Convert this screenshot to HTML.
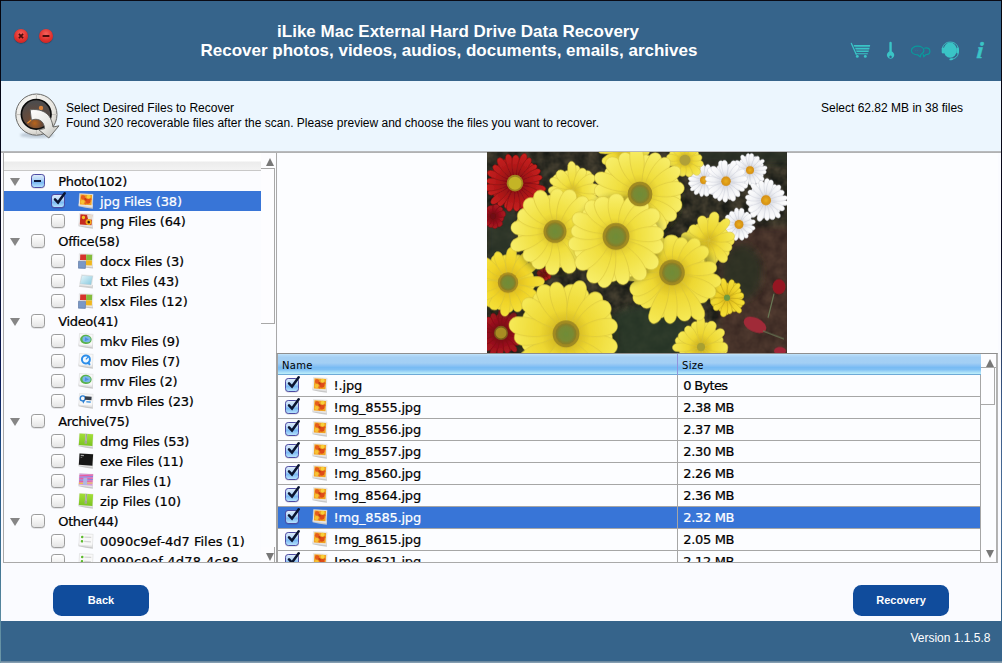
<!DOCTYPE html><html><head><meta charset="utf-8"><title>iLike Mac External Hard Drive Data Recovery</title><style>
*{box-sizing:border-box;margin:0;padding:0}
html,body{width:1002px;height:663px;overflow:hidden;background:#fafbff}
body{position:relative;font-family:"Liberation Sans",sans-serif;color:#000}
.abs{position:absolute}
#frameT{left:0;top:0;width:1002px;height:1px;background:#0a0a14}
#frameL{left:0;top:0;width:1px;height:663px;background:linear-gradient(#05050c 0,#060a24 250px,#0a1a58 380px,#1c4c84 450px,#3f7392 560px,#5a8aa0 620px,#6f98a8 663px)}
#frameR{left:1001px;top:0;width:1px;height:621px;background:linear-gradient(#05050c 0,#0a0a20 250px,#3a5a88 400px,#4a6e98 500px,#36648b 621px)}
#hdr{left:1px;top:1px;width:1000px;height:80px;background:#36648b}
#hdr .t{position:absolute;left:0;width:898px;text-align:center;color:#fff;font-weight:bold;font-size:17px;line-height:20px;white-space:nowrap}
.dot{position:absolute;width:14px;height:14px;border-radius:50%;top:28px;background:radial-gradient(circle at 50% 35%,#f4625c 0,#e0302c 55%,#c01c1c 100%);box-shadow:0 0.5px 1px rgba(0,0,0,.45)}
#info{left:1px;top:81px;width:1000px;height:71px;background:#ecf6fe}
#info .l{position:absolute;left:65px;font-size:12px;line-height:15px;white-space:nowrap;color:#000}
#main{left:1px;top:152px;width:1000px;height:469px;background:#fafbff}
#tree{left:3px;top:153px;width:274px;height:410px;border:1px solid #a9a9a9;border-top:0;background:#fbfcff;overflow:hidden}
#tree .hd{position:absolute;left:0;top:0;width:257px;height:18px;background:linear-gradient(#ffffff 0,#ffffff 45%,#ececec 55%,#f3f3f3 100%);border-bottom:1px solid #c8c8c8}
.trow{position:absolute;left:0;width:257px;height:20px}
.trow.sel,.frow.sel{background:#3875d7;color:#fff}
.tl{position:absolute;top:1px;font-family:"DejaVu Sans","Liberation Sans",sans-serif;font-size:13px;line-height:20px;white-space:nowrap;-webkit-text-stroke:0.22px}
.tri{position:absolute;left:5.6px;top:7px;width:0;height:0;border-left:5px solid transparent;border-right:5px solid transparent;border-top:8px solid #868686}
.cbw{position:absolute;top:2px;width:18px;height:18px}
.icw{position:absolute;top:2px;width:16px;height:16px}
.ico{display:block}
.cb{position:absolute;left:0px;top:1px;width:14px;height:14px;border:1px solid #9c9c9c;border-radius:3.2px;background:linear-gradient(#ffffff 0,#f2f2f2 55%,#e4e4e4 100%);box-shadow:0 0.5px 0.5px rgba(0,0,0,.18)}
.cb.on{border-color:#4c4aa2;background:linear-gradient(#deecfb 0,#b4d6f7 38%,#7cb9f3 62%,#b6e3fd 100%)}
.cb svg{position:absolute;left:-1.6px;top:-5px}
.cb .dash{position:absolute;left:2.4px;top:4.6px;width:6.8px;height:2.2px;background:#0c1838}
.sb{position:absolute;background:#fcfdff}
.sbtn{position:absolute;background:#fdfdff;border-right:1px solid #a8a8a8;border-bottom:1px solid #a8a8a8}
.aup{position:absolute;width:0;height:0;border-left:4.2px solid transparent;border-right:4.2px solid transparent;border-bottom:8px solid #787878}
.adn{position:absolute;width:0;height:0;border-left:4.2px solid transparent;border-right:4.2px solid transparent;border-top:8px solid #787878}
#right{left:278px;top:152px;width:720px;height:201px;background:#fcfdff}
.photo{position:absolute;left:487px;top:152px;z-index:3}
#tbl{left:276px;top:353px;width:722px;height:210px;border-left:2px solid #a2a2a2;border-top:1px solid #8f8f8f;border-bottom:1px solid #a9a9a9;border-right:1px solid #b4b4b4;overflow:hidden;background:#fcfdff}
#tbl .th{position:absolute;left:0;top:0;width:703px;height:21px;background:linear-gradient(#c3e4fa 0,#b1d8f7 1.5px,#a5d0f4 3.5px,#a3cff4 9px,#8cc3f4 11.5px,#78bbf3 13.5px,#80c0f4 15.5px,#a6dcf8 18px,#b8ebfa 19.5px,#b8ebfa 20px,#6eaad7 20px,#6eaad7 21px);font-family:"DejaVu Sans",sans-serif;font-size:10px;line-height:23px;letter-spacing:0.3px}
.frow{position:absolute;left:0;width:703px;height:22px;border-bottom:1px solid #a6a6a6;font-family:"DejaVu Sans","Liberation Sans",sans-serif;font-size:13px;line-height:21px;white-space:nowrap;-webkit-text-stroke:0.22px}
.fn{position:absolute;left:55.6px;top:0;letter-spacing:-0.22px}
.fs{position:absolute;left:405.3px;top:0;letter-spacing:-0.33px}
.vline{position:absolute;width:1px;background:#a6a6a6}
.btn{position:absolute;top:585px;width:96px;height:31px;border-radius:8.5px;background:#104c9c;color:#fff;font-weight:bold;font-size:11px;line-height:30px;text-align:center}
#ftr{left:1px;top:621px;width:1001px;height:40px;background:#36648b}
#ftr span{position:absolute;right:11.5px;top:10px;font-size:12px;line-height:15px;color:#fff;white-space:nowrap}
#bot{left:0;top:661px;width:1002px;height:2px;background:linear-gradient(#5f7f98,#8fa6b8)}
</style></head><body>
<div id="main" class="abs"></div>
<div id="hdr" class="abs"><i class="dot" style="left:13px"></i><i class="dot" style="left:38px"></i><svg class="abs" style="left:13px;top:28px" width="40" height="14" viewBox="0 0 40 14"><path d="M4.9 4.9 L9.1 9.1 M9.1 4.9 L4.9 9.1" stroke="#4a0c0c" stroke-width="1.7"/><path d="M28.6 7 H35.4" stroke="#4a0c0c" stroke-width="2"/></svg><div class="t" style="top:21px;left:8px">iLike Mac External Hard Drive Data Recovery</div><div class="t" style="top:40px;left:-1px">Recover photos, videos, audios, documents, emails, archives</div></div>

<svg class="abs" style="left:845px;top:36px" width="150" height="28" viewBox="845 36 150 28">
 <g fill="none" stroke="#3ac4c6" stroke-linecap="round">
  <path d="M851.4 43.4 L856.2 54.2" stroke-width="1.3"/>
  <path d="M856 53.8 L867.4 53.8" stroke-width="1.1"/>
 </g>
 <g fill="#3ac4c6">
  <path d="M853.6 45 H870.2 L869.9 46.7 H854.3 Z"/>
  <path d="M855 47.7 H869.6 L869.2 49.4 H855.7 Z"/>
  <path d="M856 50.4 H868.9 L868.5 52.1 H856.7 Z"/>
  <circle cx="857.3" cy="56.4" r="1.45"/><circle cx="865.3" cy="56.4" r="1.45"/>
 </g>
 <g fill="#3ac4c6">
  <rect x="889.35" y="41.8" width="2.4" height="11" rx="1.2"/>
  <path d="M890.55 51.3 a3.7 3.7 0 1 0 0.01 0 Z M890.55 55.6 a1.25 1.25 0 1 1 -0.01 0 Z" fill-rule="evenodd"/>
 </g>
 <g fill="none" stroke="#0a9a9c" stroke-width="1.2" stroke-linejoin="round">
  <path d="M917.6 46.2 c3.6 0 6.2 1.9 6.2 4.3 c0 1.6 -1.1 3 -2.9 3.7 l-0.6 2.8 l-2.6 -2.2 c-3.6 0 -6.3 -1.9 -6.3 -4.3 c0 -2.4 2.7 -4.3 6.2 -4.3 Z"/>
  <path d="M924.2 48.2 c0.5 -0.2 1.2 -0.3 1.9 -0.3 c2.2 0 3.8 1.5 3.8 3.3 c0 1.8 -1.6 3.3 -3.8 3.3 l-2.4 2.3 l-0.5 -2.8"/>
  <path d="M915 50.4 h0.6 M917.4 50.4 h0.6 M919.8 50.4 h0.6" stroke-width="1" opacity="0.8"/>
 </g>
 <g fill="#3ac4c6">
  <ellipse cx="950.2" cy="50.1" rx="6.6" ry="7.6"/>
  <rect x="941.7" y="47.4" width="2.7" height="6" rx="1.1"/>
  <rect x="956.3" y="47.4" width="2.7" height="6" rx="1.1"/>
 </g>
 <path d="M942.4 47.8 A8.3 8.3 0 0 1 958.2 47.8" fill="none" stroke="#3ac4c6" stroke-width="0.9"/>
 <path d="M958.3 53 C958 56.4 955.4 58.8 951.4 59.3" fill="none" stroke="#3ac4c6" stroke-width="0.9"/>
 <ellipse cx="951.2" cy="59.3" rx="1.9" ry="0.95" fill="#3ac4c6" transform="rotate(-12 951.2 59.3)"/>
 <text x="976.2" y="58.5" transform="translate(979 58.5) skewX(-5) translate(-979 -58.5)" font-family="Liberation Serif, serif" font-style="italic" font-weight="bold" font-size="23" fill="#3ac4c6" stroke="#3ac4c6" stroke-width="0.5">i</text>
</svg>

<div id="info" class="abs"><div class="l" style="top:20px">Select Desired Files to Recover</div><div class="l" style="top:35px">Found 320 recoverable files after the scan. Please preview and choose the files you want to recover.</div><div class="l" style="top:20px;left:820px">Select 62.82 MB in 38 files</div></div>

<svg class="abs" style="left:10px;top:90px" width="54" height="52" viewBox="10 90 54 52">
 <defs>
  <radialGradient id="ring" cx="40%" cy="35%" r="75%"><stop offset="0" stop-color="#ffffff"/><stop offset="0.7" stop-color="#e8e6e0"/><stop offset="1" stop-color="#b8b6b0"/></radialGradient>
  <radialGradient id="core" cx="45%" cy="80%" r="70%"><stop offset="0" stop-color="#b8641c"/><stop offset="0.35" stop-color="#6a4a38"/><stop offset="1" stop-color="#4e4c4c"/></radialGradient>
  <linearGradient id="arr" x1="0" y1="0" x2="1" y2="1"><stop offset="0" stop-color="#ffffff"/><stop offset="0.6" stop-color="#e6e6e2"/><stop offset="1" stop-color="#b4b4b0"/></linearGradient>
  <filter id="ish"><feGaussianBlur stdDeviation="1.2"/></filter>
 </defs>
 <ellipse cx="37" cy="135" rx="17" ry="3" fill="#9aa8b8" opacity="0.55" filter="url(#ish)"/>
 <circle cx="36.4" cy="114.6" r="20.6" fill="url(#ring)" stroke="#6a6a68" stroke-width="1"/>
 <path d="M36.4 94 V100 M36.4 129 V135 M15.8 114.6 H22 M51 114.6 H57" stroke="#c4c2bc" stroke-width="1"/>
 <circle cx="36.2" cy="114.3" r="14.8" fill="url(#core)" stroke="#0c0c0c" stroke-width="1.7"/>
 <circle cx="41" cy="108" r="2.2" fill="#e88a3a" opacity="0.9"/>
 <path d="M27.4 123.2 L31.6 119.6" stroke="#f0902c" stroke-width="1.2"/>
 <path d="M30.2 109.8 C38 108.6 47 111 50.6 118.6 C52 121.6 52.6 124.4 53 127 L59 125.8 L48.8 138 L38.6 129.6 L44.6 128.6 C44.4 124.6 42.6 121.4 39.4 120 C36.6 118.8 33.6 119.2 31.4 120.2 Z" fill="url(#arr)" stroke="#5c5c5a" stroke-width="0.9" stroke-linejoin="round"/>
</svg>

<div id="right" class="abs"></div>
<div class="abs" style="left:1px;top:151px;width:1000px;height:2px;background:linear-gradient(#bcbec2,#adadad)"></div>
<svg class="photo" width="300" height="201" viewBox="0 0 300 200" preserveAspectRatio="none">
<defs><radialGradient id="yc"><stop offset="0" stop-color="#6f8c38"/><stop offset="0.65" stop-color="#788a34"/><stop offset="1" stop-color="#8c7c24"/></radialGradient><radialGradient id="wc"><stop offset="0" stop-color="#eab020"/><stop offset="1" stop-color="#d48c10"/></radialGradient><linearGradient id="py" x1="0" y1="0" x2="1" y2="0"><stop offset="0" stop-color="#d0b420"/><stop offset="0.35" stop-color="#f0de3c"/><stop offset="1" stop-color="#f8ef6c"/></linearGradient><linearGradient id="py2" x1="0" y1="0" x2="1" y2="0"><stop offset="0" stop-color="#caac1c"/><stop offset="0.4" stop-color="#eed832"/><stop offset="1" stop-color="#f6ea58"/></linearGradient><linearGradient id="py3" x1="0" y1="0" x2="1" y2="0"><stop offset="0" stop-color="#d8b41c"/><stop offset="0.5" stop-color="#f0d428"/><stop offset="1" stop-color="#f6e23c"/></linearGradient><linearGradient id="pr" x1="0" y1="0" x2="1" y2="0"><stop offset="0" stop-color="#7c0e10"/><stop offset="0.5" stop-color="#ae1618"/><stop offset="1" stop-color="#c8221e"/></linearGradient><linearGradient id="pr2" x1="0" y1="0" x2="1" y2="0"><stop offset="0" stop-color="#6a0c12"/><stop offset="0.5" stop-color="#960f1c"/><stop offset="1" stop-color="#ae1a22"/></linearGradient><linearGradient id="pw" x1="0" y1="0" x2="1" y2="0"><stop offset="0" stop-color="#d4d6de"/><stop offset="0.5" stop-color="#f2f3f6"/><stop offset="1" stop-color="#ffffff"/></linearGradient><filter id="bl" x="-2%" y="-2%" width="104%" height="104%"><feGaussianBlur stdDeviation="0.55"/></filter><filter id="bg" x="0" y="0" width="100%" height="100%" color-interpolation-filters="sRGB"><feTurbulence type="fractalNoise" baseFrequency="0.09" numOctaves="3" seed="4" result="n"/><feColorMatrix in="n" type="matrix" values="0.34 0 0 0 0.02  0.28 0 0 0 0.04  0.20 0 0 0 0.04  0 0 0 0 1"/></filter><filter id="sh" x="-20%" y="-20%" width="140%" height="140%"><feGaussianBlur stdDeviation="3"/></filter></defs>
<rect width="300" height="200" fill="#383a2e"/>
<rect width="300" height="200" filter="url(#bg)" opacity="0.9"/>
<rect x="232" y="74" width="80" height="140" fill="#5a342e" opacity="0.5" filter="url(#sh)"/>
<ellipse cx="160" cy="182" rx="45" ry="30" fill="#2a3a2a" opacity="0.8" filter="url(#sh)"/>
<ellipse cx="255" cy="120" rx="20" ry="28" fill="#283224" opacity="0.7" filter="url(#sh)"/>
<rect x="0" y="58" width="28" height="50" fill="#2e382c" opacity="0.8" filter="url(#sh)"/>
<rect x="205" y="-4" width="99" height="16" fill="#2a3226" opacity="0.8" filter="url(#sh)"/>
<g filter="url(#bl)">
<g transform="translate(28.0,31.0) scale(1,1)">
<path transform="rotate(-1.8)" d="M3.2 0 C7.9 -1.8 14.8 -4.4 21.7 -3.1 C25.3 -2.0 25.3 2.0 21.7 3.1 C14.8 4.4 7.9 1.8 3.2 0Z" fill="url(#pr)" stroke="#7e0e10" stroke-width="0.5"/>
<path transform="rotate(12.1)" d="M3.2 0 C8.1 -1.7 15.4 -4.1 22.7 -2.9 C26.6 -1.9 26.6 1.9 22.7 2.9 C15.4 4.1 8.1 1.7 3.2 0Z" fill="url(#pr)" stroke="#7e0e10" stroke-width="0.5"/>
<path transform="rotate(28.3)" d="M3.2 0 C8.1 -1.6 15.4 -3.8 22.7 -2.7 C26.5 -1.8 26.5 1.8 22.7 2.7 C15.4 3.8 8.1 1.6 3.2 0Z" fill="url(#pr)" stroke="#7e0e10" stroke-width="0.5"/>
<path transform="rotate(48.4)" d="M3.2 0 C7.8 -1.6 14.6 -3.9 21.4 -2.8 C25.1 -1.8 25.1 1.8 21.4 2.8 C14.6 3.9 7.8 1.6 3.2 0Z" fill="url(#pr)" stroke="#7e0e10" stroke-width="0.5"/>
<path transform="rotate(64.7)" d="M3.2 0 C8.3 -1.6 15.9 -3.9 23.6 -2.8 C27.6 -1.8 27.6 1.8 23.6 2.8 C15.9 3.9 8.3 1.6 3.2 0Z" fill="url(#pr)" stroke="#7e0e10" stroke-width="0.5"/>
<path transform="rotate(79.1)" d="M3.2 0 C8.2 -2.0 15.6 -4.7 23.0 -3.3 C26.9 -2.2 26.9 2.2 23.0 3.3 C15.6 4.7 8.2 2.0 3.2 0Z" fill="url(#pr)" stroke="#7e0e10" stroke-width="0.5"/>
<path transform="rotate(99.0)" d="M3.2 0 C8.0 -2.0 15.2 -4.7 22.3 -3.4 C26.2 -2.2 26.2 2.2 22.3 3.4 C15.2 4.7 8.0 2.0 3.2 0Z" fill="url(#pr)" stroke="#7e0e10" stroke-width="0.5"/>
<path transform="rotate(110.0)" d="M3.2 0 C8.3 -1.7 16.0 -4.1 23.6 -2.9 C27.7 -1.9 27.7 1.9 23.6 2.9 C16.0 4.1 8.3 1.7 3.2 0Z" fill="url(#pr)" stroke="#7e0e10" stroke-width="0.5"/>
<path transform="rotate(127.4)" d="M3.2 0 C7.8 -1.7 14.7 -4.1 21.6 -2.9 C25.2 -1.9 25.2 1.9 21.6 2.9 C14.7 4.1 7.8 1.7 3.2 0Z" fill="url(#pr)" stroke="#7e0e10" stroke-width="0.5"/>
<path transform="rotate(150.4)" d="M3.2 0 C7.9 -1.8 14.8 -4.4 21.7 -3.1 C25.4 -2.0 25.4 2.0 21.7 3.1 C14.8 4.4 7.9 1.8 3.2 0Z" fill="url(#pr)" stroke="#7e0e10" stroke-width="0.5"/>
<path transform="rotate(165.0)" d="M3.2 0 C8.0 -1.8 15.1 -4.3 22.3 -3.1 C26.1 -2.0 26.1 2.0 22.3 3.1 C15.1 4.3 8.0 1.8 3.2 0Z" fill="url(#pr)" stroke="#7e0e10" stroke-width="0.5"/>
<path transform="rotate(175.6)" d="M3.2 0 C7.8 -1.7 14.6 -4.0 21.4 -2.8 C25.0 -1.8 25.0 1.8 21.4 2.8 C14.6 4.0 7.8 1.7 3.2 0Z" fill="url(#pr)" stroke="#7e0e10" stroke-width="0.5"/>
<path transform="rotate(198.2)" d="M3.2 0 C8.0 -1.7 15.2 -4.1 22.4 -2.9 C26.3 -1.9 26.3 1.9 22.4 2.9 C15.2 4.1 8.0 1.7 3.2 0Z" fill="url(#pr)" stroke="#7e0e10" stroke-width="0.5"/>
<path transform="rotate(213.6)" d="M3.2 0 C8.1 -1.7 15.3 -4.1 22.5 -2.9 C26.4 -1.9 26.4 1.9 22.5 2.9 C15.3 4.1 8.1 1.7 3.2 0Z" fill="url(#pr)" stroke="#7e0e10" stroke-width="0.5"/>
<path transform="rotate(232.0)" d="M3.2 0 C8.2 -1.7 15.7 -4.0 23.2 -2.9 C27.2 -1.8 27.2 1.8 23.2 2.9 C15.7 4.0 8.2 1.7 3.2 0Z" fill="url(#pr)" stroke="#7e0e10" stroke-width="0.5"/>
<path transform="rotate(246.2)" d="M3.2 0 C8.1 -1.9 15.4 -4.6 22.7 -3.3 C26.6 -2.1 26.6 2.1 22.7 3.3 C15.4 4.6 8.1 1.9 3.2 0Z" fill="url(#pr)" stroke="#7e0e10" stroke-width="0.5"/>
<path transform="rotate(264.1)" d="M3.2 0 C7.9 -2.0 15.0 -4.7 22.0 -3.4 C25.8 -2.2 25.8 2.2 22.0 3.4 C15.0 4.7 7.9 2.0 3.2 0Z" fill="url(#pr)" stroke="#7e0e10" stroke-width="0.5"/>
<path transform="rotate(274.4)" d="M3.2 0 C8.0 -1.9 15.2 -4.5 22.4 -3.2 C26.2 -2.1 26.2 2.1 22.4 3.2 C15.2 4.5 8.0 1.9 3.2 0Z" fill="url(#pr)" stroke="#7e0e10" stroke-width="0.5"/>
<path transform="rotate(291.1)" d="M3.2 0 C8.1 -1.6 15.3 -3.8 22.6 -2.7 C26.5 -1.8 26.5 1.8 22.6 2.7 C15.3 3.8 8.1 1.6 3.2 0Z" fill="url(#pr)" stroke="#7e0e10" stroke-width="0.5"/>
<path transform="rotate(312.6)" d="M3.2 0 C8.3 -1.8 15.8 -4.3 23.4 -3.1 C27.4 -2.0 27.4 2.0 23.4 3.1 C15.8 4.3 8.3 1.8 3.2 0Z" fill="url(#pr)" stroke="#7e0e10" stroke-width="0.5"/>
<path transform="rotate(331.0)" d="M3.2 0 C8.0 -1.9 15.0 -4.5 22.1 -3.2 C25.9 -2.0 25.9 2.0 22.1 3.2 C15.0 4.5 8.0 1.9 3.2 0Z" fill="url(#pr)" stroke="#7e0e10" stroke-width="0.5"/>
<path transform="rotate(344.6)" d="M3.2 0 C8.2 -1.8 15.5 -4.2 22.9 -3.0 C26.8 -1.9 26.8 1.9 22.9 3.0 C15.5 4.2 8.2 1.8 3.2 0Z" fill="url(#pr)" stroke="#7e0e10" stroke-width="0.5"/>
<path transform="rotate(11.6)" d="M3.2 0 C9.4 -1.8 18.5 -4.3 27.7 -3.0 C32.6 -1.9 32.6 1.9 27.7 3.0 C18.5 4.3 9.4 1.8 3.2 0Z" fill="url(#pr)" stroke="#7e0e10" stroke-width="0.5"/>
<path transform="rotate(26.2)" d="M3.2 0 C8.6 -1.9 16.7 -4.5 24.8 -3.2 C29.1 -2.0 29.1 2.0 24.8 3.2 C16.7 4.5 8.6 1.9 3.2 0Z" fill="url(#pr)" stroke="#7e0e10" stroke-width="0.5"/>
<path transform="rotate(42.4)" d="M3.2 0 C9.4 -1.9 18.6 -4.6 27.8 -3.2 C32.7 -2.1 32.7 2.1 27.8 3.2 C18.6 4.6 9.4 1.9 3.2 0Z" fill="url(#pr)" stroke="#7e0e10" stroke-width="0.5"/>
<path transform="rotate(55.1)" d="M3.2 0 C8.9 -1.8 17.4 -4.4 25.8 -3.1 C30.4 -2.0 30.4 2.0 25.8 3.1 C17.4 4.4 8.9 1.8 3.2 0Z" fill="url(#pr)" stroke="#7e0e10" stroke-width="0.5"/>
<path transform="rotate(68.9)" d="M3.2 0 C9.0 -1.7 17.5 -4.0 26.1 -2.8 C30.7 -1.8 30.7 1.8 26.1 2.8 C17.5 4.0 9.0 1.7 3.2 0Z" fill="url(#pr)" stroke="#7e0e10" stroke-width="0.5"/>
<path transform="rotate(86.2)" d="M3.2 0 C8.6 -1.9 16.7 -4.5 24.8 -3.2 C29.1 -2.1 29.1 2.1 24.8 3.2 C16.7 4.5 8.6 1.9 3.2 0Z" fill="url(#pr)" stroke="#7e0e10" stroke-width="0.5"/>
<path transform="rotate(102.7)" d="M3.2 0 C8.8 -1.7 17.1 -4.2 25.4 -3.0 C29.8 -1.9 29.8 1.9 25.4 3.0 C17.1 4.2 8.8 1.7 3.2 0Z" fill="url(#pr)" stroke="#7e0e10" stroke-width="0.5"/>
<path transform="rotate(126.4)" d="M3.2 0 C8.6 -1.8 16.7 -4.2 24.8 -3.0 C29.2 -1.9 29.2 1.9 24.8 3.0 C16.7 4.2 8.6 1.8 3.2 0Z" fill="url(#pr)" stroke="#7e0e10" stroke-width="0.5"/>
<path transform="rotate(139.6)" d="M3.2 0 C9.3 -1.9 18.4 -4.6 27.5 -3.2 C32.3 -2.1 32.3 2.1 27.5 3.2 C18.4 4.6 9.3 1.9 3.2 0Z" fill="url(#pr)" stroke="#7e0e10" stroke-width="0.5"/>
<path transform="rotate(159.1)" d="M3.2 0 C8.8 -1.7 17.2 -4.2 25.5 -3.0 C29.9 -1.9 29.9 1.9 25.5 3.0 C17.2 4.2 8.8 1.7 3.2 0Z" fill="url(#pr)" stroke="#7e0e10" stroke-width="0.5"/>
<path transform="rotate(170.4)" d="M3.2 0 C9.3 -2.0 18.4 -4.7 27.5 -3.3 C32.3 -2.2 32.3 2.2 27.5 3.3 C18.4 4.7 9.3 2.0 3.2 0Z" fill="url(#pr)" stroke="#7e0e10" stroke-width="0.5"/>
<path transform="rotate(184.7)" d="M3.2 0 C8.7 -1.7 16.9 -4.0 25.2 -2.8 C29.5 -1.8 29.5 1.8 25.2 2.8 C16.9 4.0 8.7 1.7 3.2 0Z" fill="url(#pr)" stroke="#7e0e10" stroke-width="0.5"/>
<path transform="rotate(201.9)" d="M3.2 0 C9.0 -1.8 17.6 -4.4 26.2 -3.1 C30.8 -2.0 30.8 2.0 26.2 3.1 C17.6 4.4 9.0 1.8 3.2 0Z" fill="url(#pr)" stroke="#7e0e10" stroke-width="0.5"/>
<path transform="rotate(218.5)" d="M3.2 0 C8.6 -1.7 16.6 -4.2 24.6 -3.0 C28.9 -1.9 28.9 1.9 24.6 3.0 C16.6 4.2 8.6 1.7 3.2 0Z" fill="url(#pr)" stroke="#7e0e10" stroke-width="0.5"/>
<path transform="rotate(236.0)" d="M3.2 0 C9.0 -2.0 17.7 -4.7 26.4 -3.3 C31.1 -2.2 31.1 2.2 26.4 3.3 C17.7 4.7 9.0 2.0 3.2 0Z" fill="url(#pr)" stroke="#7e0e10" stroke-width="0.5"/>
<path transform="rotate(255.5)" d="M3.2 0 C9.0 -1.8 17.6 -4.4 26.3 -3.1 C30.9 -2.0 30.9 2.0 26.3 3.1 C17.6 4.4 9.0 1.8 3.2 0Z" fill="url(#pr)" stroke="#7e0e10" stroke-width="0.5"/>
<path transform="rotate(271.8)" d="M3.2 0 C8.6 -1.9 16.7 -4.7 24.8 -3.3 C29.1 -2.1 29.1 2.1 24.8 3.3 C16.7 4.7 8.6 1.9 3.2 0Z" fill="url(#pr)" stroke="#7e0e10" stroke-width="0.5"/>
<path transform="rotate(289.2)" d="M3.2 0 C9.3 -1.9 18.4 -4.6 27.4 -3.2 C32.3 -2.1 32.3 2.1 27.4 3.2 C18.4 4.6 9.3 1.9 3.2 0Z" fill="url(#pr)" stroke="#7e0e10" stroke-width="0.5"/>
<path transform="rotate(301.7)" d="M3.2 0 C8.9 -1.6 17.4 -3.9 25.9 -2.8 C30.4 -1.8 30.4 1.8 25.9 2.8 C17.4 3.9 8.9 1.6 3.2 0Z" fill="url(#pr)" stroke="#7e0e10" stroke-width="0.5"/>
<path transform="rotate(320.4)" d="M3.2 0 C8.6 -1.6 16.7 -3.9 24.8 -2.7 C29.1 -1.8 29.1 1.8 24.8 2.7 C16.7 3.9 8.6 1.6 3.2 0Z" fill="url(#pr)" stroke="#7e0e10" stroke-width="0.5"/>
<path transform="rotate(332.5)" d="M3.2 0 C8.7 -1.7 16.9 -4.1 25.1 -2.9 C29.5 -1.9 29.5 1.9 25.1 2.9 C16.9 4.1 8.7 1.7 3.2 0Z" fill="url(#pr)" stroke="#7e0e10" stroke-width="0.5"/>
<path transform="rotate(347.3)" d="M3.2 0 C8.6 -1.6 16.6 -3.9 24.6 -2.8 C28.9 -1.8 28.9 1.8 24.6 2.8 C16.6 3.9 8.6 1.6 3.2 0Z" fill="url(#pr)" stroke="#7e0e10" stroke-width="0.5"/>
<circle r="8.3" fill="#a08420"/>
<circle r="6.5" fill="#c4b428"/>
</g>
<g transform="translate(6.0,64.0) scale(1,1)">
<path transform="rotate(-4.0)" d="M1.5 0 C3.3 -1.4 6.0 -3.4 8.7 -2.4 C10.1 -1.6 10.1 1.6 8.7 2.4 C6.0 3.4 3.3 1.4 1.5 0Z" fill="url(#pr2)" stroke="#7e0e10" stroke-width="0.5"/>
<path transform="rotate(33.7)" d="M1.5 0 C3.4 -1.5 6.3 -3.5 9.2 -2.5 C10.7 -1.6 10.7 1.6 9.2 2.5 C6.3 3.5 3.4 1.5 1.5 0Z" fill="url(#pr2)" stroke="#7e0e10" stroke-width="0.5"/>
<path transform="rotate(57.5)" d="M1.5 0 C3.3 -1.5 6.0 -3.7 8.7 -2.6 C10.1 -1.7 10.1 1.7 8.7 2.6 C6.0 3.7 3.3 1.5 1.5 0Z" fill="url(#pr2)" stroke="#7e0e10" stroke-width="0.5"/>
<path transform="rotate(86.2)" d="M1.5 0 C3.5 -1.8 6.6 -4.2 9.6 -3.0 C11.3 -1.9 11.3 1.9 9.6 3.0 C6.6 4.2 3.5 1.8 1.5 0Z" fill="url(#pr2)" stroke="#7e0e10" stroke-width="0.5"/>
<path transform="rotate(119.7)" d="M1.5 0 C3.4 -1.4 6.1 -3.5 8.9 -2.4 C10.4 -1.6 10.4 1.6 8.9 2.4 C6.1 3.5 3.4 1.4 1.5 0Z" fill="url(#pr2)" stroke="#7e0e10" stroke-width="0.5"/>
<path transform="rotate(146.0)" d="M1.5 0 C3.3 -1.5 6.0 -3.6 8.7 -2.6 C10.1 -1.7 10.1 1.7 8.7 2.6 C6.0 3.6 3.3 1.5 1.5 0Z" fill="url(#pr2)" stroke="#7e0e10" stroke-width="0.5"/>
<path transform="rotate(183.3)" d="M1.5 0 C3.2 -1.4 5.8 -3.4 8.3 -2.4 C9.7 -1.6 9.7 1.6 8.3 2.4 C5.8 3.4 3.2 1.4 1.5 0Z" fill="url(#pr2)" stroke="#7e0e10" stroke-width="0.5"/>
<path transform="rotate(214.5)" d="M1.5 0 C3.4 -1.5 6.2 -3.5 9.0 -2.5 C10.5 -1.6 10.5 1.6 9.0 2.5 C6.2 3.5 3.4 1.5 1.5 0Z" fill="url(#pr2)" stroke="#7e0e10" stroke-width="0.5"/>
<path transform="rotate(240.4)" d="M1.5 0 C3.1 -1.6 5.6 -3.8 8.1 -2.7 C9.4 -1.8 9.4 1.8 8.1 2.7 C5.6 3.8 3.1 1.6 1.5 0Z" fill="url(#pr2)" stroke="#7e0e10" stroke-width="0.5"/>
<path transform="rotate(274.8)" d="M1.5 0 C3.5 -1.7 6.6 -4.0 9.7 -2.8 C11.3 -1.8 11.3 1.8 9.7 2.8 C6.6 4.0 3.5 1.7 1.5 0Z" fill="url(#pr2)" stroke="#7e0e10" stroke-width="0.5"/>
<path transform="rotate(297.6)" d="M1.5 0 C3.3 -1.5 6.0 -3.5 8.7 -2.5 C10.2 -1.6 10.2 1.6 8.7 2.5 C6.0 3.5 3.3 1.5 1.5 0Z" fill="url(#pr2)" stroke="#7e0e10" stroke-width="0.5"/>
<path transform="rotate(332.7)" d="M1.5 0 C3.4 -1.7 6.2 -4.0 9.0 -2.9 C10.5 -1.9 10.5 1.9 9.0 2.9 C6.2 4.0 3.4 1.7 1.5 0Z" fill="url(#pr2)" stroke="#7e0e10" stroke-width="0.5"/>
<path transform="rotate(13.3)" d="M1.5 0 C3.6 -1.7 6.7 -4.1 9.8 -2.9 C11.4 -1.9 11.4 1.9 9.8 2.9 C6.7 4.1 3.6 1.7 1.5 0Z" fill="url(#pr2)" stroke="#7e0e10" stroke-width="0.5"/>
<path transform="rotate(49.8)" d="M1.5 0 C3.9 -1.7 7.5 -4.1 11.2 -2.9 C13.1 -1.9 13.1 1.9 11.2 2.9 C7.5 4.1 3.9 1.7 1.5 0Z" fill="url(#pr2)" stroke="#7e0e10" stroke-width="0.5"/>
<path transform="rotate(78.2)" d="M1.5 0 C3.9 -1.5 7.4 -3.6 10.9 -2.5 C12.8 -1.6 12.8 1.6 10.9 2.5 C7.4 3.6 3.9 1.5 1.5 0Z" fill="url(#pr2)" stroke="#7e0e10" stroke-width="0.5"/>
<path transform="rotate(105.2)" d="M1.5 0 C3.6 -1.4 6.8 -3.4 10.1 -2.4 C11.8 -1.6 11.8 1.6 10.1 2.4 C6.8 3.4 3.6 1.4 1.5 0Z" fill="url(#pr2)" stroke="#7e0e10" stroke-width="0.5"/>
<path transform="rotate(130.3)" d="M1.5 0 C3.6 -1.5 6.7 -3.6 9.9 -2.5 C11.6 -1.6 11.6 1.6 9.9 2.5 C6.7 3.6 3.6 1.5 1.5 0Z" fill="url(#pr2)" stroke="#7e0e10" stroke-width="0.5"/>
<path transform="rotate(166.9)" d="M1.5 0 C4.0 -1.6 7.7 -3.8 11.4 -2.7 C13.4 -1.7 13.4 1.7 11.4 2.7 C7.7 3.8 4.0 1.6 1.5 0Z" fill="url(#pr2)" stroke="#7e0e10" stroke-width="0.5"/>
<path transform="rotate(199.4)" d="M1.5 0 C4.0 -1.7 7.7 -4.2 11.5 -3.0 C13.5 -1.9 13.5 1.9 11.5 3.0 C7.7 4.2 4.0 1.7 1.5 0Z" fill="url(#pr2)" stroke="#7e0e10" stroke-width="0.5"/>
<path transform="rotate(223.6)" d="M1.5 0 C3.6 -1.5 6.7 -3.6 9.8 -2.5 C11.4 -1.6 11.4 1.6 9.8 2.5 C6.7 3.6 3.6 1.5 1.5 0Z" fill="url(#pr2)" stroke="#7e0e10" stroke-width="0.5"/>
<path transform="rotate(252.0)" d="M1.5 0 C3.6 -1.6 6.6 -3.9 9.7 -2.8 C11.4 -1.8 11.4 1.8 9.7 2.8 C6.6 3.9 3.6 1.6 1.5 0Z" fill="url(#pr2)" stroke="#7e0e10" stroke-width="0.5"/>
<path transform="rotate(289.0)" d="M1.5 0 C3.9 -1.6 7.5 -3.8 11.1 -2.7 C13.1 -1.7 13.1 1.7 11.1 2.7 C7.5 3.8 3.9 1.6 1.5 0Z" fill="url(#pr2)" stroke="#7e0e10" stroke-width="0.5"/>
<path transform="rotate(316.5)" d="M1.5 0 C3.9 -1.4 7.5 -3.5 11.1 -2.4 C13.0 -1.6 13.0 1.6 11.1 2.4 C7.5 3.5 3.9 1.4 1.5 0Z" fill="url(#pr2)" stroke="#7e0e10" stroke-width="0.5"/>
<path transform="rotate(346.6)" d="M1.5 0 C3.9 -1.7 7.6 -4.0 11.3 -2.9 C13.3 -1.9 13.3 1.9 11.3 2.9 C7.6 4.0 3.9 1.7 1.5 0Z" fill="url(#pr2)" stroke="#7e0e10" stroke-width="0.5"/>
<circle r="3.0" fill="#701012"/>
</g>
<g transform="translate(14.0,180.0) scale(1,1)">
<path transform="rotate(2.5)" d="M2.8 0 C6.4 -1.6 11.8 -3.8 17.2 -2.7 C20.1 -1.7 20.1 1.7 17.2 2.7 C11.8 3.8 6.4 1.6 2.8 0Z" fill="url(#pr2)" stroke="#7e0e10" stroke-width="0.5"/>
<path transform="rotate(22.9)" d="M2.8 0 C6.2 -1.8 11.4 -4.3 16.6 -3.1 C19.4 -2.0 19.4 2.0 16.6 3.1 C11.4 4.3 6.2 1.8 2.8 0Z" fill="url(#pr2)" stroke="#7e0e10" stroke-width="0.5"/>
<path transform="rotate(44.7)" d="M2.8 0 C6.3 -1.6 11.6 -4.0 16.9 -2.8 C19.7 -1.8 19.7 1.8 16.9 2.8 C11.6 4.0 6.3 1.6 2.8 0Z" fill="url(#pr2)" stroke="#7e0e10" stroke-width="0.5"/>
<path transform="rotate(64.5)" d="M2.8 0 C6.6 -1.6 12.3 -3.7 18.1 -2.7 C21.2 -1.7 21.2 1.7 18.1 2.7 C12.3 3.7 6.6 1.6 2.8 0Z" fill="url(#pr2)" stroke="#7e0e10" stroke-width="0.5"/>
<path transform="rotate(76.3)" d="M2.8 0 C6.1 -1.8 11.0 -4.4 16.0 -3.1 C18.6 -2.0 18.6 2.0 16.0 3.1 C11.0 4.4 6.1 1.8 2.8 0Z" fill="url(#pr2)" stroke="#7e0e10" stroke-width="0.5"/>
<path transform="rotate(103.1)" d="M2.8 0 C6.1 -1.8 11.0 -4.3 16.0 -3.1 C18.6 -2.0 18.6 2.0 16.0 3.1 C11.0 4.3 6.1 1.8 2.8 0Z" fill="url(#pr2)" stroke="#7e0e10" stroke-width="0.5"/>
<path transform="rotate(124.8)" d="M2.8 0 C6.5 -1.6 12.2 -3.9 17.9 -2.8 C20.9 -1.8 20.9 1.8 17.9 2.8 C12.2 3.9 6.5 1.6 2.8 0Z" fill="url(#pr2)" stroke="#7e0e10" stroke-width="0.5"/>
<path transform="rotate(140.5)" d="M2.8 0 C6.0 -1.5 11.0 -3.6 15.9 -2.6 C18.5 -1.7 18.5 1.7 15.9 2.6 C11.0 3.6 6.0 1.5 2.8 0Z" fill="url(#pr2)" stroke="#7e0e10" stroke-width="0.5"/>
<path transform="rotate(164.7)" d="M2.8 0 C6.5 -1.7 12.2 -4.1 17.8 -2.9 C20.8 -1.9 20.8 1.9 17.8 2.9 C12.2 4.1 6.5 1.7 2.8 0Z" fill="url(#pr2)" stroke="#7e0e10" stroke-width="0.5"/>
<path transform="rotate(184.3)" d="M2.8 0 C6.3 -1.8 11.7 -4.4 17.0 -3.1 C19.9 -2.0 19.9 2.0 17.0 3.1 C11.7 4.4 6.3 1.8 2.8 0Z" fill="url(#pr2)" stroke="#7e0e10" stroke-width="0.5"/>
<path transform="rotate(203.3)" d="M2.8 0 C6.1 -1.6 11.2 -3.8 16.2 -2.7 C18.9 -1.7 18.9 1.7 16.2 2.7 C11.2 3.8 6.1 1.6 2.8 0Z" fill="url(#pr2)" stroke="#7e0e10" stroke-width="0.5"/>
<path transform="rotate(217.9)" d="M2.8 0 C6.1 -1.7 11.2 -4.1 16.3 -2.9 C19.0 -1.9 19.0 1.9 16.3 2.9 C11.2 4.1 6.1 1.7 2.8 0Z" fill="url(#pr2)" stroke="#7e0e10" stroke-width="0.5"/>
<path transform="rotate(237.6)" d="M2.8 0 C6.3 -1.5 11.6 -3.7 17.0 -2.6 C19.8 -1.7 19.8 1.7 17.0 2.6 C11.6 3.7 6.3 1.5 2.8 0Z" fill="url(#pr2)" stroke="#7e0e10" stroke-width="0.5"/>
<path transform="rotate(264.1)" d="M2.8 0 C6.2 -1.7 11.5 -4.0 16.7 -2.8 C19.5 -1.8 19.5 1.8 16.7 2.8 C11.5 4.0 6.2 1.7 2.8 0Z" fill="url(#pr2)" stroke="#7e0e10" stroke-width="0.5"/>
<path transform="rotate(280.8)" d="M2.8 0 C6.8 -1.7 12.8 -4.0 18.8 -2.8 C22.0 -1.8 22.0 1.8 18.8 2.8 C12.8 4.0 6.8 1.7 2.8 0Z" fill="url(#pr2)" stroke="#7e0e10" stroke-width="0.5"/>
<path transform="rotate(304.2)" d="M2.8 0 C6.4 -1.7 11.8 -4.1 17.3 -2.9 C20.2 -1.9 20.2 1.9 17.3 2.9 C11.8 4.1 6.4 1.7 2.8 0Z" fill="url(#pr2)" stroke="#7e0e10" stroke-width="0.5"/>
<path transform="rotate(320.2)" d="M2.8 0 C5.9 -1.7 10.7 -4.0 15.5 -2.8 C18.0 -1.8 18.0 1.8 15.5 2.8 C10.7 4.0 5.9 1.7 2.8 0Z" fill="url(#pr2)" stroke="#7e0e10" stroke-width="0.5"/>
<path transform="rotate(336.8)" d="M2.8 0 C5.9 -1.8 10.7 -4.3 15.4 -3.1 C18.0 -2.0 18.0 2.0 15.4 3.1 C10.7 4.3 5.9 1.8 2.8 0Z" fill="url(#pr2)" stroke="#7e0e10" stroke-width="0.5"/>
<path transform="rotate(6.7)" d="M2.8 0 C7.0 -1.8 13.5 -4.2 19.9 -3.0 C23.3 -1.9 23.3 1.9 19.9 3.0 C13.5 4.2 7.0 1.8 2.8 0Z" fill="url(#pr2)" stroke="#7e0e10" stroke-width="0.5"/>
<path transform="rotate(30.6)" d="M2.8 0 C6.9 -1.7 13.1 -4.1 19.2 -2.9 C22.5 -1.9 22.5 1.9 19.2 2.9 C13.1 4.1 6.9 1.7 2.8 0Z" fill="url(#pr2)" stroke="#7e0e10" stroke-width="0.5"/>
<path transform="rotate(50.6)" d="M2.8 0 C7.4 -1.5 14.3 -3.7 21.2 -2.6 C24.9 -1.7 24.9 1.7 21.2 2.6 C14.3 3.7 7.4 1.5 2.8 0Z" fill="url(#pr2)" stroke="#7e0e10" stroke-width="0.5"/>
<path transform="rotate(70.6)" d="M2.8 0 C6.8 -1.6 12.8 -3.8 18.9 -2.7 C22.1 -1.8 22.1 1.8 18.9 2.7 C12.8 3.8 6.8 1.6 2.8 0Z" fill="url(#pr2)" stroke="#7e0e10" stroke-width="0.5"/>
<path transform="rotate(92.7)" d="M2.8 0 C7.1 -1.7 13.5 -4.1 20.0 -2.9 C23.5 -1.9 23.5 1.9 20.0 2.9 C13.5 4.1 7.1 1.7 2.8 0Z" fill="url(#pr2)" stroke="#7e0e10" stroke-width="0.5"/>
<path transform="rotate(112.6)" d="M2.8 0 C7.5 -1.7 14.6 -4.0 21.8 -2.8 C25.6 -1.8 25.6 1.8 21.8 2.8 C14.6 4.0 7.5 1.7 2.8 0Z" fill="url(#pr2)" stroke="#7e0e10" stroke-width="0.5"/>
<path transform="rotate(131.1)" d="M2.8 0 C7.1 -1.7 13.5 -4.1 20.0 -2.9 C23.5 -1.9 23.5 1.9 20.0 2.9 C13.5 4.1 7.1 1.7 2.8 0Z" fill="url(#pr2)" stroke="#7e0e10" stroke-width="0.5"/>
<path transform="rotate(151.9)" d="M2.8 0 C7.0 -1.7 13.4 -4.1 19.8 -2.9 C23.2 -1.9 23.2 1.9 19.8 2.9 C13.4 4.1 7.0 1.7 2.8 0Z" fill="url(#pr2)" stroke="#7e0e10" stroke-width="0.5"/>
<path transform="rotate(169.8)" d="M2.8 0 C7.5 -1.8 14.7 -4.2 21.9 -3.0 C25.7 -1.9 25.7 1.9 21.9 3.0 C14.7 4.2 7.5 1.8 2.8 0Z" fill="url(#pr2)" stroke="#7e0e10" stroke-width="0.5"/>
<path transform="rotate(193.8)" d="M2.8 0 C7.5 -1.6 14.7 -3.8 21.9 -2.7 C25.7 -1.8 25.7 1.8 21.9 2.7 C14.7 3.8 7.5 1.6 2.8 0Z" fill="url(#pr2)" stroke="#7e0e10" stroke-width="0.5"/>
<path transform="rotate(210.6)" d="M2.8 0 C7.5 -1.8 14.7 -4.3 21.9 -3.1 C25.7 -2.0 25.7 2.0 21.9 3.1 C14.7 4.3 7.5 1.8 2.8 0Z" fill="url(#pr2)" stroke="#7e0e10" stroke-width="0.5"/>
<path transform="rotate(226.4)" d="M2.8 0 C6.7 -1.7 12.5 -4.0 18.4 -2.8 C21.5 -1.8 21.5 1.8 18.4 2.8 C12.5 4.0 6.7 1.7 2.8 0Z" fill="url(#pr2)" stroke="#7e0e10" stroke-width="0.5"/>
<path transform="rotate(245.7)" d="M2.8 0 C6.8 -1.5 12.8 -3.7 18.9 -2.6 C22.1 -1.7 22.1 1.7 18.9 2.6 C12.8 3.7 6.8 1.5 2.8 0Z" fill="url(#pr2)" stroke="#7e0e10" stroke-width="0.5"/>
<path transform="rotate(271.7)" d="M2.8 0 C7.4 -1.8 14.3 -4.4 21.2 -3.1 C24.9 -2.0 24.9 2.0 21.2 3.1 C14.3 4.4 7.4 1.8 2.8 0Z" fill="url(#pr2)" stroke="#7e0e10" stroke-width="0.5"/>
<path transform="rotate(286.5)" d="M2.8 0 C7.3 -1.7 14.1 -4.2 20.9 -3.0 C24.6 -1.9 24.6 1.9 20.9 3.0 C14.1 4.2 7.3 1.7 2.8 0Z" fill="url(#pr2)" stroke="#7e0e10" stroke-width="0.5"/>
<path transform="rotate(306.4)" d="M2.8 0 C7.5 -1.9 14.6 -4.5 21.6 -3.2 C25.4 -2.0 25.4 2.0 21.6 3.2 C14.6 4.5 7.5 1.9 2.8 0Z" fill="url(#pr2)" stroke="#7e0e10" stroke-width="0.5"/>
<path transform="rotate(327.2)" d="M2.8 0 C7.5 -1.6 14.7 -3.9 21.9 -2.8 C25.8 -1.8 25.8 1.8 21.9 2.8 C14.7 3.9 7.5 1.6 2.8 0Z" fill="url(#pr2)" stroke="#7e0e10" stroke-width="0.5"/>
<path transform="rotate(349.9)" d="M2.8 0 C7.6 -1.8 14.8 -4.3 22.1 -3.1 C26.0 -2.0 26.0 2.0 22.1 3.1 C14.8 4.3 7.6 1.8 2.8 0Z" fill="url(#pr2)" stroke="#7e0e10" stroke-width="0.5"/>
<circle r="7.0" fill="#7a5a18"/>
<circle r="5.5" fill="#a88c24"/>
</g>
<g transform="translate(57.0,122.0) scale(1,1)">
<path transform="rotate(-3.4)" d="M1.0 0 C2.0 -1.2 3.5 -2.9 5.1 -2.0 C5.9 -1.3 5.9 1.3 5.1 2.0 C3.5 2.9 2.0 1.2 1.0 0Z" fill="url(#pr)" stroke="#7e0e10" stroke-width="0.5"/>
<path transform="rotate(43.4)" d="M1.0 0 C2.0 -1.1 3.4 -2.7 4.8 -1.9 C5.6 -1.3 5.6 1.3 4.8 1.9 C3.4 2.7 2.0 1.1 1.0 0Z" fill="url(#pr)" stroke="#7e0e10" stroke-width="0.5"/>
<path transform="rotate(92.2)" d="M1.0 0 C1.9 -1.2 3.3 -2.9 4.6 -2.0 C5.3 -1.3 5.3 1.3 4.6 2.0 C3.3 2.9 1.9 1.2 1.0 0Z" fill="url(#pr)" stroke="#7e0e10" stroke-width="0.5"/>
<path transform="rotate(134.4)" d="M1.0 0 C1.9 -1.1 3.3 -2.7 4.6 -1.9 C5.3 -1.3 5.3 1.3 4.6 1.9 C3.3 2.7 1.9 1.1 1.0 0Z" fill="url(#pr)" stroke="#7e0e10" stroke-width="0.5"/>
<path transform="rotate(181.2)" d="M1.0 0 C2.0 -1.1 3.6 -2.6 5.2 -1.8 C6.0 -1.2 6.0 1.2 5.2 1.8 C3.6 2.6 2.0 1.1 1.0 0Z" fill="url(#pr)" stroke="#7e0e10" stroke-width="0.5"/>
<path transform="rotate(229.9)" d="M1.0 0 C2.1 -1.3 3.8 -3.2 5.5 -2.2 C6.4 -1.4 6.4 1.4 5.5 2.2 C3.8 3.2 2.1 1.3 1.0 0Z" fill="url(#pr)" stroke="#7e0e10" stroke-width="0.5"/>
<path transform="rotate(266.0)" d="M1.0 0 C2.0 -1.1 3.4 -2.6 4.9 -1.8 C5.7 -1.2 5.7 1.2 4.9 1.8 C3.4 2.6 2.0 1.1 1.0 0Z" fill="url(#pr)" stroke="#7e0e10" stroke-width="0.5"/>
<path transform="rotate(317.8)" d="M1.0 0 C2.0 -1.1 3.4 -2.6 4.9 -1.9 C5.7 -1.2 5.7 1.2 4.9 1.9 C3.4 2.6 2.0 1.1 1.0 0Z" fill="url(#pr)" stroke="#7e0e10" stroke-width="0.5"/>
<path transform="rotate(21.7)" d="M1.0 0 C2.4 -1.3 4.4 -3.1 6.5 -2.2 C7.6 -1.4 7.6 1.4 6.5 2.2 C4.4 3.1 2.4 1.3 1.0 0Z" fill="url(#pr)" stroke="#7e0e10" stroke-width="0.5"/>
<path transform="rotate(65.1)" d="M1.0 0 C2.1 -1.3 3.8 -3.1 5.5 -2.2 C6.4 -1.4 6.4 1.4 5.5 2.2 C3.8 3.1 2.1 1.3 1.0 0Z" fill="url(#pr)" stroke="#7e0e10" stroke-width="0.5"/>
<path transform="rotate(113.2)" d="M1.0 0 C2.3 -1.1 4.3 -2.6 6.2 -1.8 C7.3 -1.2 7.3 1.2 6.2 1.8 C4.3 2.6 2.3 1.1 1.0 0Z" fill="url(#pr)" stroke="#7e0e10" stroke-width="0.5"/>
<path transform="rotate(153.1)" d="M1.0 0 C2.3 -1.2 4.3 -2.8 6.2 -2.0 C7.2 -1.3 7.2 1.3 6.2 2.0 C4.3 2.8 2.3 1.2 1.0 0Z" fill="url(#pr)" stroke="#7e0e10" stroke-width="0.5"/>
<path transform="rotate(198.2)" d="M1.0 0 C2.4 -1.2 4.5 -2.9 6.5 -2.1 C7.6 -1.3 7.6 1.3 6.5 2.1 C4.5 2.9 2.4 1.2 1.0 0Z" fill="url(#pr)" stroke="#7e0e10" stroke-width="0.5"/>
<path transform="rotate(250.5)" d="M1.0 0 C2.1 -1.3 3.8 -3.1 5.4 -2.2 C6.3 -1.4 6.3 1.4 5.4 2.2 C3.8 3.1 2.1 1.3 1.0 0Z" fill="url(#pr)" stroke="#7e0e10" stroke-width="0.5"/>
<path transform="rotate(288.2)" d="M1.0 0 C2.4 -1.2 4.4 -2.8 6.4 -2.0 C7.5 -1.3 7.5 1.3 6.4 2.0 C4.4 2.8 2.4 1.2 1.0 0Z" fill="url(#pr)" stroke="#7e0e10" stroke-width="0.5"/>
<path transform="rotate(335.9)" d="M1.0 0 C2.3 -1.3 4.1 -3.1 6.0 -2.2 C7.0 -1.4 7.0 1.4 6.0 2.2 C4.1 3.1 2.3 1.3 1.0 0Z" fill="url(#pr)" stroke="#7e0e10" stroke-width="0.5"/>
<circle r="2.0" fill="#8e1012"/>
</g>
<ellipse cx="292" cy="134" rx="6.5" ry="7.5" fill="#961822"/>
<ellipse cx="268" cy="172" rx="12" ry="7" fill="#a02a38" transform="rotate(25 268 172)"/>
<ellipse cx="293" cy="198" rx="6" ry="4" fill="#a02838"/>
<path d="M281 165 L287 141 M276 178 L297 186" stroke="#6a7a58" stroke-width="1.2" fill="none"/>
<g transform="translate(217.0,28.0) scale(1,1)">
<path transform="rotate(-2.3)" d="M2.0 0 C4.6 -1.3 8.5 -3.1 12.3 -2.2 C14.4 -1.4 14.4 1.4 12.3 2.2 C8.5 3.1 4.6 1.3 2.0 0Z" fill="url(#pw)" stroke="#c0c4d0" stroke-width="0.35"/>
<path transform="rotate(19.9)" d="M2.0 0 C4.6 -1.2 8.4 -2.9 12.3 -2.0 C14.4 -1.3 14.4 1.3 12.3 2.0 C8.4 2.9 4.6 1.2 2.0 0Z" fill="url(#pw)" stroke="#c0c4d0" stroke-width="0.35"/>
<path transform="rotate(40.5)" d="M2.0 0 C4.6 -1.2 8.5 -3.0 12.4 -2.1 C14.5 -1.4 14.5 1.4 12.4 2.1 C8.5 3.0 4.6 1.2 2.0 0Z" fill="url(#pw)" stroke="#c0c4d0" stroke-width="0.35"/>
<path transform="rotate(65.6)" d="M2.0 0 C4.8 -1.2 9.0 -2.9 13.2 -2.1 C15.4 -1.3 15.4 1.3 13.2 2.1 C9.0 2.9 4.8 1.2 2.0 0Z" fill="url(#pw)" stroke="#c0c4d0" stroke-width="0.35"/>
<path transform="rotate(90.0)" d="M2.0 0 C4.6 -1.2 8.5 -3.0 12.4 -2.1 C14.5 -1.4 14.5 1.4 12.4 2.1 C8.5 3.0 4.6 1.2 2.0 0Z" fill="url(#pw)" stroke="#c0c4d0" stroke-width="0.35"/>
<path transform="rotate(107.7)" d="M2.0 0 C4.6 -1.1 8.6 -2.8 12.5 -2.0 C14.6 -1.3 14.6 1.3 12.5 2.0 C8.6 2.8 4.6 1.1 2.0 0Z" fill="url(#pw)" stroke="#c0c4d0" stroke-width="0.35"/>
<path transform="rotate(137.3)" d="M2.0 0 C4.7 -1.2 8.8 -2.9 12.9 -2.0 C15.1 -1.3 15.1 1.3 12.9 2.0 C8.8 2.9 4.7 1.2 2.0 0Z" fill="url(#pw)" stroke="#c0c4d0" stroke-width="0.35"/>
<path transform="rotate(157.2)" d="M2.0 0 C4.8 -1.2 9.1 -2.8 13.4 -2.0 C15.7 -1.3 15.7 1.3 13.4 2.0 C9.1 2.8 4.8 1.2 2.0 0Z" fill="url(#pw)" stroke="#c0c4d0" stroke-width="0.35"/>
<path transform="rotate(183.2)" d="M2.0 0 C4.7 -1.3 8.7 -3.1 12.7 -2.2 C14.9 -1.4 14.9 1.4 12.7 2.2 C8.7 3.1 4.7 1.3 2.0 0Z" fill="url(#pw)" stroke="#c0c4d0" stroke-width="0.35"/>
<path transform="rotate(205.8)" d="M2.0 0 C4.7 -1.3 8.7 -3.1 12.7 -2.2 C14.8 -1.4 14.8 1.4 12.7 2.2 C8.7 3.1 4.7 1.3 2.0 0Z" fill="url(#pw)" stroke="#c0c4d0" stroke-width="0.35"/>
<path transform="rotate(226.9)" d="M2.0 0 C4.9 -1.2 9.2 -3.0 13.4 -2.1 C15.7 -1.4 15.7 1.4 13.4 2.1 C9.2 3.0 4.9 1.2 2.0 0Z" fill="url(#pw)" stroke="#c0c4d0" stroke-width="0.35"/>
<path transform="rotate(250.8)" d="M2.0 0 C4.8 -1.3 8.9 -3.2 13.1 -2.3 C15.3 -1.5 15.3 1.5 13.1 2.3 C8.9 3.2 4.8 1.3 2.0 0Z" fill="url(#pw)" stroke="#c0c4d0" stroke-width="0.35"/>
<path transform="rotate(269.0)" d="M2.0 0 C4.7 -1.2 8.6 -2.8 12.6 -2.0 C14.7 -1.3 14.7 1.3 12.6 2.0 C8.6 2.8 4.7 1.2 2.0 0Z" fill="url(#pw)" stroke="#c0c4d0" stroke-width="0.35"/>
<path transform="rotate(288.8)" d="M2.0 0 C4.6 -1.4 8.4 -3.3 12.3 -2.3 C14.3 -1.5 14.3 1.5 12.3 2.3 C8.4 3.3 4.6 1.4 2.0 0Z" fill="url(#pw)" stroke="#c0c4d0" stroke-width="0.35"/>
<path transform="rotate(312.6)" d="M2.0 0 C4.6 -1.2 8.5 -2.8 12.4 -2.0 C14.5 -1.3 14.5 1.3 12.4 2.0 C8.5 2.8 4.6 1.2 2.0 0Z" fill="url(#pw)" stroke="#c0c4d0" stroke-width="0.35"/>
<path transform="rotate(340.9)" d="M2.0 0 C4.8 -1.3 9.1 -3.2 13.3 -2.3 C15.6 -1.5 15.6 1.5 13.3 2.3 C9.1 3.2 4.8 1.3 2.0 0Z" fill="url(#pw)" stroke="#c0c4d0" stroke-width="0.35"/>
<path transform="rotate(9.1)" d="M2.0 0 C5.1 -1.2 9.8 -2.9 14.4 -2.1 C16.9 -1.4 16.9 1.4 14.4 2.1 C9.8 2.9 5.1 1.2 2.0 0Z" fill="url(#pw)" stroke="#c0c4d0" stroke-width="0.35"/>
<path transform="rotate(33.3)" d="M2.0 0 C5.1 -1.3 9.7 -3.1 14.3 -2.2 C16.8 -1.4 16.8 1.4 14.3 2.2 C9.7 3.1 5.1 1.3 2.0 0Z" fill="url(#pw)" stroke="#c0c4d0" stroke-width="0.35"/>
<path transform="rotate(53.9)" d="M2.0 0 C5.4 -1.4 10.5 -3.4 15.5 -2.4 C18.3 -1.6 18.3 1.6 15.5 2.4 C10.5 3.4 5.4 1.4 2.0 0Z" fill="url(#pw)" stroke="#c0c4d0" stroke-width="0.35"/>
<path transform="rotate(79.2)" d="M2.0 0 C5.1 -1.4 9.8 -3.4 14.5 -2.4 C16.9 -1.6 16.9 1.6 14.5 2.4 C9.8 3.4 5.1 1.4 2.0 0Z" fill="url(#pw)" stroke="#c0c4d0" stroke-width="0.35"/>
<path transform="rotate(99.3)" d="M2.0 0 C5.2 -1.1 9.9 -2.7 14.6 -1.9 C17.1 -1.3 17.1 1.3 14.6 1.9 C9.9 2.7 5.2 1.1 2.0 0Z" fill="url(#pw)" stroke="#c0c4d0" stroke-width="0.35"/>
<path transform="rotate(122.6)" d="M2.0 0 C5.2 -1.3 10.0 -3.1 14.8 -2.2 C17.4 -1.4 17.4 1.4 14.8 2.2 C10.0 3.1 5.2 1.3 2.0 0Z" fill="url(#pw)" stroke="#c0c4d0" stroke-width="0.35"/>
<path transform="rotate(143.3)" d="M2.0 0 C5.2 -1.1 10.0 -2.7 14.8 -1.9 C17.4 -1.3 17.4 1.3 14.8 1.9 C10.0 2.7 5.2 1.1 2.0 0Z" fill="url(#pw)" stroke="#c0c4d0" stroke-width="0.35"/>
<path transform="rotate(166.4)" d="M2.0 0 C5.1 -1.3 9.6 -3.0 14.2 -2.1 C16.7 -1.4 16.7 1.4 14.2 2.1 C9.6 3.0 5.1 1.3 2.0 0Z" fill="url(#pw)" stroke="#c0c4d0" stroke-width="0.35"/>
<path transform="rotate(186.7)" d="M2.0 0 C5.0 -1.2 9.6 -3.0 14.1 -2.1 C16.5 -1.4 16.5 1.4 14.1 2.1 C9.6 3.0 5.0 1.2 2.0 0Z" fill="url(#pw)" stroke="#c0c4d0" stroke-width="0.35"/>
<path transform="rotate(211.1)" d="M2.0 0 C5.2 -1.3 10.1 -3.1 15.0 -2.2 C17.6 -1.4 17.6 1.4 15.0 2.2 C10.1 3.1 5.2 1.3 2.0 0Z" fill="url(#pw)" stroke="#c0c4d0" stroke-width="0.35"/>
<path transform="rotate(238.8)" d="M2.0 0 C5.3 -1.3 10.2 -3.2 15.1 -2.3 C17.7 -1.5 17.7 1.5 15.1 2.3 C10.2 3.2 5.3 1.3 2.0 0Z" fill="url(#pw)" stroke="#c0c4d0" stroke-width="0.35"/>
<path transform="rotate(262.5)" d="M2.0 0 C5.2 -1.2 9.9 -3.0 14.7 -2.1 C17.2 -1.4 17.2 1.4 14.7 2.1 C9.9 3.0 5.2 1.2 2.0 0Z" fill="url(#pw)" stroke="#c0c4d0" stroke-width="0.35"/>
<path transform="rotate(286.1)" d="M2.0 0 C5.1 -1.4 9.7 -3.2 14.3 -2.3 C16.8 -1.5 16.8 1.5 14.3 2.3 C9.7 3.2 5.1 1.4 2.0 0Z" fill="url(#pw)" stroke="#c0c4d0" stroke-width="0.35"/>
<path transform="rotate(305.2)" d="M2.0 0 C5.0 -1.4 9.6 -3.3 14.1 -2.4 C16.6 -1.5 16.6 1.5 14.1 2.4 C9.6 3.3 5.0 1.4 2.0 0Z" fill="url(#pw)" stroke="#c0c4d0" stroke-width="0.35"/>
<path transform="rotate(330.2)" d="M2.0 0 C5.3 -1.4 10.1 -3.2 15.0 -2.3 C17.6 -1.5 17.6 1.5 15.0 2.3 C10.1 3.2 5.3 1.4 2.0 0Z" fill="url(#pw)" stroke="#c0c4d0" stroke-width="0.35"/>
<path transform="rotate(351.9)" d="M2.0 0 C5.1 -1.3 9.7 -3.1 14.3 -2.2 C16.8 -1.4 16.8 1.4 14.3 2.2 C9.7 3.1 5.1 1.3 2.0 0Z" fill="url(#pw)" stroke="#c0c4d0" stroke-width="0.35"/>
<circle r="4.0" fill="url(#wc)"/>
</g>
<g transform="translate(263.0,18.0) scale(1,1)">
<path transform="rotate(0.0)" d="M2.0 0 C4.8 -1.4 9.0 -3.3 13.3 -2.3 C15.5 -1.5 15.5 1.5 13.3 2.3 C9.0 3.3 4.8 1.4 2.0 0Z" fill="url(#pw)" stroke="#c0c4d0" stroke-width="0.35"/>
<path transform="rotate(25.8)" d="M2.0 0 C4.7 -1.4 8.8 -3.4 12.9 -2.4 C15.1 -1.5 15.1 1.5 12.9 2.4 C8.8 3.4 4.7 1.4 2.0 0Z" fill="url(#pw)" stroke="#c0c4d0" stroke-width="0.35"/>
<path transform="rotate(46.8)" d="M2.0 0 C4.8 -1.2 8.9 -2.9 13.1 -2.1 C15.3 -1.3 15.3 1.3 13.1 2.1 C8.9 2.9 4.8 1.2 2.0 0Z" fill="url(#pw)" stroke="#c0c4d0" stroke-width="0.35"/>
<path transform="rotate(62.8)" d="M2.0 0 C4.6 -1.2 8.5 -3.0 12.3 -2.1 C14.4 -1.4 14.4 1.4 12.3 2.1 C8.5 3.0 4.6 1.2 2.0 0Z" fill="url(#pw)" stroke="#c0c4d0" stroke-width="0.35"/>
<path transform="rotate(86.0)" d="M2.0 0 C4.8 -1.3 9.0 -3.1 13.3 -2.2 C15.5 -1.4 15.5 1.4 13.3 2.2 C9.0 3.1 4.8 1.3 2.0 0Z" fill="url(#pw)" stroke="#c0c4d0" stroke-width="0.35"/>
<path transform="rotate(113.8)" d="M2.0 0 C4.7 -1.3 8.9 -3.2 13.0 -2.3 C15.2 -1.5 15.2 1.5 13.0 2.3 C8.9 3.2 4.7 1.3 2.0 0Z" fill="url(#pw)" stroke="#c0c4d0" stroke-width="0.35"/>
<path transform="rotate(134.9)" d="M2.0 0 C4.5 -1.4 8.4 -3.3 12.2 -2.3 C14.2 -1.5 14.2 1.5 12.2 2.3 C8.4 3.3 4.5 1.4 2.0 0Z" fill="url(#pw)" stroke="#c0c4d0" stroke-width="0.35"/>
<path transform="rotate(160.0)" d="M2.0 0 C4.7 -1.3 8.8 -3.1 12.8 -2.2 C15.0 -1.4 15.0 1.4 12.8 2.2 C8.8 3.1 4.7 1.3 2.0 0Z" fill="url(#pw)" stroke="#c0c4d0" stroke-width="0.35"/>
<path transform="rotate(181.6)" d="M2.0 0 C4.6 -1.4 8.4 -3.3 12.3 -2.3 C14.3 -1.5 14.3 1.5 12.3 2.3 C8.4 3.3 4.6 1.4 2.0 0Z" fill="url(#pw)" stroke="#c0c4d0" stroke-width="0.35"/>
<path transform="rotate(200.0)" d="M2.0 0 C4.6 -1.2 8.4 -2.9 12.3 -2.1 C14.3 -1.3 14.3 1.3 12.3 2.1 C8.4 2.9 4.6 1.2 2.0 0Z" fill="url(#pw)" stroke="#c0c4d0" stroke-width="0.35"/>
<path transform="rotate(227.3)" d="M2.0 0 C4.6 -1.4 8.5 -3.3 12.4 -2.3 C14.5 -1.5 14.5 1.5 12.4 2.3 C8.5 3.3 4.6 1.4 2.0 0Z" fill="url(#pw)" stroke="#c0c4d0" stroke-width="0.35"/>
<path transform="rotate(252.3)" d="M2.0 0 C4.7 -1.3 8.8 -3.0 12.8 -2.1 C15.0 -1.4 15.0 1.4 12.8 2.1 C8.8 3.0 4.7 1.3 2.0 0Z" fill="url(#pw)" stroke="#c0c4d0" stroke-width="0.35"/>
<path transform="rotate(269.8)" d="M2.0 0 C4.8 -1.4 8.9 -3.3 13.1 -2.3 C15.3 -1.5 15.3 1.5 13.1 2.3 C8.9 3.3 4.8 1.4 2.0 0Z" fill="url(#pw)" stroke="#c0c4d0" stroke-width="0.35"/>
<path transform="rotate(293.7)" d="M2.0 0 C4.8 -1.2 8.9 -2.8 13.0 -2.0 C15.2 -1.3 15.2 1.3 13.0 2.0 C8.9 2.8 4.8 1.2 2.0 0Z" fill="url(#pw)" stroke="#c0c4d0" stroke-width="0.35"/>
<path transform="rotate(311.5)" d="M2.0 0 C4.6 -1.4 8.6 -3.3 12.5 -2.3 C14.6 -1.5 14.6 1.5 12.5 2.3 C8.6 3.3 4.6 1.4 2.0 0Z" fill="url(#pw)" stroke="#c0c4d0" stroke-width="0.35"/>
<path transform="rotate(335.5)" d="M2.0 0 C4.7 -1.1 8.8 -2.8 12.9 -2.0 C15.1 -1.3 15.1 1.3 12.9 2.0 C8.8 2.8 4.7 1.1 2.0 0Z" fill="url(#pw)" stroke="#c0c4d0" stroke-width="0.35"/>
<path transform="rotate(6.9)" d="M2.0 0 C5.1 -1.3 9.8 -3.2 14.5 -2.3 C17.0 -1.5 17.0 1.5 14.5 2.3 C9.8 3.2 5.1 1.3 2.0 0Z" fill="url(#pw)" stroke="#c0c4d0" stroke-width="0.35"/>
<path transform="rotate(35.7)" d="M2.0 0 C5.3 -1.2 10.2 -2.9 15.1 -2.1 C17.7 -1.3 17.7 1.3 15.1 2.1 C10.2 2.9 5.3 1.2 2.0 0Z" fill="url(#pw)" stroke="#c0c4d0" stroke-width="0.35"/>
<path transform="rotate(56.4)" d="M2.0 0 C5.2 -1.3 10.0 -3.1 14.8 -2.2 C17.3 -1.4 17.3 1.4 14.8 2.2 C10.0 3.1 5.2 1.3 2.0 0Z" fill="url(#pw)" stroke="#c0c4d0" stroke-width="0.35"/>
<path transform="rotate(74.9)" d="M2.0 0 C5.4 -1.2 10.4 -2.9 15.4 -2.0 C18.1 -1.3 18.1 1.3 15.4 2.0 C10.4 2.9 5.4 1.2 2.0 0Z" fill="url(#pw)" stroke="#c0c4d0" stroke-width="0.35"/>
<path transform="rotate(106.0)" d="M2.0 0 C5.4 -1.1 10.4 -2.8 15.5 -2.0 C18.2 -1.3 18.2 1.3 15.5 2.0 C10.4 2.8 5.4 1.1 2.0 0Z" fill="url(#pw)" stroke="#c0c4d0" stroke-width="0.35"/>
<path transform="rotate(123.3)" d="M2.0 0 C5.3 -1.4 10.3 -3.4 15.3 -2.4 C18.0 -1.6 18.0 1.6 15.3 2.4 C10.3 3.4 5.3 1.4 2.0 0Z" fill="url(#pw)" stroke="#c0c4d0" stroke-width="0.35"/>
<path transform="rotate(145.7)" d="M2.0 0 C5.1 -1.2 9.8 -2.9 14.5 -2.0 C17.0 -1.3 17.0 1.3 14.5 2.0 C9.8 2.9 5.1 1.2 2.0 0Z" fill="url(#pw)" stroke="#c0c4d0" stroke-width="0.35"/>
<path transform="rotate(173.2)" d="M2.0 0 C5.1 -1.3 9.8 -3.1 14.4 -2.2 C16.9 -1.4 16.9 1.4 14.4 2.2 C9.8 3.1 5.1 1.3 2.0 0Z" fill="url(#pw)" stroke="#c0c4d0" stroke-width="0.35"/>
<path transform="rotate(187.7)" d="M2.0 0 C5.2 -1.4 10.0 -3.4 14.9 -2.4 C17.5 -1.6 17.5 1.6 14.9 2.4 C10.0 3.4 5.2 1.4 2.0 0Z" fill="url(#pw)" stroke="#c0c4d0" stroke-width="0.35"/>
<path transform="rotate(210.1)" d="M2.0 0 C5.3 -1.3 10.3 -3.1 15.3 -2.2 C18.0 -1.4 18.0 1.4 15.3 2.2 C10.3 3.1 5.3 1.3 2.0 0Z" fill="url(#pw)" stroke="#c0c4d0" stroke-width="0.35"/>
<path transform="rotate(240.1)" d="M2.0 0 C5.3 -1.2 10.2 -2.9 15.1 -2.1 C17.8 -1.3 17.8 1.3 15.1 2.1 C10.2 2.9 5.3 1.2 2.0 0Z" fill="url(#pw)" stroke="#c0c4d0" stroke-width="0.35"/>
<path transform="rotate(262.7)" d="M2.0 0 C5.2 -1.2 10.0 -2.8 14.8 -2.0 C17.4 -1.3 17.4 1.3 14.8 2.0 C10.0 2.8 5.2 1.2 2.0 0Z" fill="url(#pw)" stroke="#c0c4d0" stroke-width="0.35"/>
<path transform="rotate(276.3)" d="M2.0 0 C5.2 -1.3 10.0 -3.1 14.8 -2.2 C17.4 -1.4 17.4 1.4 14.8 2.2 C10.0 3.1 5.2 1.3 2.0 0Z" fill="url(#pw)" stroke="#c0c4d0" stroke-width="0.35"/>
<path transform="rotate(301.8)" d="M2.0 0 C5.1 -1.2 9.7 -3.0 14.3 -2.1 C16.8 -1.4 16.8 1.4 14.3 2.1 C9.7 3.0 5.1 1.2 2.0 0Z" fill="url(#pw)" stroke="#c0c4d0" stroke-width="0.35"/>
<path transform="rotate(324.4)" d="M2.0 0 C5.3 -1.1 10.3 -2.7 15.4 -1.9 C18.0 -1.3 18.0 1.3 15.4 1.9 C10.3 2.7 5.3 1.1 2.0 0Z" fill="url(#pw)" stroke="#c0c4d0" stroke-width="0.35"/>
<path transform="rotate(351.3)" d="M2.0 0 C5.3 -1.2 10.3 -2.8 15.4 -2.0 C18.0 -1.3 18.0 1.3 15.4 2.0 C10.3 2.8 5.3 1.2 2.0 0Z" fill="url(#pw)" stroke="#c0c4d0" stroke-width="0.35"/>
<circle r="4.0" fill="url(#wc)"/>
</g>
<g transform="translate(239.0,29.0) scale(1,1)">
<path transform="rotate(4.3)" d="M2.4 0 C5.9 -1.6 11.2 -3.9 16.5 -2.7 C19.3 -1.8 19.3 1.8 16.5 2.7 C11.2 3.9 5.9 1.6 2.4 0Z" fill="url(#pw)" stroke="#c0c4d0" stroke-width="0.35"/>
<path transform="rotate(17.9)" d="M2.4 0 C5.8 -1.4 10.9 -3.5 16.0 -2.5 C18.7 -1.6 18.7 1.6 16.0 2.5 C10.9 3.5 5.8 1.4 2.4 0Z" fill="url(#pw)" stroke="#c0c4d0" stroke-width="0.35"/>
<path transform="rotate(45.0)" d="M2.4 0 C5.9 -1.4 11.1 -3.5 16.3 -2.4 C19.1 -1.6 19.1 1.6 16.3 2.4 C11.1 3.5 5.9 1.4 2.4 0Z" fill="url(#pw)" stroke="#c0c4d0" stroke-width="0.35"/>
<path transform="rotate(59.3)" d="M2.4 0 C5.7 -1.3 10.8 -3.2 15.8 -2.3 C18.5 -1.5 18.5 1.5 15.8 2.3 C10.8 3.2 5.7 1.3 2.4 0Z" fill="url(#pw)" stroke="#c0c4d0" stroke-width="0.35"/>
<path transform="rotate(76.0)" d="M2.4 0 C6.0 -1.4 11.3 -3.4 16.7 -2.4 C19.6 -1.6 19.6 1.6 16.7 2.4 C11.3 3.4 6.0 1.4 2.4 0Z" fill="url(#pw)" stroke="#c0c4d0" stroke-width="0.35"/>
<path transform="rotate(104.4)" d="M2.4 0 C5.7 -1.4 10.7 -3.4 15.8 -2.4 C18.4 -1.5 18.4 1.5 15.8 2.4 C10.7 3.4 5.7 1.4 2.4 0Z" fill="url(#pw)" stroke="#c0c4d0" stroke-width="0.35"/>
<path transform="rotate(120.1)" d="M2.4 0 C5.7 -1.4 10.7 -3.5 15.7 -2.5 C18.3 -1.6 18.3 1.6 15.7 2.5 C10.7 3.5 5.7 1.4 2.4 0Z" fill="url(#pw)" stroke="#c0c4d0" stroke-width="0.35"/>
<path transform="rotate(144.6)" d="M2.4 0 C6.0 -1.6 11.4 -3.8 16.8 -2.7 C19.7 -1.7 19.7 1.7 16.8 2.7 C11.4 3.8 6.0 1.6 2.4 0Z" fill="url(#pw)" stroke="#c0c4d0" stroke-width="0.35"/>
<path transform="rotate(161.3)" d="M2.4 0 C6.0 -1.6 11.4 -3.9 16.8 -2.8 C19.7 -1.8 19.7 1.8 16.8 2.8 C11.4 3.9 6.0 1.6 2.4 0Z" fill="url(#pw)" stroke="#c0c4d0" stroke-width="0.35"/>
<path transform="rotate(180.5)" d="M2.4 0 C5.9 -1.3 11.2 -3.2 16.5 -2.3 C19.4 -1.5 19.4 1.5 16.5 2.3 C11.2 3.2 5.9 1.3 2.4 0Z" fill="url(#pw)" stroke="#c0c4d0" stroke-width="0.35"/>
<path transform="rotate(202.3)" d="M2.4 0 C5.8 -1.6 11.0 -3.8 16.1 -2.7 C18.8 -1.7 18.8 1.7 16.1 2.7 C11.0 3.8 5.8 1.6 2.4 0Z" fill="url(#pw)" stroke="#c0c4d0" stroke-width="0.35"/>
<path transform="rotate(221.4)" d="M2.4 0 C5.8 -1.3 10.8 -3.2 15.8 -2.3 C18.5 -1.5 18.5 1.5 15.8 2.3 C10.8 3.2 5.8 1.3 2.4 0Z" fill="url(#pw)" stroke="#c0c4d0" stroke-width="0.35"/>
<path transform="rotate(244.3)" d="M2.4 0 C5.7 -1.5 10.6 -3.5 15.6 -2.5 C18.2 -1.6 18.2 1.6 15.6 2.5 C10.6 3.5 5.7 1.5 2.4 0Z" fill="url(#pw)" stroke="#c0c4d0" stroke-width="0.35"/>
<path transform="rotate(258.4)" d="M2.4 0 C5.8 -1.6 10.8 -3.8 15.8 -2.7 C18.5 -1.7 18.5 1.7 15.8 2.7 C10.8 3.8 5.8 1.6 2.4 0Z" fill="url(#pw)" stroke="#c0c4d0" stroke-width="0.35"/>
<path transform="rotate(284.8)" d="M2.4 0 C5.7 -1.5 10.8 -3.7 15.8 -2.6 C18.4 -1.7 18.4 1.7 15.8 2.6 C10.8 3.7 5.7 1.5 2.4 0Z" fill="url(#pw)" stroke="#c0c4d0" stroke-width="0.35"/>
<path transform="rotate(298.0)" d="M2.4 0 C5.9 -1.5 11.1 -3.5 16.3 -2.5 C19.0 -1.6 19.0 1.6 16.3 2.5 C11.1 3.5 5.9 1.5 2.4 0Z" fill="url(#pw)" stroke="#c0c4d0" stroke-width="0.35"/>
<path transform="rotate(316.7)" d="M2.4 0 C5.7 -1.4 10.7 -3.3 15.6 -2.4 C18.2 -1.5 18.2 1.5 15.6 2.4 C10.7 3.3 5.7 1.4 2.4 0Z" fill="url(#pw)" stroke="#c0c4d0" stroke-width="0.35"/>
<path transform="rotate(344.1)" d="M2.4 0 C5.8 -1.4 11.0 -3.3 16.2 -2.4 C18.9 -1.5 18.9 1.5 16.2 2.4 C11.0 3.3 5.8 1.4 2.4 0Z" fill="url(#pw)" stroke="#c0c4d0" stroke-width="0.35"/>
<path transform="rotate(14.1)" d="M2.4 0 C6.7 -1.5 13.2 -3.5 19.7 -2.5 C23.1 -1.6 23.1 1.6 19.7 2.5 C13.2 3.5 6.7 1.5 2.4 0Z" fill="url(#pw)" stroke="#c0c4d0" stroke-width="0.35"/>
<path transform="rotate(26.4)" d="M2.4 0 C6.3 -1.3 12.2 -3.2 18.1 -2.3 C21.3 -1.5 21.3 1.5 18.1 2.3 C12.2 3.2 6.3 1.3 2.4 0Z" fill="url(#pw)" stroke="#c0c4d0" stroke-width="0.35"/>
<path transform="rotate(48.4)" d="M2.4 0 C6.3 -1.4 12.1 -3.4 17.9 -2.4 C21.0 -1.5 21.0 1.5 17.9 2.4 C12.1 3.4 6.3 1.4 2.4 0Z" fill="url(#pw)" stroke="#c0c4d0" stroke-width="0.35"/>
<path transform="rotate(67.6)" d="M2.4 0 C6.5 -1.6 12.7 -3.9 18.9 -2.7 C22.1 -1.8 22.1 1.8 18.9 2.7 C12.7 3.9 6.5 1.6 2.4 0Z" fill="url(#pw)" stroke="#c0c4d0" stroke-width="0.35"/>
<path transform="rotate(92.5)" d="M2.4 0 C6.4 -1.5 12.5 -3.5 18.6 -2.5 C21.8 -1.6 21.8 1.6 18.6 2.5 C12.5 3.5 6.4 1.5 2.4 0Z" fill="url(#pw)" stroke="#c0c4d0" stroke-width="0.35"/>
<path transform="rotate(110.2)" d="M2.4 0 C6.4 -1.4 12.5 -3.4 18.5 -2.4 C21.7 -1.6 21.7 1.6 18.5 2.4 C12.5 3.4 6.4 1.4 2.4 0Z" fill="url(#pw)" stroke="#c0c4d0" stroke-width="0.35"/>
<path transform="rotate(125.6)" d="M2.4 0 C6.4 -1.6 12.3 -3.9 18.3 -2.8 C21.5 -1.8 21.5 1.8 18.3 2.8 C12.3 3.9 6.4 1.6 2.4 0Z" fill="url(#pw)" stroke="#c0c4d0" stroke-width="0.35"/>
<path transform="rotate(146.3)" d="M2.4 0 C6.5 -1.5 12.6 -3.7 18.7 -2.6 C22.0 -1.7 22.0 1.7 18.7 2.6 C12.6 3.7 6.5 1.5 2.4 0Z" fill="url(#pw)" stroke="#c0c4d0" stroke-width="0.35"/>
<path transform="rotate(173.6)" d="M2.4 0 C6.3 -1.4 12.3 -3.4 18.2 -2.4 C21.3 -1.6 21.3 1.6 18.2 2.4 C12.3 3.4 6.3 1.4 2.4 0Z" fill="url(#pw)" stroke="#c0c4d0" stroke-width="0.35"/>
<path transform="rotate(187.5)" d="M2.4 0 C6.4 -1.5 12.5 -3.5 18.5 -2.5 C21.8 -1.6 21.8 1.6 18.5 2.5 C12.5 3.5 6.4 1.5 2.4 0Z" fill="url(#pw)" stroke="#c0c4d0" stroke-width="0.35"/>
<path transform="rotate(214.5)" d="M2.4 0 C6.6 -1.6 13.0 -3.9 19.4 -2.7 C22.8 -1.8 22.8 1.8 19.4 2.7 C13.0 3.9 6.6 1.6 2.4 0Z" fill="url(#pw)" stroke="#c0c4d0" stroke-width="0.35"/>
<path transform="rotate(225.2)" d="M2.4 0 C6.3 -1.6 12.0 -3.7 17.8 -2.6 C20.9 -1.7 20.9 1.7 17.8 2.6 C12.0 3.7 6.3 1.6 2.4 0Z" fill="url(#pw)" stroke="#c0c4d0" stroke-width="0.35"/>
<path transform="rotate(254.0)" d="M2.4 0 C6.5 -1.5 12.6 -3.6 18.7 -2.6 C21.9 -1.7 21.9 1.7 18.7 2.6 C12.6 3.6 6.5 1.5 2.4 0Z" fill="url(#pw)" stroke="#c0c4d0" stroke-width="0.35"/>
<path transform="rotate(265.0)" d="M2.4 0 C6.4 -1.6 12.5 -3.9 18.5 -2.8 C21.7 -1.8 21.7 1.8 18.5 2.8 C12.5 3.9 6.4 1.6 2.4 0Z" fill="url(#pw)" stroke="#c0c4d0" stroke-width="0.35"/>
<path transform="rotate(293.3)" d="M2.4 0 C6.7 -1.6 13.0 -3.9 19.4 -2.8 C22.8 -1.8 22.8 1.8 19.4 2.8 C13.0 3.9 6.7 1.6 2.4 0Z" fill="url(#pw)" stroke="#c0c4d0" stroke-width="0.35"/>
<path transform="rotate(307.5)" d="M2.4 0 C6.3 -1.4 12.1 -3.3 18.0 -2.3 C21.1 -1.5 21.1 1.5 18.0 2.3 C12.1 3.3 6.3 1.4 2.4 0Z" fill="url(#pw)" stroke="#c0c4d0" stroke-width="0.35"/>
<path transform="rotate(330.2)" d="M2.4 0 C6.6 -1.6 12.8 -3.9 19.1 -2.8 C22.4 -1.8 22.4 1.8 19.1 2.8 C12.8 3.9 6.6 1.6 2.4 0Z" fill="url(#pw)" stroke="#c0c4d0" stroke-width="0.35"/>
<path transform="rotate(352.2)" d="M2.4 0 C6.6 -1.6 12.8 -3.8 19.0 -2.7 C22.3 -1.7 22.3 1.7 19.0 2.7 C12.8 3.8 6.6 1.6 2.4 0Z" fill="url(#pw)" stroke="#c0c4d0" stroke-width="0.35"/>
<circle r="4.8" fill="url(#wc)"/>
</g>
<g transform="translate(279.0,48.0) scale(1,1)">
<path transform="rotate(-0.4)" d="M2.5 0 C5.9 -1.4 11.1 -3.3 16.3 -2.3 C19.0 -1.5 19.0 1.5 16.3 2.3 C11.1 3.3 5.9 1.4 2.5 0Z" fill="url(#pw)" stroke="#c0c4d0" stroke-width="0.35"/>
<path transform="rotate(22.8)" d="M2.5 0 C5.8 -1.7 10.8 -4.0 15.7 -2.9 C18.4 -1.8 18.4 1.8 15.7 2.9 C10.8 4.0 5.8 1.7 2.5 0Z" fill="url(#pw)" stroke="#c0c4d0" stroke-width="0.35"/>
<path transform="rotate(41.5)" d="M2.5 0 C5.8 -1.4 10.9 -3.4 15.9 -2.4 C18.5 -1.5 18.5 1.5 15.9 2.4 C10.9 3.4 5.8 1.4 2.5 0Z" fill="url(#pw)" stroke="#c0c4d0" stroke-width="0.35"/>
<path transform="rotate(57.5)" d="M2.5 0 C6.0 -1.6 11.2 -3.8 16.4 -2.7 C19.2 -1.8 19.2 1.8 16.4 2.7 C11.2 3.8 6.0 1.6 2.5 0Z" fill="url(#pw)" stroke="#c0c4d0" stroke-width="0.35"/>
<path transform="rotate(76.1)" d="M2.5 0 C5.7 -1.5 10.6 -3.7 15.5 -2.6 C18.1 -1.7 18.1 1.7 15.5 2.6 C10.6 3.7 5.7 1.5 2.5 0Z" fill="url(#pw)" stroke="#c0c4d0" stroke-width="0.35"/>
<path transform="rotate(100.8)" d="M2.5 0 C5.9 -1.4 10.9 -3.5 16.0 -2.4 C18.7 -1.6 18.7 1.6 16.0 2.4 C10.9 3.5 5.9 1.4 2.5 0Z" fill="url(#pw)" stroke="#c0c4d0" stroke-width="0.35"/>
<path transform="rotate(121.0)" d="M2.5 0 C5.7 -1.5 10.5 -3.5 15.4 -2.5 C18.0 -1.6 18.0 1.6 15.4 2.5 C10.5 3.5 5.7 1.5 2.5 0Z" fill="url(#pw)" stroke="#c0c4d0" stroke-width="0.35"/>
<path transform="rotate(139.6)" d="M2.5 0 C6.1 -1.6 11.5 -3.8 16.9 -2.7 C19.8 -1.7 19.8 1.7 16.9 2.7 C11.5 3.8 6.1 1.6 2.5 0Z" fill="url(#pw)" stroke="#c0c4d0" stroke-width="0.35"/>
<path transform="rotate(163.8)" d="M2.5 0 C5.9 -1.4 11.0 -3.5 16.1 -2.5 C18.9 -1.6 18.9 1.6 16.1 2.5 C11.0 3.5 5.9 1.4 2.5 0Z" fill="url(#pw)" stroke="#c0c4d0" stroke-width="0.35"/>
<path transform="rotate(177.5)" d="M2.5 0 C6.1 -1.6 11.5 -3.9 16.9 -2.7 C19.8 -1.8 19.8 1.8 16.9 2.7 C11.5 3.9 6.1 1.6 2.5 0Z" fill="url(#pw)" stroke="#c0c4d0" stroke-width="0.35"/>
<path transform="rotate(198.1)" d="M2.5 0 C5.7 -1.5 10.6 -3.7 15.4 -2.6 C18.0 -1.7 18.0 1.7 15.4 2.6 C10.6 3.7 5.7 1.5 2.5 0Z" fill="url(#pw)" stroke="#c0c4d0" stroke-width="0.35"/>
<path transform="rotate(221.7)" d="M2.5 0 C5.9 -1.5 11.0 -3.5 16.1 -2.5 C18.8 -1.6 18.8 1.6 16.1 2.5 C11.0 3.5 5.9 1.5 2.5 0Z" fill="url(#pw)" stroke="#c0c4d0" stroke-width="0.35"/>
<path transform="rotate(241.7)" d="M2.5 0 C6.1 -1.4 11.5 -3.5 16.9 -2.5 C19.8 -1.6 19.8 1.6 16.9 2.5 C11.5 3.5 6.1 1.4 2.5 0Z" fill="url(#pw)" stroke="#c0c4d0" stroke-width="0.35"/>
<path transform="rotate(255.3)" d="M2.5 0 C5.9 -1.5 10.9 -3.6 15.9 -2.6 C18.6 -1.7 18.6 1.7 15.9 2.6 C10.9 3.6 5.9 1.5 2.5 0Z" fill="url(#pw)" stroke="#c0c4d0" stroke-width="0.35"/>
<path transform="rotate(281.8)" d="M2.5 0 C5.8 -1.6 10.7 -3.9 15.7 -2.8 C18.3 -1.8 18.3 1.8 15.7 2.8 C10.7 3.9 5.8 1.6 2.5 0Z" fill="url(#pw)" stroke="#c0c4d0" stroke-width="0.35"/>
<path transform="rotate(302.4)" d="M2.5 0 C5.9 -1.4 11.1 -3.4 16.2 -2.4 C18.9 -1.6 18.9 1.6 16.2 2.4 C11.1 3.4 5.9 1.4 2.5 0Z" fill="url(#pw)" stroke="#c0c4d0" stroke-width="0.35"/>
<path transform="rotate(324.7)" d="M2.5 0 C5.8 -1.6 10.9 -3.9 15.9 -2.8 C18.6 -1.8 18.6 1.8 15.9 2.8 C10.9 3.9 5.8 1.6 2.5 0Z" fill="url(#pw)" stroke="#c0c4d0" stroke-width="0.35"/>
<path transform="rotate(337.3)" d="M2.5 0 C5.8 -1.6 10.8 -3.9 15.7 -2.8 C18.4 -1.8 18.4 1.8 15.7 2.8 C10.8 3.9 5.8 1.6 2.5 0Z" fill="url(#pw)" stroke="#c0c4d0" stroke-width="0.35"/>
<path transform="rotate(7.9)" d="M2.5 0 C6.8 -1.5 13.2 -3.7 19.6 -2.6 C23.0 -1.7 23.0 1.7 19.6 2.6 C13.2 3.7 6.8 1.5 2.5 0Z" fill="url(#pw)" stroke="#c0c4d0" stroke-width="0.35"/>
<path transform="rotate(26.9)" d="M2.5 0 C6.4 -1.5 12.3 -3.6 18.2 -2.6 C21.4 -1.7 21.4 1.7 18.2 2.6 C12.3 3.6 6.4 1.5 2.5 0Z" fill="url(#pw)" stroke="#c0c4d0" stroke-width="0.35"/>
<path transform="rotate(51.7)" d="M2.5 0 C6.8 -1.4 13.2 -3.4 19.6 -2.4 C23.0 -1.6 23.0 1.6 19.6 2.4 C13.2 3.4 6.8 1.4 2.5 0Z" fill="url(#pw)" stroke="#c0c4d0" stroke-width="0.35"/>
<path transform="rotate(68.9)" d="M2.5 0 C6.4 -1.7 12.3 -4.1 18.2 -2.9 C21.3 -1.9 21.3 1.9 18.2 2.9 C12.3 4.1 6.4 1.7 2.5 0Z" fill="url(#pw)" stroke="#c0c4d0" stroke-width="0.35"/>
<path transform="rotate(86.4)" d="M2.5 0 C6.3 -1.4 12.1 -3.3 17.9 -2.4 C21.0 -1.5 21.0 1.5 17.9 2.4 C12.1 3.3 6.3 1.4 2.5 0Z" fill="url(#pw)" stroke="#c0c4d0" stroke-width="0.35"/>
<path transform="rotate(108.9)" d="M2.5 0 C6.8 -1.7 13.1 -4.0 19.5 -2.8 C22.9 -1.8 22.9 1.8 19.5 2.8 C13.1 4.0 6.8 1.7 2.5 0Z" fill="url(#pw)" stroke="#c0c4d0" stroke-width="0.35"/>
<path transform="rotate(132.3)" d="M2.5 0 C6.8 -1.7 13.2 -4.0 19.7 -2.9 C23.1 -1.8 23.1 1.8 19.7 2.9 C13.2 4.0 6.8 1.7 2.5 0Z" fill="url(#pw)" stroke="#c0c4d0" stroke-width="0.35"/>
<path transform="rotate(148.3)" d="M2.5 0 C6.4 -1.7 12.3 -4.0 18.1 -2.9 C21.3 -1.9 21.3 1.9 18.1 2.9 C12.3 4.0 6.4 1.7 2.5 0Z" fill="url(#pw)" stroke="#c0c4d0" stroke-width="0.35"/>
<path transform="rotate(172.5)" d="M2.5 0 C6.3 -1.6 12.1 -3.8 17.8 -2.7 C20.9 -1.7 20.9 1.7 17.8 2.7 C12.1 3.8 6.3 1.6 2.5 0Z" fill="url(#pw)" stroke="#c0c4d0" stroke-width="0.35"/>
<path transform="rotate(188.8)" d="M2.5 0 C6.5 -1.5 12.5 -3.5 18.5 -2.5 C21.7 -1.6 21.7 1.6 18.5 2.5 C12.5 3.5 6.5 1.5 2.5 0Z" fill="url(#pw)" stroke="#c0c4d0" stroke-width="0.35"/>
<path transform="rotate(206.7)" d="M2.5 0 C6.3 -1.5 12.1 -3.5 17.8 -2.5 C20.8 -1.6 20.8 1.6 17.8 2.5 C12.1 3.5 6.3 1.5 2.5 0Z" fill="url(#pw)" stroke="#c0c4d0" stroke-width="0.35"/>
<path transform="rotate(228.5)" d="M2.5 0 C6.8 -1.4 13.2 -3.4 19.6 -2.4 C23.0 -1.5 23.0 1.5 19.6 2.4 C13.2 3.4 6.8 1.4 2.5 0Z" fill="url(#pw)" stroke="#c0c4d0" stroke-width="0.35"/>
<path transform="rotate(254.6)" d="M2.5 0 C6.4 -1.5 12.3 -3.6 18.2 -2.5 C21.3 -1.6 21.3 1.6 18.2 2.5 C12.3 3.6 6.4 1.5 2.5 0Z" fill="url(#pw)" stroke="#c0c4d0" stroke-width="0.35"/>
<path transform="rotate(273.2)" d="M2.5 0 C6.7 -1.5 13.0 -3.6 19.4 -2.6 C22.7 -1.7 22.7 1.7 19.4 2.6 C13.0 3.6 6.7 1.5 2.5 0Z" fill="url(#pw)" stroke="#c0c4d0" stroke-width="0.35"/>
<path transform="rotate(285.5)" d="M2.5 0 C6.5 -1.5 12.6 -3.6 18.7 -2.5 C21.9 -1.6 21.9 1.6 18.7 2.5 C12.6 3.6 6.5 1.5 2.5 0Z" fill="url(#pw)" stroke="#c0c4d0" stroke-width="0.35"/>
<path transform="rotate(314.2)" d="M2.5 0 C6.4 -1.5 12.3 -3.6 18.2 -2.5 C21.3 -1.6 21.3 1.6 18.2 2.5 C12.3 3.6 6.4 1.5 2.5 0Z" fill="url(#pw)" stroke="#c0c4d0" stroke-width="0.35"/>
<path transform="rotate(334.0)" d="M2.5 0 C6.3 -1.5 12.1 -3.6 17.8 -2.6 C20.9 -1.7 20.9 1.7 17.8 2.6 C12.1 3.6 6.3 1.5 2.5 0Z" fill="url(#pw)" stroke="#c0c4d0" stroke-width="0.35"/>
<path transform="rotate(353.1)" d="M2.5 0 C6.7 -1.4 13.0 -3.3 19.3 -2.3 C22.6 -1.5 22.6 1.5 19.3 2.3 C13.0 3.3 6.7 1.4 2.5 0Z" fill="url(#pw)" stroke="#c0c4d0" stroke-width="0.35"/>
<circle r="5.0" fill="url(#wc)"/>
</g>
<g transform="translate(252.0,72.0) scale(1,1)">
<path transform="rotate(-4.7)" d="M2.2 0 C4.6 -1.4 8.1 -3.4 11.7 -2.4 C13.6 -1.5 13.6 1.5 11.7 2.4 C8.1 3.4 4.6 1.4 2.2 0Z" fill="url(#pw)" stroke="#c0c4d0" stroke-width="0.35"/>
<path transform="rotate(20.1)" d="M2.2 0 C4.8 -1.4 8.7 -3.4 12.5 -2.4 C14.6 -1.5 14.6 1.5 12.5 2.4 C8.7 3.4 4.8 1.4 2.2 0Z" fill="url(#pw)" stroke="#c0c4d0" stroke-width="0.35"/>
<path transform="rotate(43.4)" d="M2.2 0 C4.7 -1.4 8.3 -3.4 11.9 -2.4 C13.9 -1.6 13.9 1.6 11.9 2.4 C8.3 3.4 4.7 1.4 2.2 0Z" fill="url(#pw)" stroke="#c0c4d0" stroke-width="0.35"/>
<path transform="rotate(68.7)" d="M2.2 0 C4.7 -1.3 8.3 -3.2 11.9 -2.3 C13.9 -1.5 13.9 1.5 11.9 2.3 C8.3 3.2 4.7 1.3 2.2 0Z" fill="url(#pw)" stroke="#c0c4d0" stroke-width="0.35"/>
<path transform="rotate(88.2)" d="M2.2 0 C4.7 -1.1 8.3 -2.7 11.9 -1.9 C13.9 -1.3 13.9 1.3 11.9 1.9 C8.3 2.7 4.7 1.1 2.2 0Z" fill="url(#pw)" stroke="#c0c4d0" stroke-width="0.35"/>
<path transform="rotate(115.1)" d="M2.2 0 C4.9 -1.3 8.8 -3.2 12.7 -2.3 C14.8 -1.5 14.8 1.5 12.7 2.3 C8.8 3.2 4.9 1.3 2.2 0Z" fill="url(#pw)" stroke="#c0c4d0" stroke-width="0.35"/>
<path transform="rotate(139.4)" d="M2.2 0 C4.6 -1.2 8.1 -2.9 11.6 -2.1 C13.5 -1.3 13.5 1.3 11.6 2.1 C8.1 2.9 4.6 1.2 2.2 0Z" fill="url(#pw)" stroke="#c0c4d0" stroke-width="0.35"/>
<path transform="rotate(157.3)" d="M2.2 0 C4.9 -1.4 8.8 -3.4 12.8 -2.4 C14.9 -1.6 14.9 1.6 12.8 2.4 C8.8 3.4 4.9 1.4 2.2 0Z" fill="url(#pw)" stroke="#c0c4d0" stroke-width="0.35"/>
<path transform="rotate(178.9)" d="M2.2 0 C4.7 -1.3 8.3 -3.0 11.9 -2.2 C13.8 -1.4 13.8 1.4 11.9 2.2 C8.3 3.0 4.7 1.3 2.2 0Z" fill="url(#pw)" stroke="#c0c4d0" stroke-width="0.35"/>
<path transform="rotate(202.4)" d="M2.2 0 C4.9 -1.2 8.8 -2.9 12.7 -2.0 C14.8 -1.3 14.8 1.3 12.7 2.0 C8.8 2.9 4.9 1.2 2.2 0Z" fill="url(#pw)" stroke="#c0c4d0" stroke-width="0.35"/>
<path transform="rotate(228.0)" d="M2.2 0 C4.8 -1.4 8.7 -3.3 12.5 -2.3 C14.6 -1.5 14.6 1.5 12.5 2.3 C8.7 3.3 4.8 1.4 2.2 0Z" fill="url(#pw)" stroke="#c0c4d0" stroke-width="0.35"/>
<path transform="rotate(250.2)" d="M2.2 0 C4.8 -1.2 8.6 -3.0 12.3 -2.1 C14.4 -1.4 14.4 1.4 12.3 2.1 C8.6 3.0 4.8 1.2 2.2 0Z" fill="url(#pw)" stroke="#c0c4d0" stroke-width="0.35"/>
<path transform="rotate(268.2)" d="M2.2 0 C4.7 -1.4 8.4 -3.3 12.0 -2.3 C14.0 -1.5 14.0 1.5 12.0 2.3 C8.4 3.3 4.7 1.4 2.2 0Z" fill="url(#pw)" stroke="#c0c4d0" stroke-width="0.35"/>
<path transform="rotate(288.3)" d="M2.2 0 C4.6 -1.4 8.2 -3.3 11.8 -2.3 C13.8 -1.5 13.8 1.5 11.8 2.3 C8.2 3.3 4.6 1.4 2.2 0Z" fill="url(#pw)" stroke="#c0c4d0" stroke-width="0.35"/>
<path transform="rotate(312.5)" d="M2.2 0 C4.6 -1.2 8.1 -2.8 11.7 -2.0 C13.6 -1.3 13.6 1.3 11.7 2.0 C8.1 2.8 4.6 1.2 2.2 0Z" fill="url(#pw)" stroke="#c0c4d0" stroke-width="0.35"/>
<path transform="rotate(338.0)" d="M2.2 0 C4.7 -1.4 8.3 -3.4 12.0 -2.4 C13.9 -1.6 13.9 1.6 12.0 2.4 C8.3 3.4 4.7 1.4 2.2 0Z" fill="url(#pw)" stroke="#c0c4d0" stroke-width="0.35"/>
<path transform="rotate(15.1)" d="M2.2 0 C5.4 -1.2 10.1 -2.9 14.8 -2.1 C17.3 -1.3 17.3 1.3 14.8 2.1 C10.1 2.9 5.4 1.2 2.2 0Z" fill="url(#pw)" stroke="#c0c4d0" stroke-width="0.35"/>
<path transform="rotate(29.6)" d="M2.2 0 C5.1 -1.3 9.3 -3.1 13.5 -2.2 C15.8 -1.4 15.8 1.4 13.5 2.2 C9.3 3.1 5.1 1.3 2.2 0Z" fill="url(#pw)" stroke="#c0c4d0" stroke-width="0.35"/>
<path transform="rotate(58.3)" d="M2.2 0 C5.2 -1.2 9.6 -2.9 14.1 -2.1 C16.4 -1.3 16.4 1.3 14.1 2.1 C9.6 2.9 5.2 1.2 2.2 0Z" fill="url(#pw)" stroke="#c0c4d0" stroke-width="0.35"/>
<path transform="rotate(77.9)" d="M2.2 0 C5.3 -1.3 9.8 -3.2 14.3 -2.3 C16.7 -1.5 16.7 1.5 14.3 2.3 C9.8 3.2 5.3 1.3 2.2 0Z" fill="url(#pw)" stroke="#c0c4d0" stroke-width="0.35"/>
<path transform="rotate(103.7)" d="M2.2 0 C5.3 -1.3 10.0 -3.2 14.6 -2.3 C17.1 -1.5 17.1 1.5 14.6 2.3 C10.0 3.2 5.3 1.3 2.2 0Z" fill="url(#pw)" stroke="#c0c4d0" stroke-width="0.35"/>
<path transform="rotate(120.0)" d="M2.2 0 C5.3 -1.2 10.0 -2.9 14.6 -2.1 C17.1 -1.4 17.1 1.4 14.6 2.1 C10.0 2.9 5.3 1.2 2.2 0Z" fill="url(#pw)" stroke="#c0c4d0" stroke-width="0.35"/>
<path transform="rotate(146.9)" d="M2.2 0 C5.2 -1.4 9.6 -3.3 13.9 -2.3 C16.3 -1.5 16.3 1.5 13.9 2.3 C9.6 3.3 5.2 1.4 2.2 0Z" fill="url(#pw)" stroke="#c0c4d0" stroke-width="0.35"/>
<path transform="rotate(165.7)" d="M2.2 0 C5.1 -1.2 9.4 -2.9 13.8 -2.1 C16.1 -1.3 16.1 1.3 13.8 2.1 C9.4 2.9 5.1 1.2 2.2 0Z" fill="url(#pw)" stroke="#c0c4d0" stroke-width="0.35"/>
<path transform="rotate(187.8)" d="M2.2 0 C5.4 -1.3 10.0 -3.1 14.7 -2.2 C17.2 -1.4 17.2 1.4 14.7 2.2 C10.0 3.1 5.4 1.3 2.2 0Z" fill="url(#pw)" stroke="#c0c4d0" stroke-width="0.35"/>
<path transform="rotate(212.0)" d="M2.2 0 C5.2 -1.4 9.6 -3.4 14.0 -2.4 C16.3 -1.6 16.3 1.6 14.0 2.4 C9.6 3.4 5.2 1.4 2.2 0Z" fill="url(#pw)" stroke="#c0c4d0" stroke-width="0.35"/>
<path transform="rotate(236.3)" d="M2.2 0 C5.1 -1.4 9.4 -3.3 13.7 -2.3 C16.0 -1.5 16.0 1.5 13.7 2.3 C9.4 3.3 5.1 1.4 2.2 0Z" fill="url(#pw)" stroke="#c0c4d0" stroke-width="0.35"/>
<path transform="rotate(260.3)" d="M2.2 0 C5.4 -1.2 10.1 -2.8 14.8 -2.0 C17.4 -1.3 17.4 1.3 14.8 2.0 C10.1 2.8 5.4 1.2 2.2 0Z" fill="url(#pw)" stroke="#c0c4d0" stroke-width="0.35"/>
<path transform="rotate(281.0)" d="M2.2 0 C5.3 -1.4 10.0 -3.3 14.6 -2.4 C17.1 -1.5 17.1 1.5 14.6 2.4 C10.0 3.3 5.3 1.4 2.2 0Z" fill="url(#pw)" stroke="#c0c4d0" stroke-width="0.35"/>
<path transform="rotate(307.9)" d="M2.2 0 C5.1 -1.2 9.3 -2.9 13.5 -2.1 C15.7 -1.4 15.7 1.4 13.5 2.1 C9.3 2.9 5.1 1.2 2.2 0Z" fill="url(#pw)" stroke="#c0c4d0" stroke-width="0.35"/>
<path transform="rotate(322.4)" d="M2.2 0 C5.1 -1.4 9.4 -3.4 13.7 -2.4 C16.0 -1.6 16.0 1.6 13.7 2.4 C9.4 3.4 5.1 1.4 2.2 0Z" fill="url(#pw)" stroke="#c0c4d0" stroke-width="0.35"/>
<path transform="rotate(349.6)" d="M2.2 0 C5.4 -1.3 10.1 -3.0 14.7 -2.1 C17.2 -1.4 17.2 1.4 14.7 2.1 C10.1 3.0 5.4 1.3 2.2 0Z" fill="url(#pw)" stroke="#c0c4d0" stroke-width="0.35"/>
<circle r="4.5" fill="url(#wc)"/>
</g>
<g transform="translate(198.0,8.0) scale(1,1)">
<path transform="rotate(3.7)" d="M2.8 0 C5.6 -1.7 9.8 -4.0 14.0 -2.9 C16.3 -1.9 16.3 1.9 14.0 2.9 C9.8 4.0 5.6 1.7 2.8 0Z" fill="url(#py2)" stroke="#d6c23c" stroke-width="0.5"/>
<path transform="rotate(32.8)" d="M2.8 0 C5.9 -1.6 10.7 -3.9 15.5 -2.8 C18.1 -1.8 18.1 1.8 15.5 2.8 C10.7 3.9 5.9 1.6 2.8 0Z" fill="url(#py2)" stroke="#d6c23c" stroke-width="0.5"/>
<path transform="rotate(61.0)" d="M2.8 0 C5.7 -1.7 10.1 -4.0 14.5 -2.8 C16.9 -1.8 16.9 1.8 14.5 2.8 C10.1 4.0 5.7 1.7 2.8 0Z" fill="url(#py2)" stroke="#d6c23c" stroke-width="0.5"/>
<path transform="rotate(88.7)" d="M2.8 0 C5.3 -1.7 9.2 -4.0 13.1 -2.8 C15.2 -1.8 15.2 1.8 13.1 2.8 C9.2 4.0 5.3 1.7 2.8 0Z" fill="url(#py2)" stroke="#d6c23c" stroke-width="0.5"/>
<path transform="rotate(117.5)" d="M2.8 0 C5.7 -1.8 10.1 -4.4 14.5 -3.1 C16.8 -2.0 16.8 2.0 14.5 3.1 C10.1 4.4 5.7 1.8 2.8 0Z" fill="url(#py2)" stroke="#d6c23c" stroke-width="0.5"/>
<path transform="rotate(147.0)" d="M2.8 0 C5.2 -1.7 9.0 -4.1 12.7 -2.9 C14.7 -1.9 14.7 1.9 12.7 2.9 C9.0 4.1 5.2 1.7 2.8 0Z" fill="url(#py2)" stroke="#d6c23c" stroke-width="0.5"/>
<path transform="rotate(181.8)" d="M2.8 0 C5.4 -1.7 9.3 -4.1 13.2 -2.9 C15.3 -1.9 15.3 1.9 13.2 2.9 C9.3 4.1 5.4 1.7 2.8 0Z" fill="url(#py2)" stroke="#d6c23c" stroke-width="0.5"/>
<path transform="rotate(207.0)" d="M2.8 0 C5.8 -1.8 10.4 -4.3 15.1 -3.1 C17.5 -2.0 17.5 2.0 15.1 3.1 C10.4 4.3 5.8 1.8 2.8 0Z" fill="url(#py2)" stroke="#d6c23c" stroke-width="0.5"/>
<path transform="rotate(235.6)" d="M2.8 0 C5.3 -1.7 9.1 -4.2 13.0 -3.0 C15.0 -1.9 15.0 1.9 13.0 3.0 C9.1 4.2 5.3 1.7 2.8 0Z" fill="url(#py2)" stroke="#d6c23c" stroke-width="0.5"/>
<path transform="rotate(270.5)" d="M2.8 0 C5.7 -1.6 10.2 -3.9 14.6 -2.8 C17.0 -1.8 17.0 1.8 14.6 2.8 C10.2 3.9 5.7 1.6 2.8 0Z" fill="url(#py2)" stroke="#d6c23c" stroke-width="0.5"/>
<path transform="rotate(296.6)" d="M2.8 0 C5.8 -1.7 10.3 -4.2 14.8 -3.0 C17.2 -1.9 17.2 1.9 14.8 3.0 C10.3 4.2 5.8 1.7 2.8 0Z" fill="url(#py2)" stroke="#d6c23c" stroke-width="0.5"/>
<path transform="rotate(327.8)" d="M2.8 0 C5.5 -2.0 9.5 -4.7 13.6 -3.3 C15.8 -2.2 15.8 2.2 13.6 3.3 C9.5 4.7 5.5 2.0 2.8 0Z" fill="url(#py2)" stroke="#d6c23c" stroke-width="0.5"/>
<path transform="rotate(13.1)" d="M2.8 0 C6.2 -1.7 11.4 -4.1 16.6 -2.9 C19.4 -1.9 19.4 1.9 16.6 2.9 C11.4 4.1 6.2 1.7 2.8 0Z" fill="url(#py2)" stroke="#d6c23c" stroke-width="0.5"/>
<path transform="rotate(44.2)" d="M2.8 0 C6.5 -2.0 12.1 -4.7 17.7 -3.4 C20.7 -2.2 20.7 2.2 17.7 3.4 C12.1 4.7 6.5 2.0 2.8 0Z" fill="url(#py2)" stroke="#d6c23c" stroke-width="0.5"/>
<path transform="rotate(73.6)" d="M2.8 0 C5.9 -1.9 10.6 -4.5 15.3 -3.2 C17.8 -2.1 17.8 2.1 15.3 3.2 C10.6 4.5 5.9 1.9 2.8 0Z" fill="url(#py2)" stroke="#d6c23c" stroke-width="0.5"/>
<path transform="rotate(102.0)" d="M2.8 0 C5.7 -1.9 10.2 -4.7 14.7 -3.3 C17.0 -2.1 17.0 2.1 14.7 3.3 C10.2 4.7 5.7 1.9 2.8 0Z" fill="url(#py2)" stroke="#d6c23c" stroke-width="0.5"/>
<path transform="rotate(134.2)" d="M2.8 0 C6.4 -1.7 12.0 -4.2 17.5 -3.0 C20.5 -1.9 20.5 1.9 17.5 3.0 C12.0 4.2 6.4 1.7 2.8 0Z" fill="url(#py2)" stroke="#d6c23c" stroke-width="0.5"/>
<path transform="rotate(168.8)" d="M2.8 0 C6.1 -1.6 11.2 -4.0 16.3 -2.8 C19.0 -1.8 19.0 1.8 16.3 2.8 C11.2 4.0 6.1 1.6 2.8 0Z" fill="url(#py2)" stroke="#d6c23c" stroke-width="0.5"/>
<path transform="rotate(190.1)" d="M2.8 0 C6.2 -1.8 11.4 -4.4 16.6 -3.1 C19.3 -2.0 19.3 2.0 16.6 3.1 C11.4 4.4 6.2 1.8 2.8 0Z" fill="url(#py2)" stroke="#d6c23c" stroke-width="0.5"/>
<path transform="rotate(229.1)" d="M2.8 0 C5.8 -1.8 10.4 -4.4 14.9 -3.1 C17.4 -2.0 17.4 2.0 14.9 3.1 C10.4 4.4 5.8 1.8 2.8 0Z" fill="url(#py2)" stroke="#d6c23c" stroke-width="0.5"/>
<path transform="rotate(253.7)" d="M2.8 0 C6.2 -1.6 11.3 -3.9 16.4 -2.8 C19.1 -1.8 19.1 1.8 16.4 2.8 C11.3 3.9 6.2 1.6 2.8 0Z" fill="url(#py2)" stroke="#d6c23c" stroke-width="0.5"/>
<path transform="rotate(282.8)" d="M2.8 0 C6.2 -2.0 11.3 -4.7 16.5 -3.3 C19.2 -2.1 19.2 2.1 16.5 3.3 C11.3 4.7 6.2 2.0 2.8 0Z" fill="url(#py2)" stroke="#d6c23c" stroke-width="0.5"/>
<path transform="rotate(311.1)" d="M2.8 0 C6.2 -1.9 11.3 -4.6 16.4 -3.2 C19.1 -2.1 19.1 2.1 16.4 3.2 C11.3 4.6 6.2 1.9 2.8 0Z" fill="url(#py2)" stroke="#d6c23c" stroke-width="0.5"/>
<path transform="rotate(349.7)" d="M2.8 0 C5.9 -1.6 10.6 -3.9 15.3 -2.8 C17.8 -1.8 17.8 1.8 15.3 2.8 C10.6 3.9 5.9 1.6 2.8 0Z" fill="url(#py2)" stroke="#d6c23c" stroke-width="0.5"/>
<circle r="5.5" fill="#b0a038"/>
</g>
<g transform="translate(135.0,-2.0) scale(1,1)">
<path transform="rotate(4.4)" d="M0.0 0 C6.0 -2.2 14.9 -5.3 23.9 -3.8 C28.7 -2.4 28.7 2.4 23.9 3.8 C14.9 5.3 6.0 2.2 0.0 0Z" fill="url(#py2)" stroke="#d6c23c" stroke-width="0.5"/>
<path transform="rotate(25.5)" d="M0.0 0 C5.9 -2.2 14.8 -5.2 23.6 -3.7 C28.4 -2.4 28.4 2.4 23.6 3.7 C14.8 5.2 5.9 2.2 0.0 0Z" fill="url(#py2)" stroke="#d6c23c" stroke-width="0.5"/>
<path transform="rotate(64.0)" d="M0.0 0 C5.5 -2.4 13.9 -5.7 22.2 -4.1 C26.6 -2.6 26.6 2.6 22.2 4.1 C13.9 5.7 5.5 2.4 0.0 0Z" fill="url(#py2)" stroke="#d6c23c" stroke-width="0.5"/>
<path transform="rotate(86.6)" d="M0.0 0 C5.7 -2.1 14.4 -5.0 23.0 -3.6 C27.6 -2.3 27.6 2.3 23.0 3.6 C14.4 5.0 5.7 2.1 0.0 0Z" fill="url(#py2)" stroke="#d6c23c" stroke-width="0.5"/>
<path transform="rotate(119.0)" d="M0.0 0 C5.8 -2.4 14.5 -5.7 23.3 -4.1 C27.9 -2.6 27.9 2.6 23.3 4.1 C14.5 5.7 5.8 2.4 0.0 0Z" fill="url(#py2)" stroke="#d6c23c" stroke-width="0.5"/>
<path transform="rotate(146.8)" d="M0.0 0 C5.1 -2.2 12.7 -5.2 20.2 -3.7 C24.3 -2.4 24.3 2.4 20.2 3.7 C12.7 5.2 5.1 2.2 0.0 0Z" fill="url(#py2)" stroke="#d6c23c" stroke-width="0.5"/>
<path transform="rotate(180.2)" d="M0.0 0 C5.3 -2.0 13.2 -4.9 21.0 -3.5 C25.2 -2.2 25.2 2.2 21.0 3.5 C13.2 4.9 5.3 2.0 0.0 0Z" fill="url(#py2)" stroke="#d6c23c" stroke-width="0.5"/>
<path transform="rotate(207.5)" d="M0.0 0 C5.7 -2.4 14.2 -5.8 22.7 -4.1 C27.2 -2.7 27.2 2.7 22.7 4.1 C14.2 5.8 5.7 2.4 0.0 0Z" fill="url(#py2)" stroke="#d6c23c" stroke-width="0.5"/>
<path transform="rotate(235.4)" d="M0.0 0 C5.5 -2.4 13.7 -5.7 21.9 -4.0 C26.3 -2.6 26.3 2.6 21.9 4.0 C13.7 5.7 5.5 2.4 0.0 0Z" fill="url(#py2)" stroke="#d6c23c" stroke-width="0.5"/>
<path transform="rotate(265.4)" d="M0.0 0 C5.8 -2.0 14.5 -4.9 23.2 -3.5 C27.9 -2.2 27.9 2.2 23.2 3.5 C14.5 4.9 5.8 2.0 0.0 0Z" fill="url(#py2)" stroke="#d6c23c" stroke-width="0.5"/>
<path transform="rotate(301.0)" d="M0.0 0 C5.5 -2.3 13.7 -5.5 21.8 -3.9 C26.2 -2.5 26.2 2.5 21.8 3.9 C13.7 5.5 5.5 2.3 0.0 0Z" fill="url(#py2)" stroke="#d6c23c" stroke-width="0.5"/>
<path transform="rotate(328.1)" d="M0.0 0 C5.3 -2.3 13.3 -5.4 21.2 -3.9 C25.5 -2.5 25.5 2.5 21.2 3.9 C13.3 5.4 5.3 2.3 0.0 0Z" fill="url(#py2)" stroke="#d6c23c" stroke-width="0.5"/>
</g>
<g transform="translate(86.0,38.0) scale(1,1)">
<path transform="rotate(9.3)" d="M0.0 0 C5.1 -2.3 12.8 -5.6 20.5 -4.0 C24.6 -2.6 24.6 2.6 20.5 4.0 C12.8 5.6 5.1 2.3 0.0 0Z" fill="url(#py)" stroke="#d6c23c" stroke-width="0.5"/>
<path transform="rotate(39.4)" d="M0.0 0 C4.4 -2.4 11.1 -5.9 17.7 -4.1 C21.3 -2.7 21.3 2.7 17.7 4.1 C11.1 5.9 4.4 2.4 0.0 0Z" fill="url(#py)" stroke="#d6c23c" stroke-width="0.5"/>
<path transform="rotate(69.9)" d="M0.0 0 C4.7 -2.5 11.7 -6.0 18.6 -4.3 C22.4 -2.8 22.4 2.8 18.6 4.3 C11.7 6.0 4.7 2.5 0.0 0Z" fill="url(#py)" stroke="#d6c23c" stroke-width="0.5"/>
<path transform="rotate(102.8)" d="M0.0 0 C4.9 -2.2 12.3 -5.3 19.6 -3.8 C23.6 -2.4 23.6 2.4 19.6 3.8 C12.3 5.3 4.9 2.2 0.0 0Z" fill="url(#py)" stroke="#d6c23c" stroke-width="0.5"/>
<path transform="rotate(129.7)" d="M0.0 0 C4.5 -2.2 11.3 -5.2 18.1 -3.7 C21.7 -2.4 21.7 2.4 18.1 3.7 C11.3 5.2 4.5 2.2 0.0 0Z" fill="url(#py)" stroke="#d6c23c" stroke-width="0.5"/>
<path transform="rotate(159.3)" d="M0.0 0 C4.5 -2.3 11.3 -5.6 18.0 -4.0 C21.6 -2.6 21.6 2.6 18.0 4.0 C11.3 5.6 4.5 2.3 0.0 0Z" fill="url(#py)" stroke="#d6c23c" stroke-width="0.5"/>
<path transform="rotate(190.1)" d="M0.0 0 C4.4 -2.4 11.1 -5.9 17.8 -4.2 C21.4 -2.7 21.4 2.7 17.8 4.2 C11.1 5.9 4.4 2.4 0.0 0Z" fill="url(#py)" stroke="#d6c23c" stroke-width="0.5"/>
<path transform="rotate(215.8)" d="M0.0 0 C5.2 -2.5 13.0 -6.1 20.8 -4.3 C25.0 -2.8 25.0 2.8 20.8 4.3 C13.0 6.1 5.2 2.5 0.0 0Z" fill="url(#py)" stroke="#d6c23c" stroke-width="0.5"/>
<path transform="rotate(250.1)" d="M0.0 0 C4.5 -2.4 11.2 -5.7 17.9 -4.0 C21.4 -2.6 21.4 2.6 17.9 4.0 C11.2 5.7 4.5 2.4 0.0 0Z" fill="url(#py)" stroke="#d6c23c" stroke-width="0.5"/>
<path transform="rotate(278.8)" d="M0.0 0 C5.4 -2.2 13.6 -5.2 21.8 -3.7 C26.2 -2.4 26.2 2.4 21.8 3.7 C13.6 5.2 5.4 2.2 0.0 0Z" fill="url(#py)" stroke="#d6c23c" stroke-width="0.5"/>
<path transform="rotate(313.6)" d="M0.0 0 C5.5 -2.5 13.7 -6.0 22.0 -4.2 C26.4 -2.7 26.4 2.7 22.0 4.2 C13.7 6.0 5.5 2.5 0.0 0Z" fill="url(#py)" stroke="#d6c23c" stroke-width="0.5"/>
<path transform="rotate(343.1)" d="M0.0 0 C4.6 -2.6 11.5 -6.3 18.5 -4.5 C22.2 -2.9 22.2 2.9 18.5 4.5 C11.5 6.3 4.6 2.6 0.0 0Z" fill="url(#py)" stroke="#d6c23c" stroke-width="0.5"/>
<path transform="rotate(24.9)" d="M0.0 0 C6.3 -2.6 15.9 -6.2 25.4 -4.4 C30.5 -2.9 30.5 2.9 25.4 4.4 C15.9 6.2 6.3 2.6 0.0 0Z" fill="url(#py)" stroke="#d6c23c" stroke-width="0.5"/>
<path transform="rotate(51.7)" d="M0.0 0 C6.1 -2.6 15.3 -6.2 24.5 -4.4 C29.4 -2.9 29.4 2.9 24.5 4.4 C15.3 6.2 6.1 2.6 0.0 0Z" fill="url(#py)" stroke="#d6c23c" stroke-width="0.5"/>
<path transform="rotate(80.7)" d="M0.0 0 C5.6 -2.5 13.9 -6.0 22.3 -4.3 C26.7 -2.8 26.7 2.8 22.3 4.3 C13.9 6.0 5.6 2.5 0.0 0Z" fill="url(#py)" stroke="#d6c23c" stroke-width="0.5"/>
<path transform="rotate(111.6)" d="M0.0 0 C6.3 -2.3 15.7 -5.4 25.1 -3.8 C30.1 -2.5 30.1 2.5 25.1 3.8 C15.7 5.4 6.3 2.3 0.0 0Z" fill="url(#py)" stroke="#d6c23c" stroke-width="0.5"/>
<path transform="rotate(148.2)" d="M0.0 0 C5.3 -2.4 13.3 -5.7 21.2 -4.0 C25.5 -2.6 25.5 2.6 21.2 4.0 C13.3 5.7 5.3 2.4 0.0 0Z" fill="url(#py)" stroke="#d6c23c" stroke-width="0.5"/>
<path transform="rotate(179.2)" d="M0.0 0 C5.4 -2.3 13.5 -5.4 21.5 -3.8 C25.9 -2.5 25.9 2.5 21.5 3.8 C13.5 5.4 5.4 2.3 0.0 0Z" fill="url(#py)" stroke="#d6c23c" stroke-width="0.5"/>
<path transform="rotate(205.1)" d="M0.0 0 C5.5 -2.1 13.8 -5.1 22.1 -3.6 C26.5 -2.3 26.5 2.3 22.1 3.6 C13.8 5.1 5.5 2.1 0.0 0Z" fill="url(#py)" stroke="#d6c23c" stroke-width="0.5"/>
<path transform="rotate(231.8)" d="M0.0 0 C5.3 -2.6 13.3 -6.3 21.3 -4.4 C25.6 -2.9 25.6 2.9 21.3 4.4 C13.3 6.3 5.3 2.6 0.0 0Z" fill="url(#py)" stroke="#d6c23c" stroke-width="0.5"/>
<path transform="rotate(266.8)" d="M0.0 0 C6.3 -2.2 15.7 -5.3 25.1 -3.7 C30.1 -2.4 30.1 2.4 25.1 3.7 C15.7 5.3 6.3 2.2 0.0 0Z" fill="url(#py)" stroke="#d6c23c" stroke-width="0.5"/>
<path transform="rotate(297.8)" d="M0.0 0 C5.3 -2.4 13.2 -5.7 21.1 -4.1 C25.3 -2.6 25.3 2.6 21.1 4.1 C13.2 5.7 5.3 2.4 0.0 0Z" fill="url(#py)" stroke="#d6c23c" stroke-width="0.5"/>
<path transform="rotate(326.4)" d="M0.0 0 C5.6 -2.6 14.0 -6.2 22.3 -4.4 C26.8 -2.8 26.8 2.8 22.3 4.4 C14.0 6.2 5.6 2.6 0.0 0Z" fill="url(#py)" stroke="#d6c23c" stroke-width="0.5"/>
<path transform="rotate(355.6)" d="M0.0 0 C5.9 -2.6 14.7 -6.2 23.4 -4.4 C28.1 -2.8 28.1 2.8 23.4 4.4 C14.7 6.2 5.9 2.6 0.0 0Z" fill="url(#py)" stroke="#d6c23c" stroke-width="0.5"/>
</g>
<g transform="translate(222.0,88.0) scale(1,1)">
<path transform="rotate(1.0)" d="M0.0 0 C5.5 -2.6 13.7 -6.4 22.0 -4.5 C26.4 -2.9 26.4 2.9 22.0 4.5 C13.7 6.4 5.5 2.6 0.0 0Z" fill="url(#py2)" stroke="#d6c23c" stroke-width="0.5"/>
<path transform="rotate(36.7)" d="M0.0 0 C5.3 -2.4 13.2 -5.9 21.1 -4.1 C25.4 -2.7 25.4 2.7 21.1 4.1 C13.2 5.9 5.3 2.4 0.0 0Z" fill="url(#py2)" stroke="#d6c23c" stroke-width="0.5"/>
<path transform="rotate(75.4)" d="M0.0 0 C5.0 -2.5 12.6 -6.0 20.2 -4.2 C24.2 -2.7 24.2 2.7 20.2 4.2 C12.6 6.0 5.0 2.5 0.0 0Z" fill="url(#py2)" stroke="#d6c23c" stroke-width="0.5"/>
<path transform="rotate(105.8)" d="M0.0 0 C4.9 -2.4 12.2 -5.7 19.6 -4.1 C23.5 -2.6 23.5 2.6 19.6 4.1 C12.2 5.7 4.9 2.4 0.0 0Z" fill="url(#py2)" stroke="#d6c23c" stroke-width="0.5"/>
<path transform="rotate(138.3)" d="M0.0 0 C4.5 -2.8 11.1 -6.6 17.8 -4.7 C21.4 -3.0 21.4 3.0 17.8 4.7 C11.1 6.6 4.5 2.8 0.0 0Z" fill="url(#py2)" stroke="#d6c23c" stroke-width="0.5"/>
<path transform="rotate(166.2)" d="M0.0 0 C5.1 -2.9 12.8 -6.8 20.4 -4.8 C24.5 -3.1 24.5 3.1 20.4 4.8 C12.8 6.8 5.1 2.9 0.0 0Z" fill="url(#py2)" stroke="#d6c23c" stroke-width="0.5"/>
<path transform="rotate(202.2)" d="M0.0 0 C5.1 -2.5 12.8 -5.9 20.5 -4.2 C24.6 -2.7 24.6 2.7 20.5 4.2 C12.8 5.9 5.1 2.5 0.0 0Z" fill="url(#py2)" stroke="#d6c23c" stroke-width="0.5"/>
<path transform="rotate(229.1)" d="M0.0 0 C4.4 -2.4 11.1 -5.7 17.8 -4.0 C21.3 -2.6 21.3 2.6 17.8 4.0 C11.1 5.7 4.4 2.4 0.0 0Z" fill="url(#py2)" stroke="#d6c23c" stroke-width="0.5"/>
<path transform="rotate(268.0)" d="M0.0 0 C4.9 -2.6 12.2 -6.2 19.5 -4.4 C23.4 -2.8 23.4 2.8 19.5 4.4 C12.2 6.2 4.9 2.6 0.0 0Z" fill="url(#py2)" stroke="#d6c23c" stroke-width="0.5"/>
<path transform="rotate(303.5)" d="M0.0 0 C4.5 -2.4 11.4 -5.8 18.2 -4.1 C21.8 -2.7 21.8 2.7 18.2 4.1 C11.4 5.8 4.5 2.4 0.0 0Z" fill="url(#py2)" stroke="#d6c23c" stroke-width="0.5"/>
<path transform="rotate(333.8)" d="M0.0 0 C4.4 -2.3 11.1 -5.5 17.7 -3.9 C21.3 -2.5 21.3 2.5 17.7 3.9 C11.1 5.5 4.4 2.3 0.0 0Z" fill="url(#py2)" stroke="#d6c23c" stroke-width="0.5"/>
<path transform="rotate(19.9)" d="M0.0 0 C5.3 -2.5 13.1 -6.0 21.0 -4.2 C25.2 -2.7 25.2 2.7 21.0 4.2 C13.1 6.0 5.3 2.5 0.0 0Z" fill="url(#py2)" stroke="#d6c23c" stroke-width="0.5"/>
<path transform="rotate(51.3)" d="M0.0 0 C5.9 -2.6 14.7 -6.3 23.5 -4.5 C28.2 -2.9 28.2 2.9 23.5 4.5 C14.7 6.3 5.9 2.6 0.0 0Z" fill="url(#py2)" stroke="#d6c23c" stroke-width="0.5"/>
<path transform="rotate(83.9)" d="M0.0 0 C5.9 -2.6 14.8 -6.1 23.7 -4.4 C28.4 -2.8 28.4 2.8 23.7 4.4 C14.8 6.1 5.9 2.6 0.0 0Z" fill="url(#py2)" stroke="#d6c23c" stroke-width="0.5"/>
<path transform="rotate(115.9)" d="M0.0 0 C6.3 -2.4 15.8 -5.8 25.3 -4.1 C30.3 -2.7 30.3 2.7 25.3 4.1 C15.8 5.8 6.3 2.4 0.0 0Z" fill="url(#py2)" stroke="#d6c23c" stroke-width="0.5"/>
<path transform="rotate(148.8)" d="M0.0 0 C5.2 -2.7 13.1 -6.4 21.0 -4.5 C25.2 -2.9 25.2 2.9 21.0 4.5 C13.1 6.4 5.2 2.7 0.0 0Z" fill="url(#py2)" stroke="#d6c23c" stroke-width="0.5"/>
<path transform="rotate(188.7)" d="M0.0 0 C6.1 -2.5 15.3 -6.0 24.5 -4.3 C29.4 -2.8 29.4 2.8 24.5 4.3 C15.3 6.0 6.1 2.5 0.0 0Z" fill="url(#py2)" stroke="#d6c23c" stroke-width="0.5"/>
<path transform="rotate(215.4)" d="M0.0 0 C5.1 -2.7 12.8 -6.4 20.5 -4.5 C24.6 -2.9 24.6 2.9 20.5 4.5 C12.8 6.4 5.1 2.7 0.0 0Z" fill="url(#py2)" stroke="#d6c23c" stroke-width="0.5"/>
<path transform="rotate(251.1)" d="M0.0 0 C5.6 -2.7 13.9 -6.4 22.3 -4.5 C26.7 -2.9 26.7 2.9 22.3 4.5 C13.9 6.4 5.6 2.7 0.0 0Z" fill="url(#py2)" stroke="#d6c23c" stroke-width="0.5"/>
<path transform="rotate(282.6)" d="M0.0 0 C6.3 -2.7 15.8 -6.5 25.3 -4.6 C30.3 -3.0 30.3 3.0 25.3 4.6 C15.8 6.5 6.3 2.7 0.0 0Z" fill="url(#py2)" stroke="#d6c23c" stroke-width="0.5"/>
<path transform="rotate(313.4)" d="M0.0 0 C6.3 -2.3 15.7 -5.6 25.1 -3.9 C30.1 -2.5 30.1 2.5 25.1 3.9 C15.7 5.6 6.3 2.3 0.0 0Z" fill="url(#py2)" stroke="#d6c23c" stroke-width="0.5"/>
<path transform="rotate(349.0)" d="M0.0 0 C5.6 -2.4 14.1 -5.8 22.6 -4.1 C27.1 -2.7 27.1 2.7 22.6 4.1 C14.1 5.8 5.6 2.4 0.0 0Z" fill="url(#py2)" stroke="#d6c23c" stroke-width="0.5"/>
</g>
<g transform="translate(240.0,145.0) scale(1,1)">
<path transform="rotate(-4.4)" d="M1.5 0 C4.8 -1.4 9.8 -3.4 14.8 -2.4 C17.4 -1.6 17.4 1.6 14.8 2.4 C9.8 3.4 4.8 1.4 1.5 0Z" fill="url(#py3)" stroke="#c0a418" stroke-width="0.5"/>
<path transform="rotate(30.5)" d="M1.5 0 C4.9 -1.5 10.1 -3.5 15.3 -2.5 C18.0 -1.6 18.0 1.6 15.3 2.5 C10.1 3.5 4.9 1.5 1.5 0Z" fill="url(#py3)" stroke="#c0a418" stroke-width="0.5"/>
<path transform="rotate(57.0)" d="M1.5 0 C4.7 -1.6 9.5 -3.8 14.2 -2.7 C16.8 -1.7 16.8 1.7 14.2 2.7 C9.5 3.8 4.7 1.6 1.5 0Z" fill="url(#py3)" stroke="#c0a418" stroke-width="0.5"/>
<path transform="rotate(91.4)" d="M1.5 0 C4.8 -1.5 9.9 -3.5 14.9 -2.5 C17.5 -1.6 17.5 1.6 14.9 2.5 C9.9 3.5 4.8 1.5 1.5 0Z" fill="url(#py3)" stroke="#c0a418" stroke-width="0.5"/>
<path transform="rotate(118.1)" d="M1.5 0 C4.5 -1.4 8.9 -3.4 13.3 -2.4 C15.7 -1.6 15.7 1.6 13.3 2.4 C8.9 3.4 4.5 1.4 1.5 0Z" fill="url(#py3)" stroke="#c0a418" stroke-width="0.5"/>
<path transform="rotate(153.9)" d="M1.5 0 C4.8 -1.7 9.8 -4.0 14.8 -2.8 C17.4 -1.8 17.4 1.8 14.8 2.8 C9.8 4.0 4.8 1.7 1.5 0Z" fill="url(#py3)" stroke="#c0a418" stroke-width="0.5"/>
<path transform="rotate(175.1)" d="M1.5 0 C4.9 -1.7 9.9 -4.0 15.0 -2.8 C17.7 -1.8 17.7 1.8 15.0 2.8 C9.9 4.0 4.9 1.7 1.5 0Z" fill="url(#py3)" stroke="#c0a418" stroke-width="0.5"/>
<path transform="rotate(209.7)" d="M1.5 0 C4.8 -1.6 9.7 -3.8 14.7 -2.7 C17.3 -1.7 17.3 1.7 14.7 2.7 C9.7 3.8 4.8 1.6 1.5 0Z" fill="url(#py3)" stroke="#c0a418" stroke-width="0.5"/>
<path transform="rotate(237.3)" d="M1.5 0 C4.3 -1.5 8.5 -3.6 12.7 -2.5 C15.0 -1.6 15.0 1.6 12.7 2.5 C8.5 3.6 4.3 1.5 1.5 0Z" fill="url(#py3)" stroke="#c0a418" stroke-width="0.5"/>
<path transform="rotate(265.4)" d="M1.5 0 C4.5 -1.7 9.0 -4.0 13.4 -2.8 C15.8 -1.8 15.8 1.8 13.4 2.8 C9.0 4.0 4.5 1.7 1.5 0Z" fill="url(#py3)" stroke="#c0a418" stroke-width="0.5"/>
<path transform="rotate(302.0)" d="M1.5 0 C4.9 -1.7 9.9 -4.0 15.0 -2.8 C17.7 -1.8 17.7 1.8 15.0 2.8 C9.9 4.0 4.9 1.7 1.5 0Z" fill="url(#py3)" stroke="#c0a418" stroke-width="0.5"/>
<path transform="rotate(327.7)" d="M1.5 0 C4.6 -1.6 9.4 -3.7 14.1 -2.7 C16.6 -1.7 16.6 1.7 14.1 2.7 C9.4 3.7 4.6 1.6 1.5 0Z" fill="url(#py3)" stroke="#c0a418" stroke-width="0.5"/>
<path transform="rotate(17.9)" d="M1.5 0 C5.2 -1.5 10.7 -3.6 16.2 -2.6 C19.2 -1.7 19.2 1.7 16.2 2.6 C10.7 3.6 5.2 1.5 1.5 0Z" fill="url(#py3)" stroke="#c0a418" stroke-width="0.5"/>
<path transform="rotate(46.4)" d="M1.5 0 C5.6 -1.5 11.7 -3.6 17.8 -2.5 C21.0 -1.6 21.0 1.6 17.8 2.5 C11.7 3.6 5.6 1.5 1.5 0Z" fill="url(#py3)" stroke="#c0a418" stroke-width="0.5"/>
<path transform="rotate(78.8)" d="M1.5 0 C4.7 -1.5 9.6 -3.6 14.4 -2.5 C17.0 -1.6 17.0 1.6 14.4 2.5 C9.6 3.6 4.7 1.5 1.5 0Z" fill="url(#py3)" stroke="#c0a418" stroke-width="0.5"/>
<path transform="rotate(102.4)" d="M1.5 0 C5.4 -1.7 11.2 -4.2 17.0 -3.0 C20.1 -1.9 20.1 1.9 17.0 3.0 C11.2 4.2 5.4 1.7 1.5 0Z" fill="url(#py3)" stroke="#c0a418" stroke-width="0.5"/>
<path transform="rotate(137.5)" d="M1.5 0 C5.0 -1.7 10.3 -4.1 15.5 -2.9 C18.3 -1.9 18.3 1.9 15.5 2.9 C10.3 4.1 5.0 1.7 1.5 0Z" fill="url(#py3)" stroke="#c0a418" stroke-width="0.5"/>
<path transform="rotate(163.3)" d="M1.5 0 C4.9 -1.7 10.1 -4.1 15.2 -2.9 C18.0 -1.9 18.0 1.9 15.2 2.9 C10.1 4.1 4.9 1.7 1.5 0Z" fill="url(#py3)" stroke="#c0a418" stroke-width="0.5"/>
<path transform="rotate(196.3)" d="M1.5 0 C5.3 -1.6 11.1 -3.9 16.8 -2.8 C19.9 -1.8 19.9 1.8 16.8 2.8 C11.1 3.9 5.3 1.6 1.5 0Z" fill="url(#py3)" stroke="#c0a418" stroke-width="0.5"/>
<path transform="rotate(229.8)" d="M1.5 0 C5.1 -1.7 10.6 -4.1 16.0 -2.9 C18.9 -1.9 18.9 1.9 16.0 2.9 C10.6 4.1 5.1 1.7 1.5 0Z" fill="url(#py3)" stroke="#c0a418" stroke-width="0.5"/>
<path transform="rotate(257.0)" d="M1.5 0 C5.5 -1.6 11.4 -3.7 17.4 -2.7 C20.6 -1.7 20.6 1.7 17.4 2.7 C11.4 3.7 5.5 1.6 1.5 0Z" fill="url(#py3)" stroke="#c0a418" stroke-width="0.5"/>
<path transform="rotate(287.2)" d="M1.5 0 C5.2 -1.5 10.8 -3.6 16.4 -2.6 C19.4 -1.7 19.4 1.7 16.4 2.6 C10.8 3.6 5.2 1.5 1.5 0Z" fill="url(#py3)" stroke="#c0a418" stroke-width="0.5"/>
<path transform="rotate(312.1)" d="M1.5 0 C5.3 -1.4 10.9 -3.4 16.6 -2.4 C19.6 -1.6 19.6 1.6 16.6 2.4 C10.9 3.4 5.3 1.4 1.5 0Z" fill="url(#py3)" stroke="#c0a418" stroke-width="0.5"/>
<path transform="rotate(349.1)" d="M1.5 0 C4.8 -1.4 9.9 -3.4 14.9 -2.4 C17.6 -1.6 17.6 1.6 14.9 2.4 C9.9 3.4 4.8 1.4 1.5 0Z" fill="url(#py3)" stroke="#c0a418" stroke-width="0.5"/>
<circle r="3.0" fill="#6e9a40"/>
</g>
<g transform="translate(214.0,194.0) scale(1,1)">
<path transform="rotate(8.1)" d="M2.0 0 C7.4 -2.4 15.4 -5.7 23.5 -4.1 C27.8 -2.6 27.8 2.6 23.5 4.1 C15.4 5.7 7.4 2.4 2.0 0Z" fill="url(#py2)" stroke="#d6c23c" stroke-width="0.5"/>
<path transform="rotate(38.4)" d="M2.0 0 C6.3 -2.2 12.8 -5.3 19.2 -3.8 C22.7 -2.4 22.7 2.4 19.2 3.8 C12.8 5.3 6.3 2.2 2.0 0Z" fill="url(#py2)" stroke="#d6c23c" stroke-width="0.5"/>
<path transform="rotate(73.9)" d="M2.0 0 C7.0 -2.6 14.5 -6.2 22.1 -4.4 C26.1 -2.8 26.1 2.8 22.1 4.4 C14.5 6.2 7.0 2.6 2.0 0Z" fill="url(#py2)" stroke="#d6c23c" stroke-width="0.5"/>
<path transform="rotate(104.4)" d="M2.0 0 C6.4 -2.5 12.9 -6.1 19.4 -4.3 C22.9 -2.8 22.9 2.8 19.4 4.3 C12.9 6.1 6.4 2.5 2.0 0Z" fill="url(#py2)" stroke="#d6c23c" stroke-width="0.5"/>
<path transform="rotate(130.6)" d="M2.0 0 C7.2 -2.7 15.1 -6.4 22.9 -4.5 C27.1 -2.9 27.1 2.9 22.9 4.5 C15.1 6.4 7.2 2.7 2.0 0Z" fill="url(#py2)" stroke="#d6c23c" stroke-width="0.5"/>
<path transform="rotate(165.9)" d="M2.0 0 C6.4 -2.7 12.9 -6.4 19.4 -4.6 C22.9 -2.9 22.9 2.9 19.4 4.6 C12.9 6.4 6.4 2.7 2.0 0Z" fill="url(#py2)" stroke="#d6c23c" stroke-width="0.5"/>
<path transform="rotate(196.1)" d="M2.0 0 C7.4 -2.3 15.5 -5.4 23.5 -3.8 C27.8 -2.5 27.8 2.5 23.5 3.8 C15.5 5.4 7.4 2.3 2.0 0Z" fill="url(#py2)" stroke="#d6c23c" stroke-width="0.5"/>
<path transform="rotate(219.1)" d="M2.0 0 C6.4 -2.2 13.0 -5.3 19.6 -3.8 C23.2 -2.4 23.2 2.4 19.6 3.8 C13.0 5.3 6.4 2.2 2.0 0Z" fill="url(#py2)" stroke="#d6c23c" stroke-width="0.5"/>
<path transform="rotate(255.5)" d="M2.0 0 C7.2 -2.5 15.1 -6.1 22.9 -4.3 C27.1 -2.8 27.1 2.8 22.9 4.3 C15.1 6.1 7.2 2.5 2.0 0Z" fill="url(#py2)" stroke="#d6c23c" stroke-width="0.5"/>
<path transform="rotate(285.3)" d="M2.0 0 C7.0 -2.4 14.5 -5.7 22.1 -4.0 C26.1 -2.6 26.1 2.6 22.1 4.0 C14.5 5.7 7.0 2.4 2.0 0Z" fill="url(#py2)" stroke="#d6c23c" stroke-width="0.5"/>
<path transform="rotate(308.0)" d="M2.0 0 C6.4 -2.6 13.0 -6.3 19.6 -4.4 C23.1 -2.9 23.1 2.9 19.6 4.4 C13.0 6.3 6.4 2.6 2.0 0Z" fill="url(#py2)" stroke="#d6c23c" stroke-width="0.5"/>
<path transform="rotate(339.0)" d="M2.0 0 C6.7 -2.4 13.6 -5.8 20.6 -4.1 C24.3 -2.7 24.3 2.7 20.6 4.1 C13.6 5.8 6.7 2.4 2.0 0Z" fill="url(#py2)" stroke="#d6c23c" stroke-width="0.5"/>
<path transform="rotate(22.2)" d="M2.0 0 C7.4 -2.4 15.5 -5.7 23.6 -4.0 C27.9 -2.6 27.9 2.6 23.6 4.0 C15.5 5.7 7.4 2.4 2.0 0Z" fill="url(#py2)" stroke="#d6c23c" stroke-width="0.5"/>
<path transform="rotate(59.2)" d="M2.0 0 C7.5 -2.4 15.9 -5.7 24.2 -4.0 C28.6 -2.6 28.6 2.6 24.2 4.0 C15.9 5.7 7.5 2.4 2.0 0Z" fill="url(#py2)" stroke="#d6c23c" stroke-width="0.5"/>
<path transform="rotate(91.6)" d="M2.0 0 C7.7 -2.7 16.3 -6.4 24.9 -4.5 C29.5 -2.9 29.5 2.9 24.9 4.5 C16.3 6.4 7.7 2.7 2.0 0Z" fill="url(#py2)" stroke="#d6c23c" stroke-width="0.5"/>
<path transform="rotate(118.2)" d="M2.0 0 C7.1 -2.4 14.7 -5.8 22.3 -4.1 C26.4 -2.7 26.4 2.7 22.3 4.1 C14.7 5.8 7.1 2.4 2.0 0Z" fill="url(#py2)" stroke="#d6c23c" stroke-width="0.5"/>
<path transform="rotate(146.4)" d="M2.0 0 C8.1 -2.4 17.2 -5.7 26.4 -4.1 C31.2 -2.6 31.2 2.6 26.4 4.1 C17.2 5.7 8.1 2.4 2.0 0Z" fill="url(#py2)" stroke="#d6c23c" stroke-width="0.5"/>
<path transform="rotate(179.0)" d="M2.0 0 C7.8 -2.3 16.4 -5.6 25.1 -3.9 C29.7 -2.6 29.7 2.6 25.1 3.9 C16.4 5.6 7.8 2.3 2.0 0Z" fill="url(#py2)" stroke="#d6c23c" stroke-width="0.5"/>
<path transform="rotate(210.6)" d="M2.0 0 C7.2 -2.7 14.9 -6.4 22.7 -4.5 C26.8 -2.9 26.8 2.9 22.7 4.5 C14.9 6.4 7.2 2.7 2.0 0Z" fill="url(#py2)" stroke="#d6c23c" stroke-width="0.5"/>
<path transform="rotate(233.7)" d="M2.0 0 C7.0 -2.3 14.6 -5.5 22.2 -3.9 C26.2 -2.5 26.2 2.5 22.2 3.9 C14.6 5.5 7.0 2.3 2.0 0Z" fill="url(#py2)" stroke="#d6c23c" stroke-width="0.5"/>
<path transform="rotate(269.6)" d="M2.0 0 C8.4 -2.2 17.9 -5.3 27.5 -3.7 C32.6 -2.4 32.6 2.4 27.5 3.7 C17.9 5.3 8.4 2.2 2.0 0Z" fill="url(#py2)" stroke="#d6c23c" stroke-width="0.5"/>
<path transform="rotate(296.9)" d="M2.0 0 C7.7 -2.6 16.3 -6.3 24.8 -4.5 C29.4 -2.9 29.4 2.9 24.8 4.5 C16.3 6.3 7.7 2.6 2.0 0Z" fill="url(#py2)" stroke="#d6c23c" stroke-width="0.5"/>
<path transform="rotate(323.8)" d="M2.0 0 C7.7 -2.4 16.3 -5.7 24.9 -4.1 C29.4 -2.6 29.4 2.6 24.9 4.1 C16.3 5.7 7.7 2.4 2.0 0Z" fill="url(#py2)" stroke="#d6c23c" stroke-width="0.5"/>
<path transform="rotate(360.3)" d="M2.0 0 C7.4 -2.7 15.5 -6.5 23.6 -4.6 C27.9 -3.0 27.9 3.0 23.6 4.6 C15.5 6.5 7.4 2.7 2.0 0Z" fill="url(#py2)" stroke="#d6c23c" stroke-width="0.5"/>
<circle r="4.0" fill="#a8a030"/>
</g>
<ellipse cx="24" cy="134" rx="34" ry="30" fill="#1c2014" opacity="0.45" filter="url(#sh)"/>
<g transform="translate(21.0,130.0) scale(1,1)">
<path transform="rotate(5.8)" d="M4.0 0 C9.0 -2.8 16.5 -6.7 24.0 -4.7 C28.0 -3.1 28.0 3.1 24.0 4.7 C16.5 6.7 9.0 2.8 4.0 0Z" fill="url(#py3)" stroke="#d6c23c" stroke-width="0.5"/>
<path transform="rotate(33.7)" d="M4.0 0 C8.9 -2.8 16.1 -6.6 23.4 -4.7 C27.3 -3.0 27.3 3.0 23.4 4.7 C16.1 6.6 8.9 2.8 4.0 0Z" fill="url(#py3)" stroke="#d6c23c" stroke-width="0.5"/>
<path transform="rotate(55.2)" d="M4.0 0 C9.8 -2.8 18.5 -6.7 27.2 -4.7 C31.8 -3.1 31.8 3.1 27.2 4.7 C18.5 6.7 9.8 2.8 4.0 0Z" fill="url(#py3)" stroke="#d6c23c" stroke-width="0.5"/>
<path transform="rotate(88.0)" d="M4.0 0 C9.6 -2.6 17.9 -6.2 26.3 -4.4 C30.7 -2.8 30.7 2.8 26.3 4.4 C17.9 6.2 9.6 2.6 4.0 0Z" fill="url(#py3)" stroke="#d6c23c" stroke-width="0.5"/>
<path transform="rotate(109.9)" d="M4.0 0 C9.2 -2.9 17.1 -7.0 25.0 -4.9 C29.2 -3.2 29.2 3.2 25.0 4.9 C17.1 7.0 9.2 2.9 4.0 0Z" fill="url(#py3)" stroke="#d6c23c" stroke-width="0.5"/>
<path transform="rotate(132.4)" d="M4.0 0 C9.9 -2.4 18.8 -5.7 27.7 -4.1 C32.4 -2.6 32.4 2.6 27.7 4.1 C18.8 5.7 9.9 2.4 4.0 0Z" fill="url(#py3)" stroke="#d6c23c" stroke-width="0.5"/>
<path transform="rotate(159.3)" d="M4.0 0 C9.1 -2.9 16.7 -7.0 24.3 -4.9 C28.3 -3.2 28.3 3.2 24.3 4.9 C16.7 7.0 9.1 2.9 4.0 0Z" fill="url(#py3)" stroke="#d6c23c" stroke-width="0.5"/>
<path transform="rotate(188.0)" d="M4.0 0 C9.2 -2.9 17.1 -7.0 24.9 -4.9 C29.1 -3.2 29.1 3.2 24.9 4.9 C17.1 7.0 9.2 2.9 4.0 0Z" fill="url(#py3)" stroke="#d6c23c" stroke-width="0.5"/>
<path transform="rotate(211.1)" d="M4.0 0 C9.3 -2.7 17.3 -6.5 25.4 -4.6 C29.6 -3.0 29.6 3.0 25.4 4.6 C17.3 6.5 9.3 2.7 4.0 0Z" fill="url(#py3)" stroke="#d6c23c" stroke-width="0.5"/>
<path transform="rotate(242.0)" d="M4.0 0 C9.7 -2.8 18.4 -6.6 27.0 -4.7 C31.6 -3.0 31.6 3.0 27.0 4.7 C18.4 6.6 9.7 2.8 4.0 0Z" fill="url(#py3)" stroke="#d6c23c" stroke-width="0.5"/>
<path transform="rotate(263.6)" d="M4.0 0 C9.2 -2.5 16.9 -5.9 24.6 -4.2 C28.7 -2.7 28.7 2.7 24.6 4.2 C16.9 5.9 9.2 2.5 4.0 0Z" fill="url(#py3)" stroke="#d6c23c" stroke-width="0.5"/>
<path transform="rotate(294.3)" d="M4.0 0 C9.6 -2.8 18.0 -6.8 26.5 -4.8 C31.0 -3.1 31.0 3.1 26.5 4.8 C18.0 6.8 9.6 2.8 4.0 0Z" fill="url(#py3)" stroke="#d6c23c" stroke-width="0.5"/>
<path transform="rotate(313.3)" d="M4.0 0 C9.3 -2.8 17.3 -6.8 25.2 -4.8 C29.5 -3.1 29.5 3.1 25.2 4.8 C17.3 6.8 9.3 2.8 4.0 0Z" fill="url(#py3)" stroke="#d6c23c" stroke-width="0.5"/>
<path transform="rotate(343.1)" d="M4.0 0 C8.9 -2.7 16.2 -6.4 23.5 -4.5 C27.4 -2.9 27.4 2.9 23.5 4.5 C16.2 6.4 8.9 2.7 4.0 0Z" fill="url(#py3)" stroke="#d6c23c" stroke-width="0.5"/>
<path transform="rotate(24.7)" d="M4.0 0 C10.0 -2.5 19.0 -6.0 27.9 -4.2 C32.7 -2.7 32.7 2.7 27.9 4.2 C19.0 6.0 10.0 2.5 4.0 0Z" fill="url(#py3)" stroke="#d6c23c" stroke-width="0.5"/>
<path transform="rotate(44.6)" d="M4.0 0 C10.7 -2.9 20.8 -6.9 30.9 -4.9 C36.3 -3.2 36.3 3.2 30.9 4.9 C20.8 6.9 10.7 2.9 4.0 0Z" fill="url(#py3)" stroke="#d6c23c" stroke-width="0.5"/>
<path transform="rotate(68.8)" d="M4.0 0 C9.8 -2.5 18.6 -6.1 27.4 -4.3 C32.1 -2.8 32.1 2.8 27.4 4.3 C18.6 6.1 9.8 2.5 4.0 0Z" fill="url(#py3)" stroke="#d6c23c" stroke-width="0.5"/>
<path transform="rotate(96.3)" d="M4.0 0 C10.4 -2.5 20.1 -5.9 29.7 -4.2 C34.9 -2.7 34.9 2.7 29.7 4.2 C20.1 5.9 10.4 2.5 4.0 0Z" fill="url(#py3)" stroke="#d6c23c" stroke-width="0.5"/>
<path transform="rotate(122.0)" d="M4.0 0 C9.9 -3.0 18.8 -7.1 27.6 -5.0 C32.3 -3.3 32.3 3.3 27.6 5.0 C18.8 7.1 9.9 3.0 4.0 0Z" fill="url(#py3)" stroke="#d6c23c" stroke-width="0.5"/>
<path transform="rotate(151.7)" d="M4.0 0 C9.8 -2.9 18.4 -7.1 27.1 -5.0 C31.7 -3.2 31.7 3.2 27.1 5.0 C18.4 7.1 9.8 2.9 4.0 0Z" fill="url(#py3)" stroke="#d6c23c" stroke-width="0.5"/>
<path transform="rotate(171.2)" d="M4.0 0 C10.2 -3.0 19.5 -7.1 28.9 -5.0 C33.8 -3.3 33.8 3.3 28.9 5.0 C19.5 7.1 10.2 3.0 4.0 0Z" fill="url(#py3)" stroke="#d6c23c" stroke-width="0.5"/>
<path transform="rotate(203.8)" d="M4.0 0 C10.8 -2.6 20.9 -6.3 31.1 -4.5 C36.5 -2.9 36.5 2.9 31.1 4.5 C20.9 6.3 10.8 2.6 4.0 0Z" fill="url(#py3)" stroke="#d6c23c" stroke-width="0.5"/>
<path transform="rotate(223.5)" d="M4.0 0 C10.6 -2.4 20.6 -5.9 30.5 -4.1 C35.8 -2.7 35.8 2.7 30.5 4.1 C20.6 5.9 10.6 2.4 4.0 0Z" fill="url(#py3)" stroke="#d6c23c" stroke-width="0.5"/>
<path transform="rotate(249.4)" d="M4.0 0 C10.2 -2.4 19.6 -5.8 28.9 -4.1 C33.9 -2.6 33.9 2.6 28.9 4.1 C19.6 5.8 10.2 2.4 4.0 0Z" fill="url(#py3)" stroke="#d6c23c" stroke-width="0.5"/>
<path transform="rotate(277.0)" d="M4.0 0 C10.9 -2.8 21.2 -6.7 31.5 -4.7 C37.0 -3.1 37.0 3.1 31.5 4.7 C21.2 6.7 10.9 2.8 4.0 0Z" fill="url(#py3)" stroke="#d6c23c" stroke-width="0.5"/>
<path transform="rotate(303.7)" d="M4.0 0 C10.6 -2.7 20.5 -6.4 30.4 -4.5 C35.7 -2.9 35.7 2.9 30.4 4.5 C20.5 6.4 10.6 2.7 4.0 0Z" fill="url(#py3)" stroke="#d6c23c" stroke-width="0.5"/>
<path transform="rotate(325.8)" d="M4.0 0 C10.6 -2.6 20.4 -6.3 30.3 -4.4 C35.5 -2.9 35.5 2.9 30.3 4.4 C20.4 6.3 10.6 2.6 4.0 0Z" fill="url(#py3)" stroke="#d6c23c" stroke-width="0.5"/>
<path transform="rotate(357.6)" d="M4.0 0 C11.1 -2.6 21.6 -6.3 32.2 -4.5 C37.9 -2.9 37.9 2.9 32.2 4.5 C21.6 6.3 11.1 2.6 4.0 0Z" fill="url(#py3)" stroke="#d6c23c" stroke-width="0.5"/>
<circle r="10.2" fill="#a88c20"/>
<circle r="8.0" fill="url(#yc)"/>
</g>
<ellipse cx="155" cy="46" rx="42" ry="42" fill="#1c2010" opacity="0.35" filter="url(#sh)"/>
<g transform="translate(153.0,42.0) scale(1,1)">
<path transform="rotate(4.7)" d="M4.8 0 C12.6 -3.8 24.4 -9.1 36.2 -6.4 C42.5 -4.2 42.5 4.2 36.2 6.4 C24.4 9.1 12.6 3.8 4.8 0Z" fill="url(#py)" stroke="#d6c23c" stroke-width="0.5"/>
<path transform="rotate(22.5)" d="M4.8 0 C12.6 -4.2 24.3 -10.0 36.1 -7.1 C42.4 -4.6 42.4 4.6 36.1 7.1 C24.3 10.0 12.6 4.2 4.8 0Z" fill="url(#py)" stroke="#d6c23c" stroke-width="0.5"/>
<path transform="rotate(49.1)" d="M4.8 0 C12.6 -4.2 24.3 -10.0 36.0 -7.1 C42.2 -4.6 42.2 4.6 36.0 7.1 C24.3 10.0 12.6 4.2 4.8 0Z" fill="url(#py)" stroke="#d6c23c" stroke-width="0.5"/>
<path transform="rotate(69.3)" d="M4.8 0 C12.5 -3.8 24.1 -9.2 35.7 -6.5 C41.9 -4.2 41.9 4.2 35.7 6.5 C24.1 9.2 12.5 3.8 4.8 0Z" fill="url(#py)" stroke="#d6c23c" stroke-width="0.5"/>
<path transform="rotate(86.8)" d="M4.8 0 C12.5 -3.5 24.1 -8.4 35.7 -6.0 C41.8 -3.9 41.8 3.9 35.7 6.0 C24.1 8.4 12.5 3.5 4.8 0Z" fill="url(#py)" stroke="#d6c23c" stroke-width="0.5"/>
<path transform="rotate(109.1)" d="M4.8 0 C12.7 -4.0 24.5 -9.7 36.4 -6.9 C42.7 -4.4 42.7 4.4 36.4 6.9 C24.5 9.7 12.7 4.0 4.8 0Z" fill="url(#py)" stroke="#d6c23c" stroke-width="0.5"/>
<path transform="rotate(132.4)" d="M4.8 0 C12.0 -3.8 22.9 -9.1 33.9 -6.5 C39.7 -4.2 39.7 4.2 33.9 6.5 C22.9 9.1 12.0 3.8 4.8 0Z" fill="url(#py)" stroke="#d6c23c" stroke-width="0.5"/>
<path transform="rotate(151.8)" d="M4.8 0 C12.5 -3.8 24.0 -9.1 35.6 -6.4 C41.8 -4.2 41.8 4.2 35.6 6.4 C24.0 9.1 12.5 3.8 4.8 0Z" fill="url(#py)" stroke="#d6c23c" stroke-width="0.5"/>
<path transform="rotate(175.2)" d="M4.8 0 C12.8 -3.6 25.0 -8.6 37.1 -6.1 C43.5 -3.9 43.5 3.9 37.1 6.1 C25.0 8.6 12.8 3.6 4.8 0Z" fill="url(#py)" stroke="#d6c23c" stroke-width="0.5"/>
<path transform="rotate(196.1)" d="M4.8 0 C12.7 -3.8 24.5 -9.0 36.4 -6.4 C42.7 -4.1 42.7 4.1 36.4 6.4 C24.5 9.0 12.7 3.8 4.8 0Z" fill="url(#py)" stroke="#d6c23c" stroke-width="0.5"/>
<path transform="rotate(215.7)" d="M4.8 0 C12.9 -3.5 25.1 -8.3 37.3 -5.9 C43.8 -3.8 43.8 3.8 37.3 5.9 C25.1 8.3 12.9 3.5 4.8 0Z" fill="url(#py)" stroke="#d6c23c" stroke-width="0.5"/>
<path transform="rotate(237.4)" d="M4.8 0 C11.9 -4.1 22.7 -9.8 33.4 -7.0 C39.2 -4.5 39.2 4.5 33.4 7.0 C22.7 9.8 11.9 4.1 4.8 0Z" fill="url(#py)" stroke="#d6c23c" stroke-width="0.5"/>
<path transform="rotate(262.5)" d="M4.8 0 C12.3 -3.5 23.7 -8.4 35.1 -6.0 C41.2 -3.9 41.2 3.9 35.1 6.0 C23.7 8.4 12.3 3.5 4.8 0Z" fill="url(#py)" stroke="#d6c23c" stroke-width="0.5"/>
<path transform="rotate(280.0)" d="M4.8 0 C12.4 -4.0 23.8 -9.7 35.2 -6.9 C41.3 -4.5 41.3 4.5 35.2 6.9 C23.8 9.7 12.4 4.0 4.8 0Z" fill="url(#py)" stroke="#d6c23c" stroke-width="0.5"/>
<path transform="rotate(300.6)" d="M4.8 0 C12.5 -4.1 24.1 -9.9 35.7 -7.0 C41.9 -4.6 41.9 4.6 35.7 7.0 C24.1 9.9 12.5 4.1 4.8 0Z" fill="url(#py)" stroke="#d6c23c" stroke-width="0.5"/>
<path transform="rotate(321.9)" d="M4.8 0 C12.2 -4.2 23.4 -10.2 34.6 -7.2 C40.6 -4.7 40.6 4.7 34.6 7.2 C23.4 10.2 12.2 4.2 4.8 0Z" fill="url(#py)" stroke="#d6c23c" stroke-width="0.5"/>
<path transform="rotate(339.9)" d="M4.8 0 C12.5 -3.8 24.2 -9.0 35.9 -6.4 C42.2 -4.1 42.2 4.1 35.9 6.4 C24.2 9.0 12.5 3.8 4.8 0Z" fill="url(#py)" stroke="#d6c23c" stroke-width="0.5"/>
<path transform="rotate(17.2)" d="M4.8 0 C13.2 -4.3 25.9 -10.3 38.5 -7.3 C45.3 -4.7 45.3 4.7 38.5 7.3 C25.9 10.3 13.2 4.3 4.8 0Z" fill="url(#py)" stroke="#d6c23c" stroke-width="0.5"/>
<path transform="rotate(34.3)" d="M4.8 0 C13.1 -3.7 25.6 -8.8 38.2 -6.2 C44.8 -4.0 44.8 4.0 38.2 6.2 C25.6 8.8 13.1 3.7 4.8 0Z" fill="url(#py)" stroke="#d6c23c" stroke-width="0.5"/>
<path transform="rotate(55.9)" d="M4.8 0 C13.0 -3.8 25.5 -9.1 37.9 -6.4 C44.5 -4.2 44.5 4.2 37.9 6.4 C25.5 9.1 13.0 3.8 4.8 0Z" fill="url(#py)" stroke="#d6c23c" stroke-width="0.5"/>
<path transform="rotate(77.3)" d="M4.8 0 C14.0 -3.7 27.8 -9.0 41.7 -6.3 C49.1 -4.1 49.1 4.1 41.7 6.3 C27.8 9.0 14.0 3.7 4.8 0Z" fill="url(#py)" stroke="#d6c23c" stroke-width="0.5"/>
<path transform="rotate(96.9)" d="M4.8 0 C13.3 -4.1 26.2 -9.8 39.1 -6.9 C45.9 -4.5 45.9 4.5 39.1 6.9 C26.2 9.8 13.3 4.1 4.8 0Z" fill="url(#py)" stroke="#d6c23c" stroke-width="0.5"/>
<path transform="rotate(124.9)" d="M4.8 0 C13.7 -3.6 27.2 -8.7 40.7 -6.2 C47.9 -4.0 47.9 4.0 40.7 6.2 C27.2 8.7 13.7 3.6 4.8 0Z" fill="url(#py)" stroke="#d6c23c" stroke-width="0.5"/>
<path transform="rotate(144.7)" d="M4.8 0 C13.6 -3.6 26.8 -8.7 40.0 -6.1 C47.0 -4.0 47.0 4.0 40.0 6.1 C26.8 8.7 13.6 3.6 4.8 0Z" fill="url(#py)" stroke="#d6c23c" stroke-width="0.5"/>
<path transform="rotate(159.1)" d="M4.8 0 C14.1 -4.1 28.1 -9.9 42.1 -7.0 C49.6 -4.5 49.6 4.5 42.1 7.0 C28.1 9.9 14.1 4.1 4.8 0Z" fill="url(#py)" stroke="#d6c23c" stroke-width="0.5"/>
<path transform="rotate(185.3)" d="M4.8 0 C13.7 -3.9 27.0 -9.4 40.4 -6.7 C47.6 -4.3 47.6 4.3 40.4 6.7 C27.0 9.4 13.7 3.9 4.8 0Z" fill="url(#py)" stroke="#d6c23c" stroke-width="0.5"/>
<path transform="rotate(202.4)" d="M4.8 0 C14.4 -3.7 28.8 -9.0 43.2 -6.3 C50.8 -4.1 50.8 4.1 43.2 6.3 C28.8 9.0 14.4 3.7 4.8 0Z" fill="url(#py)" stroke="#d6c23c" stroke-width="0.5"/>
<path transform="rotate(227.7)" d="M4.8 0 C14.2 -4.1 28.3 -9.9 42.4 -7.0 C49.9 -4.5 49.9 4.5 42.4 7.0 C28.3 9.9 14.2 4.1 4.8 0Z" fill="url(#py)" stroke="#d6c23c" stroke-width="0.5"/>
<path transform="rotate(247.2)" d="M4.8 0 C13.4 -3.9 26.4 -9.4 39.5 -6.6 C46.4 -4.3 46.4 4.3 39.5 6.6 C26.4 9.4 13.4 3.9 4.8 0Z" fill="url(#py)" stroke="#d6c23c" stroke-width="0.5"/>
<path transform="rotate(265.0)" d="M4.8 0 C14.2 -3.7 28.3 -9.0 42.4 -6.4 C50.0 -4.1 50.0 4.1 42.4 6.4 C28.3 9.0 14.2 3.7 4.8 0Z" fill="url(#py)" stroke="#d6c23c" stroke-width="0.5"/>
<path transform="rotate(293.4)" d="M4.8 0 C13.4 -3.8 26.4 -9.0 39.3 -6.4 C46.2 -4.1 46.2 4.1 39.3 6.4 C26.4 9.0 13.4 3.8 4.8 0Z" fill="url(#py)" stroke="#d6c23c" stroke-width="0.5"/>
<path transform="rotate(308.6)" d="M4.8 0 C13.6 -3.6 26.9 -8.6 40.2 -6.1 C47.3 -4.0 47.3 4.0 40.2 6.1 C26.9 8.6 13.6 3.6 4.8 0Z" fill="url(#py)" stroke="#d6c23c" stroke-width="0.5"/>
<path transform="rotate(327.3)" d="M4.8 0 C14.0 -3.7 27.9 -8.8 41.8 -6.2 C49.2 -4.0 49.2 4.0 41.8 6.2 C27.9 8.8 14.0 3.7 4.8 0Z" fill="url(#py)" stroke="#d6c23c" stroke-width="0.5"/>
<path transform="rotate(350.9)" d="M4.8 0 C13.4 -3.8 26.5 -9.2 39.5 -6.5 C46.5 -4.2 46.5 4.2 39.5 6.5 C26.5 9.2 13.4 3.8 4.8 0Z" fill="url(#py)" stroke="#d6c23c" stroke-width="0.5"/>
<circle r="12.2" fill="#a08a24"/>
<circle r="9.5" fill="url(#yc)"/>
</g>
<ellipse cx="70" cy="83" rx="41" ry="41" fill="#1c2010" opacity="0.35" filter="url(#sh)"/>
<g transform="translate(68.0,79.0) scale(1,1)">
<path transform="rotate(11.3)" d="M4.5 0 C12.0 -4.0 23.1 -9.7 34.3 -6.9 C40.3 -4.5 40.3 4.5 34.3 6.9 C23.1 9.7 12.0 4.0 4.5 0Z" fill="url(#py)" stroke="#d6c23c" stroke-width="0.5"/>
<path transform="rotate(33.1)" d="M4.5 0 C12.3 -4.2 24.0 -10.1 35.7 -7.2 C41.9 -4.6 41.9 4.6 35.7 7.2 C24.0 10.1 12.3 4.2 4.5 0Z" fill="url(#py)" stroke="#d6c23c" stroke-width="0.5"/>
<path transform="rotate(52.6)" d="M4.5 0 C12.2 -4.3 23.7 -10.2 35.2 -7.2 C41.3 -4.7 41.3 4.7 35.2 7.2 C23.7 10.2 12.2 4.3 4.5 0Z" fill="url(#py)" stroke="#d6c23c" stroke-width="0.5"/>
<path transform="rotate(82.3)" d="M4.5 0 C11.4 -4.2 21.7 -10.1 32.1 -7.1 C37.6 -4.6 37.6 4.6 32.1 7.1 C21.7 10.1 11.4 4.2 4.5 0Z" fill="url(#py)" stroke="#d6c23c" stroke-width="0.5"/>
<path transform="rotate(103.3)" d="M4.5 0 C11.2 -3.5 21.4 -8.4 31.5 -5.9 C36.9 -3.8 36.9 3.8 31.5 5.9 C21.4 8.4 11.2 3.5 4.5 0Z" fill="url(#py)" stroke="#d6c23c" stroke-width="0.5"/>
<path transform="rotate(129.0)" d="M4.5 0 C12.0 -3.7 23.2 -8.9 34.4 -6.3 C40.4 -4.1 40.4 4.1 34.4 6.3 C23.2 8.9 12.0 3.7 4.5 0Z" fill="url(#py)" stroke="#d6c23c" stroke-width="0.5"/>
<path transform="rotate(143.0)" d="M4.5 0 C11.4 -3.7 21.7 -8.8 32.1 -6.3 C37.6 -4.0 37.6 4.0 32.1 6.3 C21.7 8.8 11.4 3.7 4.5 0Z" fill="url(#py)" stroke="#d6c23c" stroke-width="0.5"/>
<path transform="rotate(172.3)" d="M4.5 0 C11.6 -3.6 22.3 -8.7 33.0 -6.1 C38.7 -4.0 38.7 4.0 33.0 6.1 C22.3 8.7 11.6 3.6 4.5 0Z" fill="url(#py)" stroke="#d6c23c" stroke-width="0.5"/>
<path transform="rotate(196.0)" d="M4.5 0 C12.1 -3.6 23.6 -8.7 35.0 -6.2 C41.1 -4.0 41.1 4.0 35.0 6.2 C23.6 8.7 12.1 3.6 4.5 0Z" fill="url(#py)" stroke="#d6c23c" stroke-width="0.5"/>
<path transform="rotate(218.4)" d="M4.5 0 C11.9 -4.2 23.1 -10.0 34.2 -7.1 C40.1 -4.6 40.1 4.6 34.2 7.1 C23.1 10.0 11.9 4.2 4.5 0Z" fill="url(#py)" stroke="#d6c23c" stroke-width="0.5"/>
<path transform="rotate(238.7)" d="M4.5 0 C12.3 -4.2 23.9 -10.0 35.5 -7.1 C41.7 -4.6 41.7 4.6 35.5 7.1 C23.9 10.0 12.3 4.2 4.5 0Z" fill="url(#py)" stroke="#d6c23c" stroke-width="0.5"/>
<path transform="rotate(262.9)" d="M4.5 0 C11.5 -4.1 21.9 -9.8 32.3 -6.9 C37.9 -4.5 37.9 4.5 32.3 6.9 C21.9 9.8 11.5 4.1 4.5 0Z" fill="url(#py)" stroke="#d6c23c" stroke-width="0.5"/>
<path transform="rotate(282.3)" d="M4.5 0 C12.1 -3.9 23.4 -9.3 34.8 -6.6 C40.9 -4.2 40.9 4.2 34.8 6.6 C23.4 9.3 12.1 3.9 4.5 0Z" fill="url(#py)" stroke="#d6c23c" stroke-width="0.5"/>
<path transform="rotate(308.3)" d="M4.5 0 C11.9 -3.7 22.9 -8.9 34.0 -6.3 C39.9 -4.1 39.9 4.1 34.0 6.3 C22.9 8.9 11.9 3.7 4.5 0Z" fill="url(#py)" stroke="#d6c23c" stroke-width="0.5"/>
<path transform="rotate(324.3)" d="M4.5 0 C11.4 -3.9 21.7 -9.4 32.1 -6.6 C37.6 -4.3 37.6 4.3 32.1 6.6 C21.7 9.4 11.4 3.9 4.5 0Z" fill="url(#py)" stroke="#d6c23c" stroke-width="0.5"/>
<path transform="rotate(345.1)" d="M4.5 0 C11.8 -3.6 22.7 -8.6 33.6 -6.1 C39.4 -4.0 39.4 4.0 33.6 6.1 C22.7 8.6 11.8 3.6 4.5 0Z" fill="url(#py)" stroke="#d6c23c" stroke-width="0.5"/>
<path transform="rotate(23.2)" d="M4.5 0 C13.1 -3.9 26.1 -9.5 39.0 -6.7 C45.9 -4.3 45.9 4.3 39.0 6.7 C26.1 9.5 13.1 3.9 4.5 0Z" fill="url(#py)" stroke="#d6c23c" stroke-width="0.5"/>
<path transform="rotate(49.4)" d="M4.5 0 C12.5 -4.2 24.5 -10.1 36.4 -7.2 C42.8 -4.6 42.8 4.6 36.4 7.2 C24.5 10.1 12.5 4.2 4.5 0Z" fill="url(#py)" stroke="#d6c23c" stroke-width="0.5"/>
<path transform="rotate(67.9)" d="M4.5 0 C13.2 -4.1 26.3 -9.7 39.4 -6.9 C46.4 -4.5 46.4 4.5 39.4 6.9 C26.3 9.7 13.2 4.1 4.5 0Z" fill="url(#py)" stroke="#d6c23c" stroke-width="0.5"/>
<path transform="rotate(94.2)" d="M4.5 0 C13.0 -3.8 25.7 -9.2 38.4 -6.5 C45.2 -4.2 45.2 4.2 38.4 6.5 C25.7 9.2 13.0 3.8 4.5 0Z" fill="url(#py)" stroke="#d6c23c" stroke-width="0.5"/>
<path transform="rotate(117.9)" d="M4.5 0 C12.6 -4.0 24.7 -9.7 36.8 -6.9 C43.3 -4.4 43.3 4.4 36.8 6.9 C24.7 9.7 12.6 4.0 4.5 0Z" fill="url(#py)" stroke="#d6c23c" stroke-width="0.5"/>
<path transform="rotate(137.1)" d="M4.5 0 C12.5 -4.0 24.5 -9.6 36.5 -6.8 C43.0 -4.4 43.0 4.4 36.5 6.8 C24.5 9.6 12.5 4.0 4.5 0Z" fill="url(#py)" stroke="#d6c23c" stroke-width="0.5"/>
<path transform="rotate(160.1)" d="M4.5 0 C13.7 -3.8 27.5 -9.0 41.3 -6.4 C48.7 -4.1 48.7 4.1 41.3 6.4 C27.5 9.0 13.7 3.8 4.5 0Z" fill="url(#py)" stroke="#d6c23c" stroke-width="0.5"/>
<path transform="rotate(185.6)" d="M4.5 0 C13.2 -3.9 26.1 -9.4 39.1 -6.6 C46.0 -4.3 46.0 4.3 39.1 6.6 C26.1 9.4 13.2 3.9 4.5 0Z" fill="url(#py)" stroke="#d6c23c" stroke-width="0.5"/>
<path transform="rotate(207.2)" d="M4.5 0 C12.5 -4.1 24.5 -9.8 36.6 -7.0 C43.0 -4.5 43.0 4.5 36.6 7.0 C24.5 9.8 12.5 4.1 4.5 0Z" fill="url(#py)" stroke="#d6c23c" stroke-width="0.5"/>
<path transform="rotate(227.0)" d="M4.5 0 C12.9 -4.2 25.6 -10.1 38.2 -7.2 C44.9 -4.6 44.9 4.6 38.2 7.2 C25.6 10.1 12.9 4.2 4.5 0Z" fill="url(#py)" stroke="#d6c23c" stroke-width="0.5"/>
<path transform="rotate(246.9)" d="M4.5 0 C13.1 -3.9 26.0 -9.4 38.9 -6.7 C45.8 -4.3 45.8 4.3 38.9 6.7 C26.0 9.4 13.1 3.9 4.5 0Z" fill="url(#py)" stroke="#d6c23c" stroke-width="0.5"/>
<path transform="rotate(273.5)" d="M4.5 0 C12.8 -3.9 25.1 -9.3 37.5 -6.6 C44.1 -4.2 44.1 4.2 37.5 6.6 C25.1 9.3 12.8 3.9 4.5 0Z" fill="url(#py)" stroke="#d6c23c" stroke-width="0.5"/>
<path transform="rotate(292.5)" d="M4.5 0 C13.2 -4.2 26.3 -10.1 39.3 -7.1 C46.3 -4.6 46.3 4.6 39.3 7.1 C26.3 10.1 13.2 4.2 4.5 0Z" fill="url(#py)" stroke="#d6c23c" stroke-width="0.5"/>
<path transform="rotate(313.7)" d="M4.5 0 C13.6 -3.8 27.2 -9.2 40.8 -6.5 C48.0 -4.2 48.0 4.2 40.8 6.5 C27.2 9.2 13.6 3.8 4.5 0Z" fill="url(#py)" stroke="#d6c23c" stroke-width="0.5"/>
<path transform="rotate(338.3)" d="M4.5 0 C12.8 -3.9 25.3 -9.4 37.8 -6.7 C44.5 -4.3 44.5 4.3 37.8 6.7 C25.3 9.4 12.8 3.9 4.5 0Z" fill="url(#py)" stroke="#d6c23c" stroke-width="0.5"/>
<path transform="rotate(365.5)" d="M4.5 0 C13.3 -4.2 26.6 -10.0 39.9 -7.1 C46.9 -4.6 46.9 4.6 39.9 7.1 C26.6 10.0 13.3 4.2 4.5 0Z" fill="url(#py)" stroke="#d6c23c" stroke-width="0.5"/>
<circle r="11.5" fill="#a08a24"/>
<circle r="9.0" fill="url(#yc)"/>
</g>
<ellipse cx="187" cy="124" rx="42" ry="42" fill="#1c2010" opacity="0.35" filter="url(#sh)"/>
<g transform="translate(185.0,120.0) scale(1,1)">
<path transform="rotate(-1.7)" d="M5.0 0 C12.3 -3.8 23.2 -9.1 34.1 -6.4 C39.9 -4.2 39.9 4.2 34.1 6.4 C23.2 9.1 12.3 3.8 5.0 0Z" fill="url(#py2)" stroke="#d6c23c" stroke-width="0.5"/>
<path transform="rotate(22.0)" d="M5.0 0 C13.2 -4.2 25.5 -10.1 37.8 -7.2 C44.4 -4.6 44.4 4.6 37.8 7.2 C25.5 10.1 13.2 4.2 5.0 0Z" fill="url(#py2)" stroke="#d6c23c" stroke-width="0.5"/>
<path transform="rotate(37.8)" d="M5.0 0 C13.6 -4.3 26.6 -10.3 39.6 -7.3 C46.5 -4.7 46.5 4.7 39.6 7.3 C26.6 10.3 13.6 4.3 5.0 0Z" fill="url(#py2)" stroke="#d6c23c" stroke-width="0.5"/>
<path transform="rotate(64.0)" d="M5.0 0 C13.1 -3.8 25.3 -9.1 37.6 -6.4 C44.1 -4.2 44.1 4.2 37.6 6.4 C25.3 9.1 13.1 3.8 5.0 0Z" fill="url(#py2)" stroke="#d6c23c" stroke-width="0.5"/>
<path transform="rotate(79.8)" d="M5.0 0 C13.4 -4.3 26.1 -10.4 38.8 -7.4 C45.5 -4.8 45.5 4.8 38.8 7.4 C26.1 10.4 13.4 4.3 5.0 0Z" fill="url(#py2)" stroke="#d6c23c" stroke-width="0.5"/>
<path transform="rotate(107.0)" d="M5.0 0 C14.0 -4.2 27.6 -10.1 41.2 -7.2 C48.4 -4.6 48.4 4.6 41.2 7.2 C27.6 10.1 14.0 4.2 5.0 0Z" fill="url(#py2)" stroke="#d6c23c" stroke-width="0.5"/>
<path transform="rotate(131.2)" d="M5.0 0 C13.7 -4.1 26.7 -9.8 39.8 -6.9 C46.8 -4.5 46.8 4.5 39.8 6.9 C26.7 9.8 13.7 4.1 5.0 0Z" fill="url(#py2)" stroke="#d6c23c" stroke-width="0.5"/>
<path transform="rotate(149.5)" d="M5.0 0 C13.5 -4.0 26.2 -9.7 38.9 -6.9 C45.6 -4.4 45.6 4.4 38.9 6.9 C26.2 9.7 13.5 4.0 5.0 0Z" fill="url(#py2)" stroke="#d6c23c" stroke-width="0.5"/>
<path transform="rotate(171.2)" d="M5.0 0 C12.4 -4.1 23.5 -9.9 34.5 -7.0 C40.4 -4.5 40.4 4.5 34.5 7.0 C23.5 9.9 12.4 4.1 5.0 0Z" fill="url(#py2)" stroke="#d6c23c" stroke-width="0.5"/>
<path transform="rotate(190.2)" d="M5.0 0 C12.6 -3.6 24.0 -8.7 35.3 -6.1 C41.4 -4.0 41.4 4.0 35.3 6.1 C24.0 8.7 12.6 3.6 5.0 0Z" fill="url(#py2)" stroke="#d6c23c" stroke-width="0.5"/>
<path transform="rotate(208.6)" d="M5.0 0 C11.4 -4.2 20.9 -10.1 30.5 -7.1 C35.5 -4.6 35.5 4.6 30.5 7.1 C20.9 10.1 11.4 4.2 5.0 0Z" fill="url(#py2)" stroke="#d6c23c" stroke-width="0.5"/>
<path transform="rotate(237.1)" d="M5.0 0 C11.5 -3.8 21.3 -9.2 31.2 -6.5 C36.4 -4.2 36.4 4.2 31.2 6.5 C21.3 9.2 11.5 3.8 5.0 0Z" fill="url(#py2)" stroke="#d6c23c" stroke-width="0.5"/>
<path transform="rotate(257.3)" d="M5.0 0 C11.5 -4.0 21.2 -9.6 30.9 -6.8 C36.1 -4.4 36.1 4.4 30.9 6.8 C21.2 9.6 11.5 4.0 5.0 0Z" fill="url(#py2)" stroke="#d6c23c" stroke-width="0.5"/>
<path transform="rotate(272.9)" d="M5.0 0 C11.0 -3.9 19.9 -9.3 28.9 -6.6 C33.6 -4.3 33.6 4.3 28.9 6.6 C19.9 9.3 11.0 3.9 5.0 0Z" fill="url(#py2)" stroke="#d6c23c" stroke-width="0.5"/>
<path transform="rotate(294.7)" d="M5.0 0 C11.2 -4.1 20.5 -9.8 29.9 -6.9 C34.8 -4.5 34.8 4.5 29.9 6.9 C20.5 9.8 11.2 4.1 5.0 0Z" fill="url(#py2)" stroke="#d6c23c" stroke-width="0.5"/>
<path transform="rotate(322.0)" d="M5.0 0 C11.2 -4.0 20.5 -9.6 29.8 -6.8 C34.8 -4.4 34.8 4.4 29.8 6.8 C20.5 9.6 11.2 4.0 5.0 0Z" fill="url(#py2)" stroke="#d6c23c" stroke-width="0.5"/>
<path transform="rotate(334.2)" d="M5.0 0 C11.5 -4.2 21.3 -10.2 31.0 -7.2 C36.2 -4.7 36.2 4.7 31.0 7.2 C21.3 10.2 11.5 4.2 5.0 0Z" fill="url(#py2)" stroke="#d6c23c" stroke-width="0.5"/>
<path transform="rotate(11.3)" d="M5.0 0 C14.8 -3.9 29.5 -9.4 44.3 -6.7 C52.1 -4.3 52.1 4.3 44.3 6.7 C29.5 9.4 14.8 3.9 5.0 0Z" fill="url(#py2)" stroke="#d6c23c" stroke-width="0.5"/>
<path transform="rotate(26.9)" d="M5.0 0 C14.5 -4.0 28.7 -9.7 42.8 -6.9 C50.4 -4.4 50.4 4.4 42.8 6.9 C28.7 9.7 14.5 4.0 5.0 0Z" fill="url(#py2)" stroke="#d6c23c" stroke-width="0.5"/>
<path transform="rotate(57.3)" d="M5.0 0 C16.0 -3.9 32.5 -9.5 49.0 -6.7 C57.8 -4.3 57.8 4.3 49.0 6.7 C32.5 9.5 16.0 3.9 5.0 0Z" fill="url(#py2)" stroke="#d6c23c" stroke-width="0.5"/>
<path transform="rotate(73.2)" d="M5.0 0 C14.8 -4.1 29.5 -9.8 44.2 -6.9 C52.0 -4.5 52.0 4.5 44.2 6.9 C29.5 9.8 14.8 4.1 5.0 0Z" fill="url(#py2)" stroke="#d6c23c" stroke-width="0.5"/>
<path transform="rotate(92.4)" d="M5.0 0 C14.9 -3.5 29.8 -8.5 44.8 -6.0 C52.7 -3.9 52.7 3.9 44.8 6.0 C29.8 8.5 14.9 3.5 5.0 0Z" fill="url(#py2)" stroke="#d6c23c" stroke-width="0.5"/>
<path transform="rotate(111.5)" d="M5.0 0 C15.7 -3.6 31.7 -8.7 47.7 -6.2 C56.3 -4.0 56.3 4.0 47.7 6.2 C31.7 8.7 15.7 3.6 5.0 0Z" fill="url(#py2)" stroke="#d6c23c" stroke-width="0.5"/>
<path transform="rotate(142.3)" d="M5.0 0 C14.3 -4.3 28.1 -10.3 42.0 -7.3 C49.4 -4.7 49.4 4.7 42.0 7.3 C28.1 10.3 14.3 4.3 5.0 0Z" fill="url(#py2)" stroke="#d6c23c" stroke-width="0.5"/>
<path transform="rotate(155.1)" d="M5.0 0 C13.9 -4.2 27.2 -10.0 40.5 -7.1 C47.6 -4.6 47.6 4.6 40.5 7.1 C27.2 10.0 13.9 4.2 5.0 0Z" fill="url(#py2)" stroke="#d6c23c" stroke-width="0.5"/>
<path transform="rotate(177.4)" d="M5.0 0 C14.3 -3.7 28.3 -8.8 42.2 -6.3 C49.7 -4.1 49.7 4.1 42.2 6.3 C28.3 8.8 14.3 3.7 5.0 0Z" fill="url(#py2)" stroke="#d6c23c" stroke-width="0.5"/>
<path transform="rotate(196.7)" d="M5.0 0 C13.8 -4.1 27.0 -10.0 40.3 -7.1 C47.3 -4.6 47.3 4.6 40.3 7.1 C27.0 10.0 13.8 4.1 5.0 0Z" fill="url(#py2)" stroke="#d6c23c" stroke-width="0.5"/>
<path transform="rotate(225.9)" d="M5.0 0 C13.1 -3.6 25.1 -8.6 37.2 -6.1 C43.7 -4.0 43.7 4.0 37.2 6.1 C25.1 8.6 13.1 3.6 5.0 0Z" fill="url(#py2)" stroke="#d6c23c" stroke-width="0.5"/>
<path transform="rotate(244.8)" d="M5.0 0 C12.7 -3.9 24.3 -9.4 35.9 -6.7 C42.1 -4.3 42.1 4.3 35.9 6.7 C24.3 9.4 12.7 3.9 5.0 0Z" fill="url(#py2)" stroke="#d6c23c" stroke-width="0.5"/>
<path transform="rotate(269.0)" d="M5.0 0 C12.0 -4.4 22.6 -10.5 33.2 -7.4 C38.8 -4.8 38.8 4.8 33.2 7.4 C22.6 10.5 12.0 4.4 5.0 0Z" fill="url(#py2)" stroke="#d6c23c" stroke-width="0.5"/>
<path transform="rotate(288.1)" d="M5.0 0 C11.8 -3.5 22.1 -8.5 32.3 -6.0 C37.8 -3.9 37.8 3.9 32.3 6.0 C22.1 8.5 11.8 3.5 5.0 0Z" fill="url(#py2)" stroke="#d6c23c" stroke-width="0.5"/>
<path transform="rotate(308.6)" d="M5.0 0 C13.1 -3.6 25.1 -8.6 37.2 -6.1 C43.7 -3.9 43.7 3.9 37.2 6.1 C25.1 8.6 13.1 3.6 5.0 0Z" fill="url(#py2)" stroke="#d6c23c" stroke-width="0.5"/>
<path transform="rotate(326.3)" d="M5.0 0 C13.3 -3.7 25.8 -8.8 38.3 -6.2 C44.9 -4.0 44.9 4.0 38.3 6.2 C25.8 8.8 13.3 3.7 5.0 0Z" fill="url(#py2)" stroke="#d6c23c" stroke-width="0.5"/>
<path transform="rotate(353.0)" d="M5.0 0 C13.7 -3.6 26.7 -8.6 39.8 -6.1 C46.8 -3.9 46.8 3.9 39.8 6.1 C26.7 8.6 13.7 3.6 5.0 0Z" fill="url(#py2)" stroke="#d6c23c" stroke-width="0.5"/>
<circle r="12.8" fill="#a08a24"/>
<circle r="10.0" fill="url(#yc)"/>
</g>
<ellipse cx="131" cy="88" rx="44" ry="44" fill="#1c2010" opacity="0.35" filter="url(#sh)"/>
<g transform="translate(129.0,84.0) scale(1,1)">
<path transform="rotate(5.7)" d="M5.2 0 C13.2 -4.1 25.1 -9.8 37.0 -7.0 C43.4 -4.5 43.4 4.5 37.0 7.0 C25.1 9.8 13.2 4.1 5.2 0Z" fill="url(#py)" stroke="#d6c23c" stroke-width="0.5"/>
<path transform="rotate(29.9)" d="M5.2 0 C12.9 -4.4 24.3 -10.6 35.7 -7.5 C41.8 -4.9 41.8 4.9 35.7 7.5 C24.3 10.6 12.9 4.4 5.2 0Z" fill="url(#py)" stroke="#d6c23c" stroke-width="0.5"/>
<path transform="rotate(48.0)" d="M5.2 0 C13.6 -4.3 26.2 -10.3 38.8 -7.3 C45.5 -4.7 45.5 4.7 38.8 7.3 C26.2 10.3 13.6 4.3 5.2 0Z" fill="url(#py)" stroke="#d6c23c" stroke-width="0.5"/>
<path transform="rotate(69.7)" d="M5.2 0 C13.4 -4.4 25.6 -10.6 37.8 -7.5 C44.3 -4.9 44.3 4.9 37.8 7.5 C25.6 10.6 13.4 4.4 5.2 0Z" fill="url(#py)" stroke="#d6c23c" stroke-width="0.5"/>
<path transform="rotate(96.2)" d="M5.2 0 C13.9 -4.2 27.0 -10.1 40.0 -7.2 C47.0 -4.6 47.0 4.6 40.0 7.2 C27.0 10.1 13.9 4.2 5.2 0Z" fill="url(#py)" stroke="#d6c23c" stroke-width="0.5"/>
<path transform="rotate(110.8)" d="M5.2 0 C13.0 -4.6 24.6 -11.0 36.1 -7.8 C42.3 -5.1 42.3 5.1 36.1 7.8 C24.6 11.0 13.0 4.6 5.2 0Z" fill="url(#py)" stroke="#d6c23c" stroke-width="0.5"/>
<path transform="rotate(136.1)" d="M5.2 0 C13.8 -4.0 26.7 -9.6 39.6 -6.8 C46.4 -4.4 46.4 4.4 39.6 6.8 C26.7 9.6 13.8 4.0 5.2 0Z" fill="url(#py)" stroke="#d6c23c" stroke-width="0.5"/>
<path transform="rotate(156.3)" d="M5.2 0 C13.9 -4.5 26.8 -10.7 39.7 -7.6 C46.6 -4.9 46.6 4.9 39.7 7.6 C26.8 10.7 13.9 4.5 5.2 0Z" fill="url(#py)" stroke="#d6c23c" stroke-width="0.5"/>
<path transform="rotate(177.4)" d="M5.2 0 C12.8 -4.1 24.2 -9.8 35.6 -7.0 C41.6 -4.5 41.6 4.5 35.6 7.0 C24.2 9.8 12.8 4.1 5.2 0Z" fill="url(#py)" stroke="#d6c23c" stroke-width="0.5"/>
<path transform="rotate(201.5)" d="M5.2 0 C12.7 -4.3 23.9 -10.4 35.1 -7.4 C41.0 -4.8 41.0 4.8 35.1 7.4 C23.9 10.4 12.7 4.3 5.2 0Z" fill="url(#py)" stroke="#d6c23c" stroke-width="0.5"/>
<path transform="rotate(219.8)" d="M5.2 0 C13.2 -4.4 25.1 -10.7 36.9 -7.6 C43.3 -4.9 43.3 4.9 36.9 7.6 C25.1 10.7 13.2 4.4 5.2 0Z" fill="url(#py)" stroke="#d6c23c" stroke-width="0.5"/>
<path transform="rotate(237.8)" d="M5.2 0 C12.0 -3.9 22.2 -9.5 32.3 -6.7 C37.7 -4.3 37.7 4.3 32.3 6.7 C22.2 9.5 12.0 3.9 5.2 0Z" fill="url(#py)" stroke="#d6c23c" stroke-width="0.5"/>
<path transform="rotate(260.3)" d="M5.2 0 C12.6 -4.4 23.7 -10.7 34.7 -7.6 C40.6 -4.9 40.6 4.9 34.7 7.6 C23.7 10.7 12.6 4.4 5.2 0Z" fill="url(#py)" stroke="#d6c23c" stroke-width="0.5"/>
<path transform="rotate(286.2)" d="M5.2 0 C12.0 -4.5 22.1 -10.7 32.3 -7.6 C37.7 -4.9 37.7 4.9 32.3 7.6 C22.1 10.7 12.0 4.5 5.2 0Z" fill="url(#py)" stroke="#d6c23c" stroke-width="0.5"/>
<path transform="rotate(306.6)" d="M5.2 0 C13.0 -4.2 24.7 -10.1 36.4 -7.2 C42.7 -4.6 42.7 4.6 36.4 7.2 C24.7 10.1 13.0 4.2 5.2 0Z" fill="url(#py)" stroke="#d6c23c" stroke-width="0.5"/>
<path transform="rotate(322.4)" d="M5.2 0 C13.1 -4.4 25.0 -10.7 36.8 -7.6 C43.1 -4.9 43.1 4.9 36.8 7.6 C25.0 10.7 13.1 4.4 5.2 0Z" fill="url(#py)" stroke="#d6c23c" stroke-width="0.5"/>
<path transform="rotate(347.7)" d="M5.2 0 C13.4 -4.0 25.7 -9.6 38.0 -6.8 C44.5 -4.4 44.5 4.4 38.0 6.8 C25.7 9.6 13.4 4.0 5.2 0Z" fill="url(#py)" stroke="#d6c23c" stroke-width="0.5"/>
<path transform="rotate(13.4)" d="M5.2 0 C14.7 -4.4 28.9 -10.6 43.1 -7.5 C50.6 -4.9 50.6 4.9 43.1 7.5 C28.9 10.6 14.7 4.4 5.2 0Z" fill="url(#py)" stroke="#d6c23c" stroke-width="0.5"/>
<path transform="rotate(35.8)" d="M5.2 0 C15.2 -4.6 30.2 -10.9 45.1 -7.7 C53.1 -5.0 53.1 5.0 45.1 7.7 C30.2 10.9 15.2 4.6 5.2 0Z" fill="url(#py)" stroke="#d6c23c" stroke-width="0.5"/>
<path transform="rotate(57.3)" d="M5.2 0 C15.2 -4.3 30.0 -10.4 44.9 -7.3 C52.8 -4.8 52.8 4.8 44.9 7.3 C30.0 10.4 15.2 4.3 5.2 0Z" fill="url(#py)" stroke="#d6c23c" stroke-width="0.5"/>
<path transform="rotate(80.8)" d="M5.2 0 C14.6 -3.9 28.7 -9.4 42.8 -6.7 C50.4 -4.3 50.4 4.3 42.8 6.7 C28.7 9.4 14.6 3.9 5.2 0Z" fill="url(#py)" stroke="#d6c23c" stroke-width="0.5"/>
<path transform="rotate(104.8)" d="M5.2 0 C15.5 -4.1 30.9 -9.9 46.3 -7.0 C54.6 -4.5 54.6 4.5 46.3 7.0 C30.9 9.9 15.5 4.1 5.2 0Z" fill="url(#py)" stroke="#d6c23c" stroke-width="0.5"/>
<path transform="rotate(119.3)" d="M5.2 0 C15.5 -4.4 30.8 -10.6 46.2 -7.5 C54.4 -4.9 54.4 4.9 46.2 7.5 C30.8 10.6 15.5 4.4 5.2 0Z" fill="url(#py)" stroke="#d6c23c" stroke-width="0.5"/>
<path transform="rotate(142.0)" d="M5.2 0 C15.0 -4.5 29.6 -10.9 44.2 -7.7 C52.0 -5.0 52.0 5.0 44.2 7.7 C29.6 10.9 15.0 4.5 5.2 0Z" fill="url(#py)" stroke="#d6c23c" stroke-width="0.5"/>
<path transform="rotate(169.7)" d="M5.2 0 C14.6 -4.1 28.7 -9.9 42.8 -7.0 C50.3 -4.6 50.3 4.6 42.8 7.0 C28.7 9.9 14.6 4.1 5.2 0Z" fill="url(#py)" stroke="#d6c23c" stroke-width="0.5"/>
<path transform="rotate(187.9)" d="M5.2 0 C14.0 -3.9 27.0 -9.3 40.1 -6.6 C47.1 -4.3 47.1 4.3 40.1 6.6 C27.0 9.3 14.0 3.9 5.2 0Z" fill="url(#py)" stroke="#d6c23c" stroke-width="0.5"/>
<path transform="rotate(205.0)" d="M5.2 0 C14.5 -4.0 28.4 -9.7 42.3 -6.9 C49.7 -4.4 49.7 4.4 42.3 6.9 C28.4 9.7 14.5 4.0 5.2 0Z" fill="url(#py)" stroke="#d6c23c" stroke-width="0.5"/>
<path transform="rotate(230.0)" d="M5.2 0 C13.9 -4.2 26.8 -10.0 39.8 -7.1 C46.7 -4.6 46.7 4.6 39.8 7.1 C26.8 10.0 13.9 4.2 5.2 0Z" fill="url(#py)" stroke="#d6c23c" stroke-width="0.5"/>
<path transform="rotate(247.0)" d="M5.2 0 C13.3 -4.6 25.4 -11.1 37.5 -7.8 C43.9 -5.1 43.9 5.1 37.5 7.8 C25.4 11.1 13.3 4.6 5.2 0Z" fill="url(#py)" stroke="#d6c23c" stroke-width="0.5"/>
<path transform="rotate(270.4)" d="M5.2 0 C13.3 -4.3 25.5 -10.3 37.6 -7.3 C44.1 -4.7 44.1 4.7 37.6 7.3 C25.5 10.3 13.3 4.3 5.2 0Z" fill="url(#py)" stroke="#d6c23c" stroke-width="0.5"/>
<path transform="rotate(295.8)" d="M5.2 0 C13.5 -4.2 25.8 -10.2 38.1 -7.2 C44.7 -4.7 44.7 4.7 38.1 7.2 C25.8 10.2 13.5 4.2 5.2 0Z" fill="url(#py)" stroke="#d6c23c" stroke-width="0.5"/>
<path transform="rotate(312.5)" d="M5.2 0 C14.1 -3.7 27.3 -8.9 40.5 -6.3 C47.5 -4.1 47.5 4.1 40.5 6.3 C27.3 8.9 14.1 3.7 5.2 0Z" fill="url(#py)" stroke="#d6c23c" stroke-width="0.5"/>
<path transform="rotate(330.6)" d="M5.2 0 C14.9 -4.5 29.3 -10.8 43.7 -7.6 C51.4 -4.9 51.4 4.9 43.7 7.6 C29.3 10.8 14.9 4.5 5.2 0Z" fill="url(#py)" stroke="#d6c23c" stroke-width="0.5"/>
<path transform="rotate(356.3)" d="M5.2 0 C14.5 -3.9 28.5 -9.5 42.4 -6.7 C49.8 -4.3 49.8 4.3 42.4 6.7 C28.5 9.5 14.5 3.9 5.2 0Z" fill="url(#py)" stroke="#d6c23c" stroke-width="0.5"/>
<circle r="13.4" fill="#a08a24"/>
<circle r="10.5" fill="url(#yc)"/>
</g>
<ellipse cx="81" cy="185" rx="50" ry="50" fill="#1c2010" opacity="0.35" filter="url(#sh)"/>
<g transform="translate(79.0,181.0) scale(1,1)">
<path transform="rotate(5.8)" d="M5.2 0 C14.2 -5.0 27.7 -12.0 41.2 -8.5 C48.3 -5.5 48.3 5.5 41.2 8.5 C27.7 12.0 14.2 5.0 5.2 0Z" fill="url(#py2)" stroke="#d6c23c" stroke-width="0.5"/>
<path transform="rotate(28.2)" d="M5.2 0 C14.8 -5.0 29.1 -12.1 43.4 -8.5 C51.0 -5.5 51.0 5.5 43.4 8.5 C29.1 12.1 14.8 5.0 5.2 0Z" fill="url(#py2)" stroke="#d6c23c" stroke-width="0.5"/>
<path transform="rotate(45.5)" d="M5.2 0 C13.7 -4.3 26.3 -10.2 39.0 -7.2 C45.7 -4.7 45.7 4.7 39.0 7.2 C26.3 10.2 13.7 4.3 5.2 0Z" fill="url(#py2)" stroke="#d6c23c" stroke-width="0.5"/>
<path transform="rotate(67.3)" d="M5.2 0 C13.7 -4.1 26.5 -9.8 39.2 -7.0 C46.0 -4.5 46.0 4.5 39.2 7.0 C26.5 9.8 13.7 4.1 5.2 0Z" fill="url(#py2)" stroke="#d6c23c" stroke-width="0.5"/>
<path transform="rotate(93.6)" d="M5.2 0 C14.9 -4.5 29.3 -10.8 43.7 -7.7 C51.3 -5.0 51.3 5.0 43.7 7.7 C29.3 10.8 14.9 4.5 5.2 0Z" fill="url(#py2)" stroke="#d6c23c" stroke-width="0.5"/>
<path transform="rotate(120.0)" d="M5.2 0 C14.9 -4.1 29.4 -9.9 43.9 -7.0 C51.6 -4.5 51.6 4.5 43.9 7.0 C29.4 9.9 14.9 4.1 5.2 0Z" fill="url(#py2)" stroke="#d6c23c" stroke-width="0.5"/>
<path transform="rotate(139.0)" d="M5.2 0 C14.2 -4.2 27.6 -10.0 41.0 -7.1 C48.1 -4.6 48.1 4.6 41.0 7.1 C27.6 10.0 14.2 4.2 5.2 0Z" fill="url(#py2)" stroke="#d6c23c" stroke-width="0.5"/>
<path transform="rotate(165.1)" d="M5.2 0 C14.0 -4.6 27.1 -11.1 40.2 -7.9 C47.2 -5.1 47.2 5.1 40.2 7.9 C27.1 11.1 14.0 4.6 5.2 0Z" fill="url(#py2)" stroke="#d6c23c" stroke-width="0.5"/>
<path transform="rotate(184.4)" d="M5.2 0 C15.0 -4.7 29.6 -11.3 44.1 -8.0 C51.9 -5.2 51.9 5.2 44.1 8.0 C29.6 11.3 15.0 4.7 5.2 0Z" fill="url(#py2)" stroke="#d6c23c" stroke-width="0.5"/>
<path transform="rotate(204.4)" d="M5.2 0 C14.3 -4.2 27.8 -10.1 41.3 -7.2 C48.5 -4.6 48.5 4.6 41.3 7.2 C27.8 10.1 14.3 4.2 5.2 0Z" fill="url(#py2)" stroke="#d6c23c" stroke-width="0.5"/>
<path transform="rotate(232.7)" d="M5.2 0 C15.0 -4.3 29.7 -10.3 44.3 -7.3 C52.2 -4.7 52.2 4.7 44.3 7.3 C29.7 10.3 15.0 4.3 5.2 0Z" fill="url(#py2)" stroke="#d6c23c" stroke-width="0.5"/>
<path transform="rotate(245.9)" d="M5.2 0 C14.0 -4.4 27.1 -10.6 40.2 -7.5 C47.2 -4.8 47.2 4.8 40.2 7.5 C27.1 10.6 14.0 4.4 5.2 0Z" fill="url(#py2)" stroke="#d6c23c" stroke-width="0.5"/>
<path transform="rotate(277.0)" d="M5.2 0 C14.9 -4.9 29.4 -11.7 43.9 -8.3 C51.6 -5.4 51.6 5.4 43.9 8.3 C29.4 11.7 14.9 4.9 5.2 0Z" fill="url(#py2)" stroke="#d6c23c" stroke-width="0.5"/>
<path transform="rotate(291.0)" d="M5.2 0 C14.7 -4.8 29.0 -11.4 43.2 -8.1 C50.8 -5.2 50.8 5.2 43.2 8.1 C29.0 11.4 14.7 4.8 5.2 0Z" fill="url(#py2)" stroke="#d6c23c" stroke-width="0.5"/>
<path transform="rotate(319.5)" d="M5.2 0 C15.0 -4.1 29.7 -9.9 44.3 -7.0 C52.1 -4.5 52.1 4.5 44.3 7.0 C29.7 9.9 15.0 4.1 5.2 0Z" fill="url(#py2)" stroke="#d6c23c" stroke-width="0.5"/>
<path transform="rotate(336.9)" d="M5.2 0 C14.7 -5.0 28.9 -12.0 43.0 -8.5 C50.6 -5.5 50.6 5.5 43.0 8.5 C28.9 12.0 14.7 5.0 5.2 0Z" fill="url(#py2)" stroke="#d6c23c" stroke-width="0.5"/>
<path transform="rotate(16.0)" d="M5.2 0 C15.7 -4.6 31.3 -11.2 46.9 -7.9 C55.2 -5.1 55.2 5.1 46.9 7.9 C31.3 11.2 15.7 4.6 5.2 0Z" fill="url(#py2)" stroke="#d6c23c" stroke-width="0.5"/>
<path transform="rotate(39.3)" d="M5.2 0 C15.3 -4.4 30.5 -10.5 45.6 -7.4 C53.7 -4.8 53.7 4.8 45.6 7.4 C30.5 10.5 15.3 4.4 5.2 0Z" fill="url(#py2)" stroke="#d6c23c" stroke-width="0.5"/>
<path transform="rotate(56.8)" d="M5.2 0 C15.4 -4.5 30.5 -10.9 45.7 -7.7 C53.8 -5.0 53.8 5.0 45.7 7.7 C30.5 10.9 15.4 4.5 5.2 0Z" fill="url(#py2)" stroke="#d6c23c" stroke-width="0.5"/>
<path transform="rotate(78.4)" d="M5.2 0 C15.6 -4.2 31.0 -10.1 46.5 -7.1 C54.7 -4.6 54.7 4.6 46.5 7.1 C31.0 10.1 15.6 4.2 5.2 0Z" fill="url(#py2)" stroke="#d6c23c" stroke-width="0.5"/>
<path transform="rotate(106.0)" d="M5.2 0 C15.2 -4.8 30.1 -11.5 45.0 -8.1 C52.9 -5.3 52.9 5.3 45.0 8.1 C30.1 11.5 15.2 4.8 5.2 0Z" fill="url(#py2)" stroke="#d6c23c" stroke-width="0.5"/>
<path transform="rotate(123.7)" d="M5.2 0 C15.2 -5.0 30.2 -12.0 45.1 -8.5 C53.1 -5.5 53.1 5.5 45.1 8.5 C30.2 12.0 15.2 5.0 5.2 0Z" fill="url(#py2)" stroke="#d6c23c" stroke-width="0.5"/>
<path transform="rotate(146.5)" d="M5.2 0 C16.7 -4.9 33.9 -11.8 51.0 -8.4 C60.2 -5.4 60.2 5.4 51.0 8.4 C33.9 11.8 16.7 4.9 5.2 0Z" fill="url(#py2)" stroke="#d6c23c" stroke-width="0.5"/>
<path transform="rotate(175.6)" d="M5.2 0 C15.4 -4.5 30.6 -10.8 45.8 -7.7 C53.9 -5.0 53.9 5.0 45.8 7.7 C30.6 10.8 15.4 4.5 5.2 0Z" fill="url(#py2)" stroke="#d6c23c" stroke-width="0.5"/>
<path transform="rotate(190.2)" d="M5.2 0 C16.7 -4.9 33.8 -11.8 51.0 -8.3 C60.1 -5.4 60.1 5.4 51.0 8.3 C33.8 11.8 16.7 4.9 5.2 0Z" fill="url(#py2)" stroke="#d6c23c" stroke-width="0.5"/>
<path transform="rotate(218.0)" d="M5.2 0 C15.9 -4.4 31.9 -10.5 47.9 -7.5 C56.4 -4.8 56.4 4.8 47.9 7.5 C31.9 10.5 15.9 4.4 5.2 0Z" fill="url(#py2)" stroke="#d6c23c" stroke-width="0.5"/>
<path transform="rotate(242.5)" d="M5.2 0 C15.9 -4.7 32.0 -11.2 48.0 -8.0 C56.6 -5.2 56.6 5.2 48.0 8.0 C32.0 11.2 15.9 4.7 5.2 0Z" fill="url(#py2)" stroke="#d6c23c" stroke-width="0.5"/>
<path transform="rotate(258.2)" d="M5.2 0 C15.5 -4.1 30.9 -9.9 46.4 -7.0 C54.6 -4.5 54.6 4.5 46.4 7.0 C30.9 9.9 15.5 4.1 5.2 0Z" fill="url(#py2)" stroke="#d6c23c" stroke-width="0.5"/>
<path transform="rotate(286.4)" d="M5.2 0 C16.1 -4.2 32.3 -10.1 48.5 -7.1 C57.2 -4.6 57.2 4.6 48.5 7.1 C32.3 10.1 16.1 4.2 5.2 0Z" fill="url(#py2)" stroke="#d6c23c" stroke-width="0.5"/>
<path transform="rotate(310.5)" d="M5.2 0 C15.6 -4.5 31.1 -10.7 46.6 -7.6 C54.9 -4.9 54.9 4.9 46.6 7.6 C31.1 10.7 15.6 4.5 5.2 0Z" fill="url(#py2)" stroke="#d6c23c" stroke-width="0.5"/>
<path transform="rotate(325.8)" d="M5.2 0 C15.6 -4.9 31.1 -11.8 46.7 -8.3 C55.0 -5.4 55.0 5.4 46.7 8.3 C31.1 11.8 15.6 4.9 5.2 0Z" fill="url(#py2)" stroke="#d6c23c" stroke-width="0.5"/>
<path transform="rotate(350.1)" d="M5.2 0 C15.4 -4.5 30.7 -10.9 46.0 -7.7 C54.1 -5.0 54.1 5.0 46.0 7.7 C30.7 10.9 15.4 4.5 5.2 0Z" fill="url(#py2)" stroke="#d6c23c" stroke-width="0.5"/>
<circle r="13.4" fill="#a08a24"/>
<circle r="10.5" fill="url(#yc)"/>
</g>
<circle cx="153" cy="42" r="12.2" fill="#a08a24"/><circle cx="153" cy="42" r="9.5" fill="url(#yc)"/>
</g>
</svg>
<div id="tree" class="abs"><div class="hd"></div>
<div class="trow" style="top:18px">
<i class="tri"></i>
<span class="cbw" style="left:27px"><span class="cb on"><i class="dash"></i></span></span>
<span class="tl" style="left:54.3px;letter-spacing:-0.344px">Photo(102)</span>
</div>
<div class="trow sel" style="top:38px">
<span class="cbw" style="left:47px"><span class="cb on"><svg width="18" height="18" viewBox="0 0 18 18"><path d="M5 9.4 L8 12.5 L14.7 3.2" fill="none" stroke="#0a1430" stroke-width="2.5" stroke-linecap="round" stroke-linejoin="miter"/></svg></span></span>
<span class="icw" style="left:74px"><svg class="ico" width="17" height="17" viewBox="0 0 17 17"><g transform="rotate(3.5 8 8)"><path d="M1 11 L14.8 11 L15.4 15.2 L8 14.8 L0.9 13.6 Z" fill="#c9c9c9"/><path d="M1.2 11 L14.6 11 L14.9 13.9 L1.1 12.9 Z" fill="#e9e9e9"/><rect x="1.1" y="0.9" width="13.6" height="11.8" fill="#f3f3f3" stroke="#cfcfcf" stroke-width="0.4"/><rect x="2" y="1.7" width="11.8" height="10.2" fill="#f0a224"/><circle cx="5" cy="4.6" r="2.3" fill="#e65c1c"/><circle cx="10" cy="8" r="2.6" fill="#de4c18"/><circle cx="10.4" cy="3.6" r="1.9" fill="#f8d038"/><circle cx="4.6" cy="9.2" r="2" fill="#f6c234"/><circle cx="7.4" cy="6.4" r="1.3" fill="#c43c10"/><circle cx="12.4" cy="6" r="1" fill="#e0581c"/><circle cx="7.6" cy="10.4" r="1.1" fill="#e86420"/></g></svg></span>
<span class="tl" style="left:96.1px;letter-spacing:-0.131px">jpg Files (38)</span>
</div>
<div class="trow" style="top:58px">
<span class="cbw" style="left:47px"><span class="cb"></span></span>
<span class="icw" style="left:74px"><svg class="ico" width="17" height="17" viewBox="0 0 17 17"><g transform="rotate(3.5 8 8)"><path d="M1 11 L14.8 11 L15.4 15.2 L8 14.8 L0.9 13.6 Z" fill="#c9c9c9"/><path d="M1.2 11 L14.6 11 L14.9 13.9 L1.1 12.9 Z" fill="#e9e9e9"/><rect x="1.1" y="0.9" width="13.6" height="11.8" fill="#f3f3f3" stroke="#cfcfcf" stroke-width="0.4"/><rect x="2" y="1.7" width="11.8" height="10.2" fill="#c62a1e"/><circle cx="5.2" cy="4.6" r="1.7" fill="#f2c424"/><path d="M8.6 1.7 H13.8 V6.4 H10 Z" fill="#e6dccc"/><circle cx="10.6" cy="8.8" r="3" fill="#f2aa1a"/><circle cx="10.8" cy="9" r="1.3" fill="#34200e"/></g></svg></span>
<span class="tl" style="left:96.1px;letter-spacing:-0.185px">png Files (64)</span>
</div>
<div class="trow" style="top:78px">
<i class="tri"></i>
<span class="cbw" style="left:27px"><span class="cb"></span></span>
<span class="tl" style="left:54.3px;letter-spacing:-0.378px">Office(58)</span>
</div>
<div class="trow" style="top:98px">
<span class="cbw" style="left:47px"><span class="cb"></span></span>
<span class="icw" style="left:74px"><svg class="ico" width="17" height="17" viewBox="0 0 17 17"><g transform="rotate(2 8 8)"><path d="M1 11 L14.8 11 L15.4 15.2 L8 14.8 L0.9 13.6 Z" fill="#c9c9c9"/><path d="M1.2 11 L14.6 11 L14.9 13.9 L1.1 12.9 Z" fill="#e9e9e9"/><rect x="1.1" y="0.9" width="13.6" height="11.8" fill="#f3f3f3" stroke="#cfcfcf" stroke-width="0.4"/><rect x="2" y="1.6" width="6" height="5.6" fill="#d6342c"/><rect x="8" y="1.6" width="6" height="5.6" fill="#84bc3c"/><rect x="8" y="7.2" width="6" height="5" fill="#f0b61e"/><rect x="0.6" y="8.4" width="7" height="7" fill="#7a98c6" stroke="#56729e" stroke-width="0.6"/></g></svg></span>
<span class="tl" style="left:96.1px;letter-spacing:-0.169px">docx Files (3)</span>
</div>
<div class="trow" style="top:118px">
<span class="cbw" style="left:47px"><span class="cb"></span></span>
<span class="icw" style="left:74px"><svg class="ico" width="17" height="17" viewBox="0 0 17 17"><defs><linearGradient id="tx" x1="0" y1="0" x2="1" y2="1"><stop offset="0" stop-color="#eaf8fc"/><stop offset="1" stop-color="#84c8de"/></linearGradient></defs><path d="M2 11 L15 12 L14.8 15.4 L0.8 13.8 Z" fill="#cfcfcf"/><path d="M3.2 1.2 L15.4 2.2 L14.2 13.4 L1 12.2 Z" fill="#ebebeb"/><path d="M4 2.4 L14.6 3.2 L13 11.8 L2 10.8 Z" fill="url(#tx)" stroke="#b4c6cc" stroke-width="0.4"/></svg></span>
<span class="tl" style="left:96.1px;letter-spacing:-0.185px">txt Files (43)</span>
</div>
<div class="trow" style="top:138px">
<span class="cbw" style="left:47px"><span class="cb"></span></span>
<span class="icw" style="left:74px"><svg class="ico" width="17" height="17" viewBox="0 0 17 17"><g transform="rotate(2 8 8)"><path d="M1 11 L14.8 11 L15.4 15.2 L8 14.8 L0.9 13.6 Z" fill="#c9c9c9"/><path d="M1.2 11 L14.6 11 L14.9 13.9 L1.1 12.9 Z" fill="#e9e9e9"/><rect x="1.1" y="0.9" width="13.6" height="11.8" fill="#f3f3f3" stroke="#cfcfcf" stroke-width="0.4"/><rect x="2" y="1.6" width="6" height="5.6" fill="#d6342c"/><rect x="8" y="1.6" width="6" height="5.6" fill="#84bc3c"/><rect x="8" y="7.2" width="6" height="5" fill="#f0b61e"/><rect x="0.6" y="8.4" width="7" height="7" fill="#7a98c6" stroke="#56729e" stroke-width="0.6"/></g></svg></span>
<span class="tl" style="left:96.1px;letter-spacing:-0.114px">xlsx Files (12)</span>
</div>
<div class="trow" style="top:158px">
<i class="tri"></i>
<span class="cbw" style="left:27px"><span class="cb"></span></span>
<span class="tl" style="left:54.3px;letter-spacing:-0.375px">Video(41)</span>
</div>
<div class="trow" style="top:178px">
<span class="cbw" style="left:47px"><span class="cb"></span></span>
<span class="icw" style="left:74px"><svg class="ico" width="17" height="17" viewBox="0 0 17 17"><g transform="rotate(3.5 8 8)"><path d="M1 11 L14.8 11 L15.4 15.2 L8 14.8 L0.9 13.6 Z" fill="#c9c9c9"/><path d="M1.2 11 L14.6 11 L14.9 13.9 L1.1 12.9 Z" fill="#e9e9e9"/><rect x="1.1" y="0.9" width="13.6" height="11.8" fill="#f7f7f7" stroke="#cfcfcf" stroke-width="0.4"/><ellipse cx="7.8" cy="6.4" rx="5.8" ry="4.6" fill="#5ab24a"/><ellipse cx="8.4" cy="6.2" rx="4.1" ry="3.1" fill="#7ab6ea"/><path d="M6.8 4.4 L10.8 6.3 L6.8 8.2 Z" fill="#4a8ee2"/></g></svg></span>
<span class="tl" style="left:96.1px;letter-spacing:-0.275px">mkv Files (9)</span>
</div>
<div class="trow" style="top:198px">
<span class="cbw" style="left:47px"><span class="cb"></span></span>
<span class="icw" style="left:74px"><svg class="ico" width="17" height="17" viewBox="0 0 17 17"><g transform="rotate(3.5 8 8)"><path d="M1 11 L14.8 11 L15.4 15.2 L8 14.8 L0.9 13.6 Z" fill="#c9c9c9"/><path d="M1.2 11 L14.6 11 L14.9 13.9 L1.1 12.9 Z" fill="#e9e9e9"/><rect x="1.1" y="0.9" width="13.6" height="11.8" fill="#f7f7f7" stroke="#cfcfcf" stroke-width="0.4"/><circle cx="7.8" cy="6.4" r="4" fill="#f2f9ff" stroke="#2c8eea" stroke-width="2"/><path d="M7.8 6.4 L10 3.8" stroke="#2c8eea" stroke-width="1.2"/><path d="M9.8 9 L12.2 11.6" stroke="#2c8eea" stroke-width="1.9"/></g></svg></span>
<span class="tl" style="left:96.1px;letter-spacing:-0.300px">mov Files (7)</span>
</div>
<div class="trow" style="top:218px">
<span class="cbw" style="left:47px"><span class="cb"></span></span>
<span class="icw" style="left:74px"><svg class="ico" width="17" height="17" viewBox="0 0 17 17"><g transform="rotate(3.5 8 8)"><path d="M1 11 L14.8 11 L15.4 15.2 L8 14.8 L0.9 13.6 Z" fill="#c9c9c9"/><path d="M1.2 11 L14.6 11 L14.9 13.9 L1.1 12.9 Z" fill="#e9e9e9"/><rect x="1.1" y="0.9" width="13.6" height="11.8" fill="#f7f7f7" stroke="#cfcfcf" stroke-width="0.4"/><ellipse cx="7.8" cy="6.4" rx="5.8" ry="4.6" fill="#5ab24a"/><ellipse cx="8.4" cy="6.2" rx="4.1" ry="3.1" fill="#7ab6ea"/><path d="M6.8 4.4 L10.8 6.3 L6.8 8.2 Z" fill="#4a8ee2"/></g></svg></span>
<span class="tl" style="left:96.1px;letter-spacing:-0.275px">rmv Files (2)</span>
</div>
<div class="trow" style="top:238px">
<span class="cbw" style="left:47px"><span class="cb"></span></span>
<span class="icw" style="left:74px"><svg class="ico" width="17" height="17" viewBox="0 0 17 17"><g transform="rotate(3.5 8 8)"><path d="M1 11 L14.8 11 L15.4 15.2 L8 14.8 L0.9 13.6 Z" fill="#c9c9c9"/><path d="M1.2 11 L14.6 11 L14.9 13.9 L1.1 12.9 Z" fill="#e9e9e9"/><rect x="1.1" y="0.9" width="13.6" height="11.8" fill="#f7f7f7" stroke="#cfcfcf" stroke-width="0.4"/><circle cx="4.6" cy="5.6" r="2.5" fill="none" stroke="#2a7ed2" stroke-width="1.4"/><path d="M4.2 8 L5.4 10.8 L6.8 7.8" fill="#2a7ed2"/><rect x="6.8" y="3.4" width="6.6" height="3.4" fill="#363e4a"/><rect x="8.4" y="8" width="4.4" height="1.6" fill="#5aa2e2"/></g></svg></span>
<span class="tl" style="left:96.1px;letter-spacing:-0.243px">rmvb Files (23)</span>
</div>
<div class="trow" style="top:258px">
<i class="tri"></i>
<span class="cbw" style="left:27px"><span class="cb"></span></span>
<span class="tl" style="left:54.3px;letter-spacing:-0.400px">Archive(75)</span>
</div>
<div class="trow" style="top:278px">
<span class="cbw" style="left:47px"><span class="cb"></span></span>
<span class="icw" style="left:74px"><svg class="ico" width="17" height="17" viewBox="0 0 17 17"><g transform="rotate(3.5 8 8)"><path d="M1 11 L14.8 11 L15.4 15.2 L8 14.8 L0.9 13.6 Z" fill="#c9c9c9"/><path d="M1.2 11 L14.6 11 L14.9 13.9 L1.1 12.9 Z" fill="#e9e9e9"/><rect x="1.1" y="0.9" width="13.6" height="11.8" fill="#f3f3f3" stroke="#cfcfcf" stroke-width="0.4"/><linearGradient id="zg" x1="0" y1="0" x2="0" y2="1"><stop offset="0" stop-color="#a2de38"/><stop offset="1" stop-color="#7cc422"/></linearGradient><rect x="1.1" y="0.9" width="13.6" height="11.6" fill="url(#zg)"/><rect x="6.9" y="0.9" width="2" height="8" fill="#c9c9c1"/><rect x="7.5" y="0.9" width="0.8" height="8" fill="#8e8e86"/><rect x="6.7" y="8" width="2.4" height="2.8" fill="#a4a498"/></g></svg></span>
<span class="tl" style="left:96.1px;letter-spacing:-0.254px">dmg Files (53)</span>
</div>
<div class="trow" style="top:298px">
<span class="cbw" style="left:47px"><span class="cb"></span></span>
<span class="icw" style="left:74px"><svg class="ico" width="17" height="17" viewBox="0 0 17 17"><g transform="rotate(3.5 8 8)"><path d="M1 11 L14.8 11 L15.4 15.2 L8 14.8 L0.9 13.6 Z" fill="#c9c9c9"/><path d="M1.2 11 L14.6 11 L14.9 13.9 L1.1 12.9 Z" fill="#e9e9e9"/><rect x="1.1" y="0.9" width="13.6" height="11.8" fill="#f3f3f3" stroke="#cfcfcf" stroke-width="0.4"/><rect x="1.1" y="0.9" width="13.6" height="11.4" fill="#161616"/><rect x="2.4" y="2.2" width="3.2" height="1.2" fill="#a0a0a0"/><rect x="2.4" y="4.2" width="1.6" height="1" fill="#6c6c6c"/></g></svg></span>
<span class="tl" style="left:96.1px;letter-spacing:-0.231px">exe Files (11)</span>
</div>
<div class="trow" style="top:318px">
<span class="cbw" style="left:47px"><span class="cb"></span></span>
<span class="icw" style="left:74px"><svg class="ico" width="17" height="17" viewBox="0 0 17 17"><g transform="rotate(3.5 8 8)"><path d="M1 11 L14.8 11 L15.4 15.2 L8 14.8 L0.9 13.6 Z" fill="#c9c9c9"/><path d="M1.2 11 L14.6 11 L14.9 13.9 L1.1 12.9 Z" fill="#e9e9e9"/><rect x="1.1" y="0.9" width="13.6" height="11.8" fill="#f3f3f3" stroke="#cfcfcf" stroke-width="0.4"/><rect x="1.1" y="0.9" width="13.6" height="11.4" fill="#d69ad8"/><path d="M1.1 3.2 L14.7 1.6 M1.1 6.2 L14.7 4.6 M1.1 9.2 L14.7 7.6" stroke="#e85c9c" stroke-width="1.2"/><path d="M1.1 4.7 L14.7 3.1 M1.1 7.7 L14.7 6.1" stroke="#8c7cda" stroke-width="1"/><path d="M1.1 10.9 L14.7 9.6" stroke="#f0c244" stroke-width="1.2"/><rect x="5.2" y="5" width="4" height="7" fill="#aabaea" opacity="0.9"/></g></svg></span>
<span class="tl" style="left:96.1px;letter-spacing:-0.217px">rar Files (1)</span>
</div>
<div class="trow" style="top:338px">
<span class="cbw" style="left:47px"><span class="cb"></span></span>
<span class="icw" style="left:74px"><svg class="ico" width="17" height="17" viewBox="0 0 17 17"><g transform="rotate(3.5 8 8)"><path d="M1 11 L14.8 11 L15.4 15.2 L8 14.8 L0.9 13.6 Z" fill="#c9c9c9"/><path d="M1.2 11 L14.6 11 L14.9 13.9 L1.1 12.9 Z" fill="#e9e9e9"/><rect x="1.1" y="0.9" width="13.6" height="11.8" fill="#f3f3f3" stroke="#cfcfcf" stroke-width="0.4"/><linearGradient id="zg" x1="0" y1="0" x2="0" y2="1"><stop offset="0" stop-color="#a2de38"/><stop offset="1" stop-color="#7cc422"/></linearGradient><rect x="1.1" y="0.9" width="13.6" height="11.6" fill="url(#zg)"/><rect x="6.9" y="0.9" width="2" height="8" fill="#c9c9c1"/><rect x="7.5" y="0.9" width="0.8" height="8" fill="#8e8e86"/><rect x="6.7" y="8" width="2.4" height="2.8" fill="#a4a498"/></g></svg></span>
<span class="tl" style="left:96.1px;letter-spacing:-0.100px">zip Files (10)</span>
</div>
<div class="trow" style="top:358px">
<i class="tri"></i>
<span class="cbw" style="left:27px"><span class="cb"></span></span>
<span class="tl" style="left:54.3px;letter-spacing:-0.400px">Other(44)</span>
</div>
<div class="trow" style="top:378px">
<span class="cbw" style="left:47px"><span class="cb"></span></span>
<span class="icw" style="left:74px"><svg class="ico" width="17" height="17" viewBox="0 0 17 17"><g transform="rotate(3.5 8 8)"><path d="M1 11 L14.8 11 L15.4 15.2 L8 14.8 L0.9 13.6 Z" fill="#c9c9c9"/><path d="M1.2 11 L14.6 11 L14.9 13.9 L1.1 12.9 Z" fill="#e9e9e9"/><rect x="1.1" y="0.9" width="13.6" height="11.8" fill="#f8f8f8" stroke="#cfcfcf" stroke-width="0.4"/><circle cx="4" cy="4.2" r="1.25" fill="#5cba2c"/><rect x="6.2" y="3.5" width="6.8" height="1.3" fill="#d4d4d4"/><circle cx="4" cy="8.6" r="1.25" fill="#5cba2c"/><rect x="6.2" y="7.9" width="6.8" height="1.3" fill="#d4d4d4"/></g></svg></span>
<span class="tl" style="left:96.1px;letter-spacing:-0.010px">0090c9ef-4d7 Files (1)</span>
</div>
<div class="trow" style="top:398px">
<span class="cbw" style="left:47px"><span class="cb"></span></span>
<span class="icw" style="left:74px"><svg class="ico" width="17" height="17" viewBox="0 0 17 17"><g transform="rotate(3.5 8 8)"><path d="M1 11 L14.8 11 L15.4 15.2 L8 14.8 L0.9 13.6 Z" fill="#c9c9c9"/><path d="M1.2 11 L14.6 11 L14.9 13.9 L1.1 12.9 Z" fill="#e9e9e9"/><rect x="1.1" y="0.9" width="13.6" height="11.8" fill="#f8f8f8" stroke="#cfcfcf" stroke-width="0.4"/><circle cx="4" cy="4.2" r="1.25" fill="#5cba2c"/><rect x="6.2" y="3.5" width="6.8" height="1.3" fill="#d4d4d4"/><circle cx="4" cy="8.6" r="1.25" fill="#5cba2c"/><rect x="6.2" y="7.9" width="6.8" height="1.3" fill="#d4d4d4"/></g></svg></span>
<span class="tl" style="left:96.1px;letter-spacing:0.229px">0090c9ef-4d78-4c88</span>
</div>
<div class="sb" style="left:257px;top:0;width:15px;height:410px"></div>
<div class="sbtn" style="left:257px;top:0;width:14px;height:16px;border-right:0"></div><i class="aup" style="left:261.6px;top:5.4px"></i>
<div class="sbtn" style="left:257px;top:16px;width:14px;height:155px"></div>
<div class="sbtn" style="left:257px;top:394px;width:14px;height:15px;border-bottom:0"></div><i class="adn" style="left:261.8px;top:400px"></i>
</div>
<div id="tbl" class="abs"><div class="th"><span style="position:absolute;left:4px">Name</span><span style="position:absolute;left:404px">Size</span></div>
<div class="frow" style="top:21px"><span class="cbw" style="left:7px;top:2px"><span class="cb on"><svg width="18" height="18" viewBox="0 0 18 18"><path d="M5 9.4 L8 12.5 L14.7 3.2" fill="none" stroke="#0a1430" stroke-width="2.5" stroke-linecap="round" stroke-linejoin="miter"/></svg></span></span><span class="icw" style="left:33.5px;top:2px"><svg class="ico" width="17" height="17" viewBox="0 0 17 17"><g transform="rotate(3.5 8 8)"><path d="M1 11 L14.8 11 L15.4 15.2 L8 14.8 L0.9 13.6 Z" fill="#c9c9c9"/><path d="M1.2 11 L14.6 11 L14.9 13.9 L1.1 12.9 Z" fill="#e9e9e9"/><rect x="1.1" y="0.9" width="13.6" height="11.8" fill="#f3f3f3" stroke="#cfcfcf" stroke-width="0.4"/><rect x="2" y="1.7" width="11.8" height="10.2" fill="#f0a224"/><circle cx="5" cy="4.6" r="2.3" fill="#e65c1c"/><circle cx="10" cy="8" r="2.6" fill="#de4c18"/><circle cx="10.4" cy="3.6" r="1.9" fill="#f8d038"/><circle cx="4.6" cy="9.2" r="2" fill="#f6c234"/><circle cx="7.4" cy="6.4" r="1.3" fill="#c43c10"/><circle cx="12.4" cy="6" r="1" fill="#e0581c"/><circle cx="7.6" cy="10.4" r="1.1" fill="#e86420"/></g></svg></span><span class="fn">!.jpg</span><span class="fs" style='letter-spacing:-0.7px'>0 Bytes</span></div>
<div class="frow" style="top:43px"><span class="cbw" style="left:7px;top:2px"><span class="cb on"><svg width="18" height="18" viewBox="0 0 18 18"><path d="M5 9.4 L8 12.5 L14.7 3.2" fill="none" stroke="#0a1430" stroke-width="2.5" stroke-linecap="round" stroke-linejoin="miter"/></svg></span></span><span class="icw" style="left:33.5px;top:2px"><svg class="ico" width="17" height="17" viewBox="0 0 17 17"><g transform="rotate(3.5 8 8)"><path d="M1 11 L14.8 11 L15.4 15.2 L8 14.8 L0.9 13.6 Z" fill="#c9c9c9"/><path d="M1.2 11 L14.6 11 L14.9 13.9 L1.1 12.9 Z" fill="#e9e9e9"/><rect x="1.1" y="0.9" width="13.6" height="11.8" fill="#f3f3f3" stroke="#cfcfcf" stroke-width="0.4"/><rect x="2" y="1.7" width="11.8" height="10.2" fill="#f0a224"/><circle cx="5" cy="4.6" r="2.3" fill="#e65c1c"/><circle cx="10" cy="8" r="2.6" fill="#de4c18"/><circle cx="10.4" cy="3.6" r="1.9" fill="#f8d038"/><circle cx="4.6" cy="9.2" r="2" fill="#f6c234"/><circle cx="7.4" cy="6.4" r="1.3" fill="#c43c10"/><circle cx="12.4" cy="6" r="1" fill="#e0581c"/><circle cx="7.6" cy="10.4" r="1.1" fill="#e86420"/></g></svg></span><span class="fn">!mg_8555.jpg</span><span class="fs">2.38 MB</span></div>
<div class="frow" style="top:65px"><span class="cbw" style="left:7px;top:2px"><span class="cb on"><svg width="18" height="18" viewBox="0 0 18 18"><path d="M5 9.4 L8 12.5 L14.7 3.2" fill="none" stroke="#0a1430" stroke-width="2.5" stroke-linecap="round" stroke-linejoin="miter"/></svg></span></span><span class="icw" style="left:33.5px;top:2px"><svg class="ico" width="17" height="17" viewBox="0 0 17 17"><g transform="rotate(3.5 8 8)"><path d="M1 11 L14.8 11 L15.4 15.2 L8 14.8 L0.9 13.6 Z" fill="#c9c9c9"/><path d="M1.2 11 L14.6 11 L14.9 13.9 L1.1 12.9 Z" fill="#e9e9e9"/><rect x="1.1" y="0.9" width="13.6" height="11.8" fill="#f3f3f3" stroke="#cfcfcf" stroke-width="0.4"/><rect x="2" y="1.7" width="11.8" height="10.2" fill="#f0a224"/><circle cx="5" cy="4.6" r="2.3" fill="#e65c1c"/><circle cx="10" cy="8" r="2.6" fill="#de4c18"/><circle cx="10.4" cy="3.6" r="1.9" fill="#f8d038"/><circle cx="4.6" cy="9.2" r="2" fill="#f6c234"/><circle cx="7.4" cy="6.4" r="1.3" fill="#c43c10"/><circle cx="12.4" cy="6" r="1" fill="#e0581c"/><circle cx="7.6" cy="10.4" r="1.1" fill="#e86420"/></g></svg></span><span class="fn">!mg_8556.jpg</span><span class="fs">2.37 MB</span></div>
<div class="frow" style="top:87px"><span class="cbw" style="left:7px;top:2px"><span class="cb on"><svg width="18" height="18" viewBox="0 0 18 18"><path d="M5 9.4 L8 12.5 L14.7 3.2" fill="none" stroke="#0a1430" stroke-width="2.5" stroke-linecap="round" stroke-linejoin="miter"/></svg></span></span><span class="icw" style="left:33.5px;top:2px"><svg class="ico" width="17" height="17" viewBox="0 0 17 17"><g transform="rotate(3.5 8 8)"><path d="M1 11 L14.8 11 L15.4 15.2 L8 14.8 L0.9 13.6 Z" fill="#c9c9c9"/><path d="M1.2 11 L14.6 11 L14.9 13.9 L1.1 12.9 Z" fill="#e9e9e9"/><rect x="1.1" y="0.9" width="13.6" height="11.8" fill="#f3f3f3" stroke="#cfcfcf" stroke-width="0.4"/><rect x="2" y="1.7" width="11.8" height="10.2" fill="#f0a224"/><circle cx="5" cy="4.6" r="2.3" fill="#e65c1c"/><circle cx="10" cy="8" r="2.6" fill="#de4c18"/><circle cx="10.4" cy="3.6" r="1.9" fill="#f8d038"/><circle cx="4.6" cy="9.2" r="2" fill="#f6c234"/><circle cx="7.4" cy="6.4" r="1.3" fill="#c43c10"/><circle cx="12.4" cy="6" r="1" fill="#e0581c"/><circle cx="7.6" cy="10.4" r="1.1" fill="#e86420"/></g></svg></span><span class="fn">!mg_8557.jpg</span><span class="fs">2.30 MB</span></div>
<div class="frow" style="top:109px"><span class="cbw" style="left:7px;top:2px"><span class="cb on"><svg width="18" height="18" viewBox="0 0 18 18"><path d="M5 9.4 L8 12.5 L14.7 3.2" fill="none" stroke="#0a1430" stroke-width="2.5" stroke-linecap="round" stroke-linejoin="miter"/></svg></span></span><span class="icw" style="left:33.5px;top:2px"><svg class="ico" width="17" height="17" viewBox="0 0 17 17"><g transform="rotate(3.5 8 8)"><path d="M1 11 L14.8 11 L15.4 15.2 L8 14.8 L0.9 13.6 Z" fill="#c9c9c9"/><path d="M1.2 11 L14.6 11 L14.9 13.9 L1.1 12.9 Z" fill="#e9e9e9"/><rect x="1.1" y="0.9" width="13.6" height="11.8" fill="#f3f3f3" stroke="#cfcfcf" stroke-width="0.4"/><rect x="2" y="1.7" width="11.8" height="10.2" fill="#f0a224"/><circle cx="5" cy="4.6" r="2.3" fill="#e65c1c"/><circle cx="10" cy="8" r="2.6" fill="#de4c18"/><circle cx="10.4" cy="3.6" r="1.9" fill="#f8d038"/><circle cx="4.6" cy="9.2" r="2" fill="#f6c234"/><circle cx="7.4" cy="6.4" r="1.3" fill="#c43c10"/><circle cx="12.4" cy="6" r="1" fill="#e0581c"/><circle cx="7.6" cy="10.4" r="1.1" fill="#e86420"/></g></svg></span><span class="fn">!mg_8560.jpg</span><span class="fs">2.26 MB</span></div>
<div class="frow" style="top:131px"><span class="cbw" style="left:7px;top:2px"><span class="cb on"><svg width="18" height="18" viewBox="0 0 18 18"><path d="M5 9.4 L8 12.5 L14.7 3.2" fill="none" stroke="#0a1430" stroke-width="2.5" stroke-linecap="round" stroke-linejoin="miter"/></svg></span></span><span class="icw" style="left:33.5px;top:2px"><svg class="ico" width="17" height="17" viewBox="0 0 17 17"><g transform="rotate(3.5 8 8)"><path d="M1 11 L14.8 11 L15.4 15.2 L8 14.8 L0.9 13.6 Z" fill="#c9c9c9"/><path d="M1.2 11 L14.6 11 L14.9 13.9 L1.1 12.9 Z" fill="#e9e9e9"/><rect x="1.1" y="0.9" width="13.6" height="11.8" fill="#f3f3f3" stroke="#cfcfcf" stroke-width="0.4"/><rect x="2" y="1.7" width="11.8" height="10.2" fill="#f0a224"/><circle cx="5" cy="4.6" r="2.3" fill="#e65c1c"/><circle cx="10" cy="8" r="2.6" fill="#de4c18"/><circle cx="10.4" cy="3.6" r="1.9" fill="#f8d038"/><circle cx="4.6" cy="9.2" r="2" fill="#f6c234"/><circle cx="7.4" cy="6.4" r="1.3" fill="#c43c10"/><circle cx="12.4" cy="6" r="1" fill="#e0581c"/><circle cx="7.6" cy="10.4" r="1.1" fill="#e86420"/></g></svg></span><span class="fn">!mg_8564.jpg</span><span class="fs">2.36 MB</span></div>
<div class="frow sel" style="top:153px"><span class="cbw" style="left:7px;top:2px"><span class="cb on"><svg width="18" height="18" viewBox="0 0 18 18"><path d="M5 9.4 L8 12.5 L14.7 3.2" fill="none" stroke="#0a1430" stroke-width="2.5" stroke-linecap="round" stroke-linejoin="miter"/></svg></span></span><span class="icw" style="left:33.5px;top:2px"><svg class="ico" width="17" height="17" viewBox="0 0 17 17"><g transform="rotate(3.5 8 8)"><path d="M1 11 L14.8 11 L15.4 15.2 L8 14.8 L0.9 13.6 Z" fill="#c9c9c9"/><path d="M1.2 11 L14.6 11 L14.9 13.9 L1.1 12.9 Z" fill="#e9e9e9"/><rect x="1.1" y="0.9" width="13.6" height="11.8" fill="#f3f3f3" stroke="#cfcfcf" stroke-width="0.4"/><rect x="2" y="1.7" width="11.8" height="10.2" fill="#f0a224"/><circle cx="5" cy="4.6" r="2.3" fill="#e65c1c"/><circle cx="10" cy="8" r="2.6" fill="#de4c18"/><circle cx="10.4" cy="3.6" r="1.9" fill="#f8d038"/><circle cx="4.6" cy="9.2" r="2" fill="#f6c234"/><circle cx="7.4" cy="6.4" r="1.3" fill="#c43c10"/><circle cx="12.4" cy="6" r="1" fill="#e0581c"/><circle cx="7.6" cy="10.4" r="1.1" fill="#e86420"/></g></svg></span><span class="fn">!mg_8585.jpg</span><span class="fs">2.32 MB</span></div>
<div class="frow" style="top:175px"><span class="cbw" style="left:7px;top:2px"><span class="cb on"><svg width="18" height="18" viewBox="0 0 18 18"><path d="M5 9.4 L8 12.5 L14.7 3.2" fill="none" stroke="#0a1430" stroke-width="2.5" stroke-linecap="round" stroke-linejoin="miter"/></svg></span></span><span class="icw" style="left:33.5px;top:2px"><svg class="ico" width="17" height="17" viewBox="0 0 17 17"><g transform="rotate(3.5 8 8)"><path d="M1 11 L14.8 11 L15.4 15.2 L8 14.8 L0.9 13.6 Z" fill="#c9c9c9"/><path d="M1.2 11 L14.6 11 L14.9 13.9 L1.1 12.9 Z" fill="#e9e9e9"/><rect x="1.1" y="0.9" width="13.6" height="11.8" fill="#f3f3f3" stroke="#cfcfcf" stroke-width="0.4"/><rect x="2" y="1.7" width="11.8" height="10.2" fill="#f0a224"/><circle cx="5" cy="4.6" r="2.3" fill="#e65c1c"/><circle cx="10" cy="8" r="2.6" fill="#de4c18"/><circle cx="10.4" cy="3.6" r="1.9" fill="#f8d038"/><circle cx="4.6" cy="9.2" r="2" fill="#f6c234"/><circle cx="7.4" cy="6.4" r="1.3" fill="#c43c10"/><circle cx="12.4" cy="6" r="1" fill="#e0581c"/><circle cx="7.6" cy="10.4" r="1.1" fill="#e86420"/></g></svg></span><span class="fn">!mg_8615.jpg</span><span class="fs">2.05 MB</span></div>
<div class="frow" style="top:197px"><span class="cbw" style="left:7px;top:2px"><span class="cb on"><svg width="18" height="18" viewBox="0 0 18 18"><path d="M5 9.4 L8 12.5 L14.7 3.2" fill="none" stroke="#0a1430" stroke-width="2.5" stroke-linecap="round" stroke-linejoin="miter"/></svg></span></span><span class="icw" style="left:33.5px;top:2px"><svg class="ico" width="17" height="17" viewBox="0 0 17 17"><g transform="rotate(3.5 8 8)"><path d="M1 11 L14.8 11 L15.4 15.2 L8 14.8 L0.9 13.6 Z" fill="#c9c9c9"/><path d="M1.2 11 L14.6 11 L14.9 13.9 L1.1 12.9 Z" fill="#e9e9e9"/><rect x="1.1" y="0.9" width="13.6" height="11.8" fill="#f3f3f3" stroke="#cfcfcf" stroke-width="0.4"/><rect x="2" y="1.7" width="11.8" height="10.2" fill="#f0a224"/><circle cx="5" cy="4.6" r="2.3" fill="#e65c1c"/><circle cx="10" cy="8" r="2.6" fill="#de4c18"/><circle cx="10.4" cy="3.6" r="1.9" fill="#f8d038"/><circle cx="4.6" cy="9.2" r="2" fill="#f6c234"/><circle cx="7.4" cy="6.4" r="1.3" fill="#c43c10"/><circle cx="12.4" cy="6" r="1" fill="#e0581c"/><circle cx="7.6" cy="10.4" r="1.1" fill="#e86420"/></g></svg></span><span class="fn">!mg_8621.jpg</span><span class="fs">2.12 MB</span></div>
<div class="vline" style="left:399px;top:0;height:210px"></div><div class="vline" style="left:399px;top:0;height:21px;background:#8f93dc"></div>
<div class="vline" style="left:702px;top:21px;height:190px"></div>
<div class="sbtn" style="left:703px;top:0;width:15px;height:14px;border-right:0"></div><i class="aup" style="left:708px;top:4.6px"></i>
<div class="sbtn" style="left:703px;top:14px;width:14px;height:37px"></div>
<div class="sbtn" style="left:703px;top:193px;width:15px;height:16px;border:0"></div><i class="adn" style="left:708px;top:195.5px"></i>
<div class="vline" style="left:718px;top:0;height:210px;background:#b0b0b0"></div>
</div>
<div class="btn" style="left:53px">Back</div><div class="btn" style="left:853px">Recovery</div>
<div id="ftr" class="abs"><span>Version 1.1.5.8</span></div><div id="bot" class="abs"></div>
<div id="frameT" class="abs"></div><div id="frameL" class="abs"></div><div id="frameR" class="abs"></div>
</body></html>
